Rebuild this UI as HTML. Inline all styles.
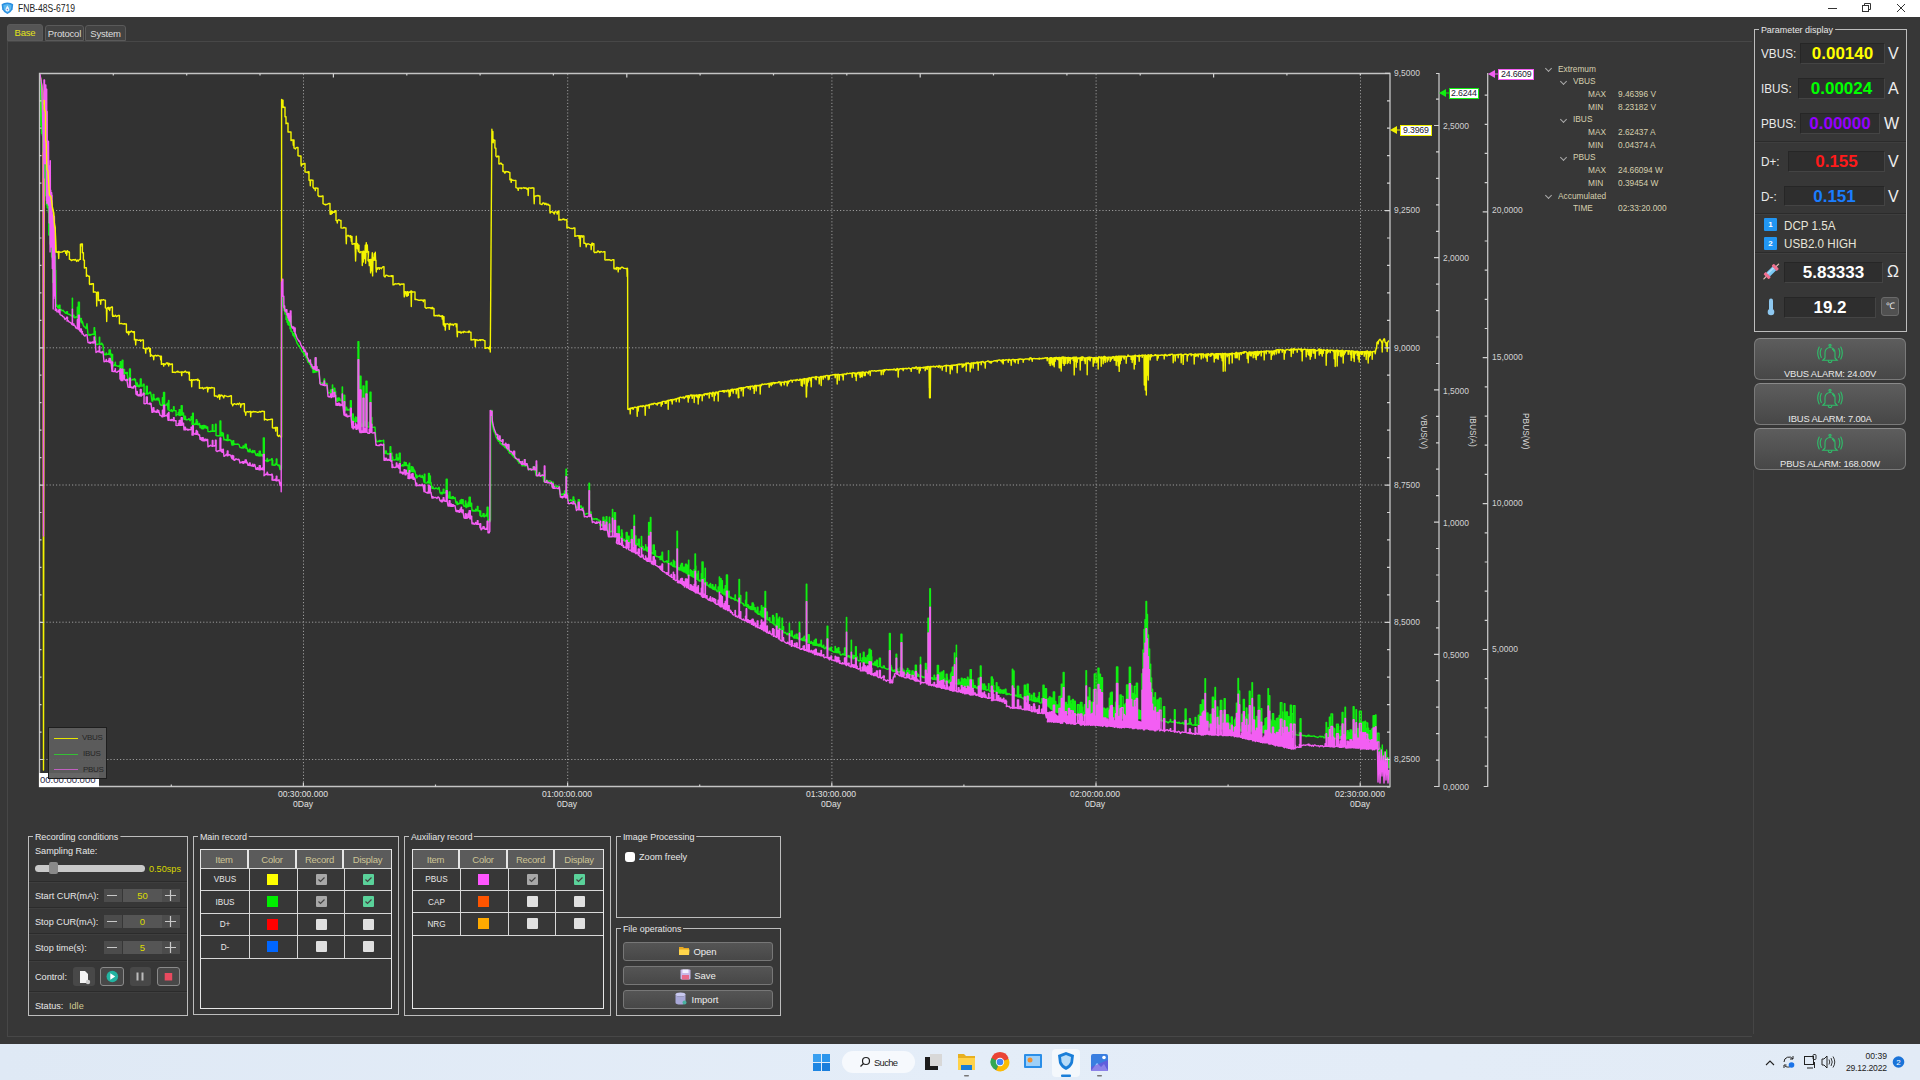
<!DOCTYPE html>
<html><head><meta charset="utf-8">
<style>
*{margin:0;padding:0;box-sizing:border-box}
html,body{width:1920px;height:1080px;overflow:hidden;background:#373737;font-family:"Liberation Sans",sans-serif;color:#e8e8e8}
.a{position:absolute}
#title{left:0;top:0;width:1920px;height:17px;background:#fff}
#title .t{left:17.5px;top:1.6px;font-size:10.2px;color:#222;line-height:13px;transform:scaleX(.84);transform-origin:0 0}
.tab{top:25px;height:16px;border:1px solid #5a5a5a;border-radius:3px 3px 0 0;background:#424242;font-size:9.5px;line-height:16px;text-align:center;color:#ddd;letter-spacing:-0.2px}
.pane{left:7px;top:41px;width:1745px;height:996px;border:1px solid #474747;border-right:none}
.grp{border:1px solid #bdbdbd}
.gt{font-size:9.5px;line-height:11px;background:#373737;padding:0 2px;color:#e8e8e8;transform:scaleX(.94);transform-origin:0 0}
#taskbar{left:0;top:1044px;width:1920px;height:36px;background:linear-gradient(90deg,#dfe9f5,#e4edf8 50%,#e2ebf6)}

.lbl{font-size:9px;line-height:10px;color:#d2d2d2;white-space:nowrap;transform:scaleX(.94);transform-origin:0 0}
.xl{font-size:8.6px;line-height:9.5px;color:#e0e0e0;text-align:center;width:80px;white-space:nowrap}
.vt{font-size:8.4px;line-height:10px;color:#d8d8d8;transform:rotate(90deg);transform-origin:0 0;white-space:nowrap}
.mk{height:11px;background:#fff;border:1px solid;font-size:8.8px;line-height:9px;color:#223;padding:0 1px;white-space:nowrap;letter-spacing:-0.2px}
.tree{font-size:9.8px;line-height:12.7px;color:#d6cfae;white-space:nowrap}
.tree>div:not(.chev){transform:scaleX(.85);transform-origin:0 0}
.chev{width:5px;height:5px;border-right:1px solid #aaa;border-bottom:1px solid #aaa;transform:rotate(45deg)}

.pl{font-size:13.5px;line-height:16px;color:#eaeaea;white-space:nowrap;transform:scaleX(.87);transform-origin:0 0}
.vb{border:1px solid #262626;border-right-color:#444;border-bottom-color:#444;background:#2e2e2e;font-weight:bold;font-size:17px;line-height:19px;text-align:center;white-space:nowrap}
.un{font-size:16px;line-height:18px;color:#eee}
.sep{height:2px;background:#2b2b2b;border-bottom:1px solid #3e3e3e}
.bdg{width:13px;height:13px;background:#2196f3;color:#fff;font-size:8px;line-height:13px;text-align:center;font-weight:bold;border-radius:1px}
.abtn{left:1754px;width:152px;height:42px;border:1px solid #7a7a7a;border-top-color:#8a8a8a;border-radius:6px;background:linear-gradient(#5d5d5d,#474747);font-size:9.4px;color:#e8e8e8;text-align:center;letter-spacing:-0.15px}

.rsep{left:29px;width:158px;height:2px;background:#2b2b2b;border-bottom:1px solid #3e3e3e}
.rl{font-size:9.5px;line-height:11px;color:#e8e8e8;white-space:nowrap;transform:scaleX(.96);transform-origin:0 0}
.sb{width:18px;height:13px;background:#4c4c4c}
.sv{width:39px;height:13px;background:#555;color:#dcdc00;font-size:9.5px;line-height:13px;text-align:center}
.cb{height:19px;border-radius:3px;background:#484848}
.tbl{border:1px solid #e6e6e6}
.th{top:850px;height:18px;background:#5b5b5b;border-right:2px solid #e6e6e6;font-size:9.5px;line-height:19px;text-align:center;color:#cdc596;letter-spacing:-0.25px}
.tr{height:1px;background:#d8d8d8}
.tc{width:1px;background:#d8d8d8}
.td{font-size:9.5px;line-height:12px;color:#e8e8e8;text-align:center;transform:scaleX(.86)}
.sq{width:11px;height:11px}
.ck{width:11px;height:11px;background:#e0e0e0;border-radius:1px}
.fb{left:623px;width:150px;height:19px;border:1px solid #777;border-radius:3px;background:linear-gradient(#555,#474747);font-size:9.5px;line-height:17px;text-align:center;color:#eee}

.tbi{top:1052px;width:20px;height:20px}
</style></head><body>
<div id="title" class="a">
  <svg class="a" style="left:0;top:0" width="16" height="17" viewBox="0 0 16 17"><path d="M1.6 4.2L4.2 3.1L7.4 2.6L10.6 3.1L13.2 4.2L12.6 9.2Q11 12.6 7.4 13.9Q3.8 12.6 2.2 9.2Z" fill="#2b8fe0"/><path d="M3.3 5L7.4 3.9L11.5 5L11 9Q9.8 11.6 7.4 12.6Q5 11.6 3.8 9Z" fill="#5ab8f0"/><path d="M7.4 5.6Q9.3 8.4 9.3 9.6A1.9 1.9 0 0 1 5.5 9.6Q5.5 8.4 7.4 5.6Z" fill="#eef4fb"/><circle cx="7.4" cy="9.6" r=".8" fill="#7a8ad8"/></svg>
  <div class="a t">FNB-48S-6719</div>
</div>
<div class="a tab" style="left:7px;top:24px;width:36px;height:17px;background:#555;border-color:#5a5a5a;color:#e3e31a">Base</div>
<div class="a tab" style="left:45px;width:39px">Protocol</div>
<div class="a tab" style="left:85px;width:41px">System</div>
<div class="a pane"></div>
<svg class="a" style="left:0;top:0" width="1920" height="1080" viewBox="0 0 1920 1080"><rect x="40" y="74" width="1349" height="712" fill="#323232"/><g stroke="#9a9a9a" stroke-width="1" stroke-dasharray="1.2 2" fill="none"><line x1="40" y1="210.5" x2="1389" y2="210.5"/><line x1="40" y1="347.8" x2="1389" y2="347.8"/><line x1="40" y1="485.0" x2="1389" y2="485.0"/><line x1="40" y1="622.2" x2="1389" y2="622.2"/><line x1="40" y1="759.5" x2="1389" y2="759.5"/><line x1="303.5" y1="74" x2="303.5" y2="786"/><line x1="567.7" y1="74" x2="567.7" y2="786"/><line x1="831.9" y1="74" x2="831.9" y2="786"/><line x1="1096.1" y1="74" x2="1096.1" y2="786"/><line x1="1360.5" y1="74" x2="1360.5" y2="786"/></g><g fill="none" stroke-linejoin="round" stroke-width="1.4"><path stroke="#f4f400" d="M40 75L41.5 84L43 93L43.5 770L44 300L44.3 100L44.3 109L45.5 112L45.6 140L46.2 142L46.9 169L48 171L49.4 195L51 197L52.8 210L53.5 212L54.6 226L55.2 228L55.9 252L56.4 252L56.4 252L57.4 251.9L57.7 252.4L58 251.9L58.4 251.5L58.7 258.5L59 251.5L59.4 251.8L60.4 252.2L61.4 252.1L62.4 252L63.4 251.3L64.4 251L65.4 251.1L65.7 253.3L66 251.1L66.4 252.1L66.7 255.2L67 252.1L67.4 250.7L68.4 252L69.4 252L69.4 259.2L69.7 259.3L70 259.2L70.4 259.5L71.4 260.5L72.4 260L73.4 259.7L74.4 260.1L75.4 259.4L76.4 260.7L76.7 261.4L77 260.7L77.4 260.1L78.4 261L79.4 259.4L80.4 259.4L80.4 244.3L80.7 246.5L81 244.3L81.4 244L82.4 244L82.4 252.7L83.4 252.7L83.4 260.1L84.4 260.1L84.4 268.1L85.4 267.7L86.4 267.7L86.4 276.4L87.4 275.3L88.4 276.3L89.4 276.3L89.4 283.8L89.7 284.6L90 283.8L90.4 284.3L91.4 283.8L91.7 284.4L92 283.8L92.4 283.8L93.4 283.8L93.4 292.2L94.4 291.9L95.4 292L96.4 292.6L96.7 306L97 292.6L97.4 292.3L98.4 292.3L98.4 300.5L99.4 300.3L100.4 300.2L100.7 304.2L101 300.2L101.4 299.8L102.4 300.1L103.4 299.6L104.4 300.1L105.4 300.1L105.4 307.9L106.4 308.4L106.7 321.6L107 308.4L107.4 308L108.4 307.5L108.7 309.2L109 307.5L109.4 308.5L109.7 310.5L110 308.5L110.4 307.7L111.4 307L111.7 307.5L112 307L112.4 307L112.4 314.9L112.7 316.3L113 314.9L113.4 316.4L114.4 316.4L115.4 315.2L116.4 316.7L117.4 315.9L118.4 315.5L119.4 315.5L119.4 323.7L120.4 323.6L121.4 323.4L122.4 323.9L123.4 324L124.4 323.8L125.4 324L126.4 324L126.4 331.9L126.7 332.5L127 331.9L127.4 332.8L128.4 331.5L128.7 334.8L129 331.5L129.4 332.7L130.4 331.9L131.4 331.1L132.4 332L133.4 331.6L133.7 332.5L134 331.6L134.4 331.6L134.4 339.9L135.4 339.4L135.7 344.9L136 339.4L136.4 340.1L137.4 339.8L138.4 340.3L138.7 340.4L139 340.3L139.4 340L139.7 340.2L140 340L140.4 340.2L140.7 341.4L141 340.2L141.4 340.5L142.4 339.9L143.4 339.9L143.4 348.4L144.4 348.5L145.4 348.8L145.7 353.1L146 348.8L146.4 348.2L147.4 348.9L148.4 347.4L149.4 348.4L149.7 351.8L150 348.4L150.4 348.4L150.4 356.4L151.4 354.9L152.4 356L153.4 356L153.7 359.8L154 356L154.4 355.9L155.4 355.2L156.4 356L157.4 355.5L158.4 355.5L159.4 356.1L159.7 356.2L160 356.1L160.4 356.2L160.7 359.9L161 356.2L161.4 356.2L161.4 364.4L162.4 364L163.4 363.8L163.7 366.1L164 363.8L164.4 364L165.4 364.6L166.4 362.9L167.4 363L167.7 364.1L168 363L168.4 363.7L168.7 366L169 363.7L169.4 363.4L170.4 364.6L171.4 364L171.7 364.3L172 364L172.4 364L172.4 372.4L173.4 372.1L174.4 372.3L175.4 372.5L176.4 371.9L177.4 371.3L177.7 372.1L178 371.3L178.4 371.8L179.4 372.2L180.4 372.1L181.4 372L181.7 375.6L182 372L182.4 371.9L183.4 372.2L183.7 372.4L184 372.2L184.4 371.7L185.4 371.1L186.4 372.5L187.4 372.3L188.4 372.1L188.7 373.9L189 372.1L189.4 372.1L189.4 380L190.4 380.3L191.4 379.7L191.7 386.8L192 379.7L192.4 380.3L193.4 379.8L194.4 380L195.4 379.8L196.4 379.9L197.4 379.2L197.7 380.5L198 379.2L198.4 380.4L199.4 380.4L199.4 388.3L200.4 387.8L201.4 388.1L202.4 387.5L203.4 389L204.4 387.9L205.4 388.2L206.4 387.4L207.4 387.5L207.7 391.9L208 387.5L208.4 389L209.4 387.7L209.7 387.8L210 387.7L210.4 388L210.7 388.3L211 388L211.4 387.5L212.4 387.7L213.4 387.9L214.4 387.9L214.4 396.1L215.4 396L216.4 396L217.4 396.9L217.7 397.5L218 396.9L218.4 395.2L219.4 395L219.7 399.3L220 395L220.4 396.4L221.4 395.1L222.4 395.7L223.4 397.1L223.7 397.9L224 397.1L224.4 395.4L225.4 395.9L226.4 396.1L227.4 396.6L228.4 396.5L229.4 396.3L230.4 395.8L231.4 395.8L231.4 403.4L232.4 404.4L232.7 405.9L233 404.4L233.4 404.5L234.4 403.6L235.4 404.2L236.4 404.5L237.4 403.4L238.4 404.4L239.4 403.1L240.4 404.3L240.7 407.3L241 404.3L241.4 403.9L241.7 404.9L242 403.9L242.4 403.9L243.4 403.7L244.4 403.7L244.4 411.2L245.4 412.5L245.7 415.3L246 412.5L246.4 412.2L247.4 411.7L248.4 412L249.4 411.6L250.4 411.5L250.7 416.7L251 411.5L251.4 412.4L252.4 412L253.4 411.5L254.4 411.7L255.4 411.6L256.4 411.9L257.4 412.3L258.4 412.3L259.4 411.5L260.4 412L261.4 411.5L262.4 411.1L263.4 411.5L264.4 411.5L264.4 420L265.4 419.2L266.4 419.6L267.4 420.2L268.4 419.6L269.4 419.6L270.4 419.5L271.4 419.1L272.4 419.1L272.4 427.8L273.4 428L274.4 428L275.4 427.5L275.7 431.1L276 427.5L276.4 427.4L277.4 427.4L277.4 435.3L278.4 436.4L279.4 435.3L280.4 436.7L281.5 437L281.6 99.4L282 100.3L282.3 101.8L282.6 100.3L283 100.3L283 107.5L284 107.2L285 107.2L285 116.7L286 116.7L286 123.8L287 123.1L288 123.1L288 132L289 132L290 132L291 132L291 140.6L292 139.9L293 140L293.3 145.3L293.6 140L294 140L294 148L295 148.3L295.3 149.1L295.6 148.3L296 147.9L297 147.5L298 147.5L298 155.7L299 156L300 156L301 156L301 163.7L301.3 166L301.6 163.7L302 164L302.3 164.6L302.6 164L303 163.8L304 163.5L304.3 163.8L304.6 163.5L305 163.5L305 172L306 172.1L307 172.2L308 171.8L308.3 173L308.6 171.8L309 171.8L309 180.2L310 180.1L310.3 185.7L310.6 180.1L311 179.9L312 180.2L313 180.2L313 187.2L314 188.6L315 188.1L315.3 190.6L315.6 188.1L316 187.9L317 188.2L318 188.2L318 195.4L319 196.6L320 196.1L321 196.8L322 195.9L323 195.9L323 203.7L324 204.2L325 204.5L325.3 204.9L325.6 204.5L326 204.4L327 204.5L328 203.8L329 203.5L330 203.5L330 212.3L330.3 214.3L330.6 212.3L331 211.2L331.3 214.1L331.6 211.2L332 211.6L332.3 213.3L332.6 211.6L333 212.4L334 211.7L334.3 212.4L334.6 211.7L335 210.6L336 210.6L336 220.3L337 220.9L337.3 223L337.6 220.9L338 220.2L339 219.7L340 220.5L341 220.5L341 227.9L342 228.1L343 228L344 227.5L345 227.9L346 227.9L346 236.5L346.3 243.7L346.6 236.5L347 236.2L348 235.2L349 236.2L350 235.8L350.3 237.3L350.6 235.8L351 236.5L351.3 241.2L351.6 236.5L352 236.5L352 244.1L353 244.3L354 243.5L355 243.8L355.3 251.6L355.6 261L355.9 251.6L355.6 243.8L355.9 242.9L356.2 243.8L356 244.5L356.3 236.1L356.6 244.5L357 243.8L357.3 248.7L357.6 243.8L358 245.1L358.3 251.2L358.6 245.1L359 245.1L359 252L360 252.8L361 251.5L362 252.2L362.3 265.5L362.6 252.2L363 251.2L363.3 262L363.6 251.2L364 252.3L364.3 256.1L364.6 258.6L364.9 256.1L364.6 252.3L364.9 254.8L365.2 252.3L365 252.1L365.3 245.1L365.6 252.1L365.3 254L365.6 263.2L365.9 254L365.6 252.1L366 252.2L366.3 242.6L366.6 252.2L367 251.8L367.3 245L367.6 251.8L368 251.8L368.3 255.8L368.6 251.8L368 260.6L368.3 260.9L368.6 260.6L369 259.6L369.3 265.6L369.6 259.6L370 259.9L370.3 259.5L370.6 259.9L370.3 261.2L370.6 272.9L370.9 261.2L370.6 259.9L370.9 267.1L371.2 259.9L371 259.5L371.3 270.9L371.6 259.5L371.3 262.7L371.6 264.8L371.9 262.7L371.6 259.5L372 260.5L372.3 252.7L372.6 260.5L372.3 262.1L372.6 275.9L372.9 262.1L372.6 260.5L372.9 257.7L373.2 260.5L373 261L374 259.8L374.3 253.7L374.6 259.8L375 260.2L375.3 252.3L375.6 260.2L376 260.2L376 267.7L376.3 272L376.6 267.7L377 268.3L377.3 269.3L377.6 268.3L378 267.6L379 267.9L379.3 269.4L379.6 267.9L380 267.8L381 268.2L381.3 268.8L381.6 268.2L382 267.7L383 266.8L384 266.8L384 276.1L385 277L386 275.1L387 275.4L388 276L389 276.2L390 276.1L391 275.8L391.3 276.5L391.6 275.8L392 275.7L392.3 276.4L392.6 275.7L393 275.7L393 284.9L394 284.7L395 283.7L396 284L397 283.9L398 283.8L399 283.5L400 285.1L401 283.9L402 284.4L403 283.9L404 283.9L404 292.1L404.3 296.9L404.6 292.1L405 291.7L405.3 293.6L405.6 291.7L406 292.7L406.3 296L406.6 292.7L407 291.7L407.3 296.1L407.6 291.7L408 292.7L408.3 295.3L408.6 292.7L409 291.9L410 292.3L411 291L411.3 306.6L411.6 291L412 291.7L413 292.2L414 291.9L415 291.9L415 299.6L416 299.4L417 299.7L418 300L419 300.3L420 300.2L420.3 300.3L420.6 300.2L421 300L422 300.2L423 300.2L423.3 301.7L423.6 300.2L424 299.9L425 299.9L425 307.3L426 308.1L426.3 308.3L426.6 308.1L427 307.9L428 307.6L429 307.7L430 307.6L431 308.5L432 307.5L432.3 308.8L432.6 307.5L433 308.4L434 308.4L434 315.8L435 315.5L436 315.8L437 315.3L438 316.1L439 315.1L440 316.4L441 316L441.3 316.5L441.6 316L442 315.7L442.3 319.1L442.6 315.7L443 316.7L443.3 324.9L443.6 316.7L444 316.7L444 323.8L444.3 326.2L444.6 323.8L445 323.9L445.3 330.1L445.6 323.9L446 324.2L447 323.8L447.3 323.8L447.6 323.8L448 324L449 324.7L449.3 329.4L449.6 324.7L450 323.4L451 325L452 324.1L453 324.9L453.3 325.4L453.6 324.9L454 324.2L455 323.8L456 323.9L456.3 326.9L456.6 323.9L457 323.9L457 331.4L457.3 336.8L457.6 331.4L458 331.5L459 332.3L459.3 332.4L459.6 332.3L460 331.5L461 333.2L462 331.9L463 332.1L463.3 332.7L463.6 332.1L464 331.3L465 332L466 332.1L467 332.1L468 332L468.3 332.5L468.6 332L469 330.9L470 332.3L471 332.3L471 340L472 339.8L473 339.9L474 339.3L475 339.7L475.3 346.7L475.6 339.7L476 340L477 339.8L478 340.6L479 340.2L480 339.7L480.3 340.6L480.6 339.7L481 339.7L482 340L483 339.7L484 340.6L485 340.6L485 348.4L486 348.3L487 347.6L488 347.8L489 348.9L490 346L490.3 352L491.9 129.3L491.9 131.5L492.9 131.5L492.9 139.5L493.2 142.7L493.5 139.5L493.9 140.3L494.9 140.3L494.9 148.1L495.9 148.1L495.9 156L496.9 156.9L497.9 156.1L498.2 156.4L498.5 156.1L498.9 156.1L498.9 163.9L499.9 164L500.9 163L501.9 164.4L502.9 164.4L502.9 171.6L503.9 171.3L504.9 173.2L505.9 171.4L506.9 171.8L507.9 171.6L508.9 172.4L509.9 172.4L509.9 179.8L510.9 179.2L511.2 182.4L511.5 179.2L511.9 180.4L512.9 180.2L513.9 180.6L514.9 180.4L515.9 180.4L515.9 187.6L516.9 187.9L517.9 188.7L518.2 190.3L518.5 188.7L518.9 187.9L519.9 188.1L520.9 187.9L521.2 188.7L521.5 187.9L521.9 188L522.9 188.1L523.9 187.5L524.9 188.4L525.9 187.7L526.9 189.2L527.9 188.2L528.2 195.5L528.5 188.2L528.9 187.9L529.9 187.9L530.9 188.4L531.9 187.8L532.9 188L533.9 188L533.9 195.9L534.2 203.8L534.5 195.9L534.9 196.3L535.9 196L536.9 195.8L537.9 195.5L538.9 196L539.9 196L539.9 203.8L540.9 204.1L541.9 204.6L542.9 202.9L543.9 203L544.9 204.5L545.9 203.3L546.9 204.9L547.9 204L548.9 205.2L549.9 205.2L549.9 212.1L550.2 213.1L550.5 212.1L550.9 211.7L551.9 212L552.9 212L553.9 213.2L554.2 214.1L554.5 213.2L554.9 211.6L555.9 211.9L556.9 212.5L557.2 214.1L557.5 212.5L557.9 211.2L558.9 211.2L558.9 220.3L559.9 219.5L560.9 220L561.9 219.7L562.9 219.1L563.2 219.4L563.5 219.1L563.9 218.9L564.9 220.1L565.9 219.6L566.9 219.6L566.9 228L567.9 227.1L568.9 227.6L569.9 228.1L570.9 228.4L571.9 228.5L572.9 228.6L573.9 227.9L574.9 227.9L574.9 236.4L575.9 236.1L576.9 235.8L577.9 235.7L578.9 235.6L579.2 238.5L579.5 235.6L579.9 236.5L580.2 246.5L580.5 236.5L580.9 235.6L581.9 235.9L582.2 237.3L582.5 235.9L582.9 235.9L583.9 235.9L583.9 243.3L584.9 243.3L585.2 243.5L585.5 243.3L585.9 244.1L586.2 246.8L586.5 244.1L586.9 244.6L587.9 243.7L588.9 244.1L589.9 244.6L590.9 244.6L591.2 249.6L591.5 244.6L591.9 243.2L592.2 245.4L592.5 243.2L592.9 243.8L593.9 243.8L593.9 251.8L594.9 252.7L595.9 252.1L596.9 252.5L597.9 250.8L598.9 251.8L599.2 252.2L599.5 251.8L599.9 252.6L600.9 251.4L601.9 251.8L602.9 252.1L603.9 251.6L604.9 251.6L604.9 259.8L605.9 260.1L606.9 259.7L607.9 260L608.9 259.6L609.9 260L610.9 260.4L611.2 260.6L611.5 260.4L611.9 260.2L612.9 259.7L613.9 259.7L613.9 268.3L614.2 268.9L614.5 268.3L614.9 268.5L615.9 268.1L616.2 269.5L616.5 268.1L616.9 267.3L617.9 267.6L618.2 271.9L618.5 267.6L618.9 268.9L619.9 267.9L620.2 269.1L620.5 267.9L620.9 268L621.9 267.1L622.9 267.5L623.9 268.4L624.9 268.4L625.9 268.6L626.9 268.3L627.2 276.4L627.5 268.3L627.6 271.5L627.8 409.3L628 409L628.2 409.5L628.5 409L629 409.2L630 408.3L630.2 413.9L630.5 408.3L631 408.6L632 407.7L632.2 408.5L632.5 407.7L633 408.3L633.2 409.3L633.5 408.3L634 407.5L635 407.2L636 407.5L637 407.4L637.2 416.3L637.5 407.4L638 406.6L638.2 411L638.5 406.6L639 406.4L640 406.5L641 406L642 406.4L642.2 406.9L642.5 406.4L643 405.6L644 406.2L644.2 406.3L644.5 406.2L645 406.3L645.2 415.3L645.5 406.3L646 405.1L647 405.4L647.2 405.9L647.5 405.4L648 405.3L649 404.7L649.2 408.3L649.5 404.7L650 404.2L651 404.7L652 403.6L653 404.5L654 403.3L655 403.4L656 404.1L657 403.5L657.2 405.1L657.5 403.5L658 403L658.2 403.6L658.5 403L659 403.3L660 402.4L661 403.1L661.2 406.1L661.5 403.1L662 401.8L662.2 404.3L662.5 401.8L663 401.4L664 401.4L665 401.5L665.2 403.3L665.5 401.5L666 401.3L666.2 403.3L666.5 401.3L667 400.9L668 400.3L668.2 409.3L668.5 400.3L669 400.6L670 400L671 399.7L671.2 401L671.5 399.7L672 400.3L672.2 404L672.5 400.3L673 399.3L674 399.9L675 398.9L676 398.9L676.2 401.6L676.5 398.9L677 398.4L677.2 398.8L677.5 398.4L678 398.2L678.2 398.2L678.5 398.2L679 397.7L679.2 402L679.5 397.7L680 397.3L681 397.2L682 397.9L683 397L683.2 397.5L683.5 397L684 397.4L684.2 398.5L684.5 397.4L685 397.5L686 396L687 396L687.2 397.2L687.5 396L688 395.7L688.2 402.1L688.5 395.7L689 396.3L689.2 398L689.5 396.3L690 395.5L691 395L691.2 395.7L691.5 395L692 395.3L692.2 398.4L692.5 395.3L693 395.2L694 395.3L694.2 402.5L694.5 395.3L695 395.6L696 395L696.2 396.4L696.5 395L697 395.6L697.2 397.3L697.5 395.6L698 395.1L698.2 404.1L698.5 395.1L699 394.8L699.2 397.8L699.5 394.8L700 394.9L700.2 395.8L700.5 394.9L701 394.8L702 395.2L702.2 400.8L702.5 395.2L703 394.8L704 394.2L704.2 395.6L704.5 394.2L705 393.7L705.2 394.1L705.5 393.7L706 394.1L706.2 394.5L706.5 394.1L707 393.6L707.2 394.7L707.5 393.6L708 393.4L709 393.4L709.2 398L709.5 393.4L710 392.8L711 393.6L711.2 393.9L711.5 393.6L712 393L712.2 396.5L712.5 393L713 392.2L714 393.7L714.2 400.8L714.5 393.7L715 392.6L715.2 395.2L715.5 392.6L716 391.9L717 392.7L717.2 393.7L717.5 392.7L718 392L718.2 401L718.5 392L719 391.5L720 391.2L721 391.4L721.2 391.4L721.5 391.4L722 390.9L722.2 391.4L722.5 390.9L723 390.7L723.2 391.7L723.5 390.7L724 391L724.2 392.2L724.5 391L725 390.5L726 391.1L726.2 391.7L726.5 391.1L727 390.5L728 390.1L728.2 391.9L728.5 390.1L729 390.8L729.2 396.7L729.5 390.8L730 390.2L730.2 395.7L730.5 390.2L731 389.6L731.2 391L731.5 389.6L732 389.2L732.2 390.8L732.5 389.2L733 389.6L733.2 393.1L733.5 389.6L734 389.3L735 389.4L736 389.2L736.2 393.8L736.5 389.2L737 388.8L737.2 389.7L737.5 388.8L738 388.6L738.3 397.8L738.6 388.6L738.2 397.4L738.5 397.8L738.9 397.4L738.5 388.6L739 387.9L740 388.3L741 387.7L741.2 390.9L741.5 387.7L742 387.9L742.2 389.1L742.5 387.9L743 387.6L743.2 396L743.5 387.6L744 387.5L745 387.8L746 387L747 386.7L748 386.6L748.2 388.5L748.5 386.6L749 386.8L750 386.3L750.2 389.6L750.5 386.3L751 386.6L751.2 386.6L751.5 386.6L752 386L752.2 386L752.5 386L753 386.4L753.2 388.4L753.5 386.4L754 386.3L754.2 393.4L754.5 386.3L755 385.4L755.2 386.3L755.5 385.4L756 386.4L756.2 390.9L756.5 386.4L757 385.3L758 385.6L758.2 385.9L758.5 385.6L759 385.3L760 385.1L760.2 394.1L760.5 385.1L761 384.9L761.2 385.9L761.5 384.9L762 384L762.2 384.5L762.5 384L763 384.5L764 384.4L765 383.9L766 384.3L767 384L768 383.7L768.2 383.8L768.5 383.7L769 383.4L769.2 387.2L769.5 383.4L770 383.5L770.2 384.6L770.5 383.5L771 382.9L771.2 385.7L771.5 382.9L772 383.3L772.2 384.6L772.5 383.3L773 382.5L774 382.6L774.2 383.9L774.5 382.6L775 382.6L775.2 383.3L775.5 382.6L776 382.8L777 382.9L778 382.3L778.2 382.7L778.5 382.3L779 381.7L780 382.1L780.2 384.1L780.5 382.1L781 382.5L781.2 385.7L781.5 382.5L782 382.1L783 382.3L784 382.3L784.2 384.8L784.5 382.3L785 381.3L786 381.8L786.2 382.1L786.5 381.8L787 381.5L787.2 385.9L787.5 381.5L788 381.2L788.2 383.5L788.5 381.2L789 381.1L789.2 381.7L789.5 381.1L790 380.7L791 380.1L792 380.6L792.2 382.2L792.5 380.6L793 380.3L794 380.1L795 380.1L795.2 380.4L795.5 380.1L796 380.7L797 379.4L798 380.2L799 380.1L799.2 380.4L799.5 380.1L800 379.1L801 379.8L801.2 385.4L801.5 379.8L802 379.3L802.2 386.2L802.5 379.3L803 379.8L804 378.6L804.2 383.9L804.5 378.6L805 378.7L806 379.1L806.3 397L806.6 379.1L806.2 380L806.5 397L806.9 380L806.5 379.1L807 378.5L807.2 385.9L807.5 378.5L808 378.5L808.2 382L808.5 378.5L809 377.8L809.2 378L809.5 377.8L810 378.3L810.2 380.5L810.5 378.3L811 377.7L811.2 386.7L811.5 377.7L812 377.2L813 377.5L814 377.1L815 377.1L815.2 378.9L815.5 377.1L816 376.6L816.2 379.7L816.5 376.6L817 376.8L818 377.1L819 377.6L819.2 383.9L819.5 377.6L820 376.9L821 376.5L821.2 385.5L821.5 376.5L822 376.9L823 376.3L823.2 379.2L823.5 376.3L824 376.3L825 376L825.2 377.7L825.5 376L826 375.7L827 375.4L828 376.1L828.2 379.8L828.5 376.1L829 375.6L829.2 379.1L829.5 375.6L830 375.6L831 375.1L832 375.1L833 374.7L834 374.9L835 374.4L835.2 377.8L835.5 374.4L836 374.5L836.2 374.7L836.5 374.5L837 375.1L837.2 384L837.5 375.1L838 374.2L839 374.6L839.2 380.3L839.5 374.6L840 374.8L841 374.6L842 374.3L842.2 376L842.5 374.3L843 374.5L843.2 380L843.5 374.5L844 374L845 373.9L846 374.5L847 373.3L848 373.5L849 373.6L850 373.1L851 373.6L852 373L852.2 377.2L852.5 373L853 372.8L854 372.9L854.2 373.4L854.5 372.9L855 373.1L855.2 376.3L855.5 373.1L856 373.3L856.2 380.6L856.5 373.3L857 373.2L857.2 373.9L857.5 373.2L858 372.5L859 372.5L859.2 374.7L859.5 372.5L860 372.5L860.2 377.5L860.5 372.5L861 372.4L861.2 376.2L861.5 372.4L862 372.2L862.2 377L862.5 372.2L863 371.9L864 372.5L864.2 375.6L864.5 372.5L865 372.7L865.2 375.6L865.5 372.7L866 371.9L867 372.2L868 372.4L868.2 373.9L868.5 372.4L869 371.2L869.2 371.5L869.5 371.2L870 371.4L870.2 375.5L870.5 371.4L871 370.9L872 370.7L873 371.1L874 370.8L875 370.7L876 371.4L877 370.7L878 370.8L879 370.5L879.2 370.7L879.5 370.5L880 370.5L881 370.5L881.2 374.7L881.5 370.5L882 370.5L883 370.1L883.2 374.5L883.5 370.1L884 369.7L884.2 371.7L884.5 369.7L885 370.4L886 369.4L887 369.6L888 369.7L888.2 370.1L888.5 369.7L889 369.9L890 369.5L891 369.8L892 369.4L893 370L894 368.9L895 369.5L895.2 370.3L895.5 369.5L896 369.6L896.2 370.5L896.5 369.6L897 368.6L897.2 369.2L897.5 368.6L898 370L898.2 377.1L898.5 370L899 369L899.2 369.8L899.5 369L900 368.8L901 368.8L902 369L903 368.5L903.2 370.6L903.5 368.5L904 368.8L905 368.5L906 368.4L906.2 368.8L906.5 368.4L907 368.9L908 368.4L909 367.9L910 368.8L911 368.6L911.2 371.4L911.5 368.6L912 368.1L913 367.5L914 368.4L915 367.4L915.2 368.2L915.5 367.4L916 367L916.2 367.2L916.5 367L917 368.5L917.2 369.2L917.5 368.5L918 367.7L919 367.4L919.2 373.1L919.5 367.4L920 367.4L920.2 370.6L920.5 367.4L921 367.8L922 367.6L923 367.4L923.2 368.2L923.5 367.4L924 367.2L925 367.1L925.2 370.6L925.5 367.1L926 366.9L926.2 368.9L926.5 366.9L927 366.8L927.2 369.3L927.5 366.8L928 366.4L929 367L929.3 388L929.6 367L929.2 367.2L929.5 397.8L929.9 367.2L929.5 367L929.8 397.8L930.1 367L930 366.4L930.3 397.8L930.6 366.4L931 366.4L932 367L933 366.3L933.2 366.9L933.5 366.3L934 366.3L935 366.9L935.2 367.2L935.5 366.9L936 366.3L937 366L938 366.7L938.2 367.4L938.5 366.7L939 365.5L940 366.2L940.2 367.9L940.5 366.2L941 366.2L942 366.7L942.2 370.1L942.5 366.7L943 366.2L944 366L945 365.6L946 365.3L946.2 371.5L946.5 365.3L947 365.6L948 365.5L949 365.7L950 365.7L950.2 373.7L950.5 365.7L951 365.4L951.2 368L951.5 365.4L952 365.2L952.2 369.8L952.5 365.2L953 365.3L954 365L955 365.2L955.2 365.4L955.5 365.2L956 364.8L957 364.8L957.2 372.8L957.5 364.8L958 364.2L959 364.1L959.2 364.8L959.5 364.1L960 364.6L961 364L962 364.1L962.2 367.3L962.5 364.1L963 364.2L963.2 366.7L963.5 364.2L964 364.1L964.2 365.5L964.5 364.1L965 364.1L965.2 364.4L965.5 364.1L966 363.1L966.2 371.1L966.5 363.1L967 363.5L968 362.9L968.2 363.5L968.5 362.9L969 363.6L970 363.8L970.2 371.8L970.5 363.8L971 363L971.2 368L971.5 363L972 362.9L973 363L973.2 368.1L973.5 363L974 362.6L975 363.5L976 362.6L977 362.1L977.2 363.6L977.5 362.1L978 362.3L978.2 370.3L978.5 362.3L979 362.5L980 362.1L981 361.9L981.2 364.7L981.5 361.9L982 361.7L983 361.5L984 362.8L985 362.2L985.2 368.1L985.5 362.2L986 361.6L987 361.4L988 360.8L989 361.5L989.2 362.2L989.5 361.5L990 361.6L990.2 362.9L990.5 361.6L991 361.5L991.2 363.1L991.5 361.5L992 361.9L993 361.4L994 360.9L995 360.6L995.2 361.1L995.5 360.6L996 360.7L997 360.5L997.2 361.8L997.5 360.5L998 360.3L999 360L1000 360L1001 361L1002 360L1002.2 362.6L1002.5 360L1003 359.8L1003.2 363.9L1003.5 359.8L1004 360.1L1005 360.3L1006 359.7L1007 359.9L1008 360L1008.2 362.3L1008.5 360L1009 359.3L1010 360.4L1011 360L1011.2 365.2L1011.5 360L1012 359.7L1013 359.3L1014 359.7L1014.2 361.4L1014.5 359.7L1015 359.8L1015.2 362.7L1015.5 359.8L1016 359.6L1017 359.6L1018 359.3L1018.2 363.5L1018.5 359.3L1019 359.7L1020 358.8L1021 359.2L1022 359.2L1023 359.5L1023.2 362.2L1023.5 359.5L1024 359.7L1025 359L1026 358.9L1027 359L1028 358.9L1028.2 359.1L1028.5 358.9L1029 359.1L1029.2 360.1L1029.5 359.1L1030 357.7L1031 358.2L1031.2 359.1L1031.5 358.2L1032 358.7L1032.2 361.3L1032.5 358.7L1033 358.6L1034 358.4L1035 358.7L1036 358.6L1036.2 358.6L1036.5 358.6L1037 358.8L1038 358.7L1039 358.3L1039.2 359.4L1039.5 358.3L1040 358.4L1041 358.8L1042 358.3L1043 358.5L1044 358.3L1045 357.8L1045.2 358L1045.5 357.8L1046 358.1L1047 357.7L1047.2 360.8L1047.5 357.7L1048 358.5L1049 359.1L1049.2 363.4L1049.5 359.1L1050 357.7L1050.2 365.5L1050.5 357.7L1051 357.8L1051.2 362.7L1051.5 357.8L1052 358.2L1052.2 364.9L1052.5 358.2L1053 358.1L1053.2 364.8L1053.5 358.1L1054 357.7L1054.2 366.8L1054.5 357.7L1055 357.8L1055.2 361.2L1055.5 357.8L1056 357.4L1056.2 358.6L1056.5 357.4L1057 357.8L1057.2 359.3L1057.5 357.8L1058 357.6L1058.2 359.9L1058.5 357.6L1059 357.5L1059.2 367.8L1059.5 357.5L1060 357.9L1060.2 367.7L1060.5 357.9L1061 357.5L1061.2 371.1L1061.5 357.5L1062 357.2L1062.2 358.2L1062.5 357.2L1063 357L1063.2 363.3L1063.5 357L1064 357.3L1064.2 365.4L1064.5 357.3L1065 357.5L1065.2 363.6L1065.5 357.5L1066 357.7L1067 357.6L1067.2 363.6L1067.5 357.6L1068 357.4L1068.2 362.6L1068.5 357.4L1069 357.7L1069.2 360.2L1069.5 357.7L1070 357.8L1070.2 363.5L1070.5 357.8L1071 358.5L1071.2 359L1071.5 358.5L1072 357.7L1072.2 358.4L1072.5 357.7L1073 357.4L1073.2 360.5L1073.5 357.4L1074 357.3L1074.2 374.9L1074.5 357.3L1075 357.6L1075.2 361.2L1075.5 357.6L1076 357.1L1076.2 367.2L1076.5 357.1L1077 358.3L1077.2 362.2L1077.5 358.3L1078 358L1078.2 358.6L1078.5 358L1079 358L1079.2 358.5L1079.5 358L1080 357.7L1080.2 370L1080.5 357.7L1081 357.3L1081.2 360.5L1081.5 357.3L1082 356.9L1082.2 360.3L1082.5 356.9L1083 357L1084 357.9L1084.2 360.8L1084.5 357.9L1085 358.3L1085.2 363.6L1085.5 358.3L1086 357.8L1087 357.9L1087.2 374.7L1087.5 357.9L1088 357.3L1088.2 359.3L1088.5 357.3L1089 357.1L1089.2 359.7L1089.5 357.1L1090 357.6L1090.2 360.9L1090.5 357.6L1091 357.3L1092 357.6L1093 357.9L1093.2 366.3L1093.5 357.9L1094 357.6L1094.2 362.8L1094.5 357.6L1095 358L1095.2 359.7L1095.5 358L1096 357.6L1096.2 362.7L1096.5 357.6L1097 357.9L1097.2 361.7L1097.5 357.9L1098 357.5L1098.2 369L1098.5 357.5L1099 356.7L1100 357.4L1100.2 358L1100.5 357.4L1101 357L1101.2 366.3L1101.5 357L1102 357.4L1102.2 358.5L1102.5 357.4L1103 357.1L1103.2 363.7L1103.5 357.1L1104 356.4L1104.2 360.1L1104.5 356.4L1105 357L1105.2 362.4L1105.5 357L1106 357.7L1107 357.5L1107.2 361.7L1107.5 357.5L1108 357.2L1108.2 360L1108.5 357.2L1109 357.1L1110 357.2L1110.2 361.4L1110.5 357.2L1111 357.6L1111.2 359.9L1111.5 357.6L1112 356.9L1112.2 358.3L1112.5 356.9L1113 356.6L1113.2 357.7L1113.5 356.6L1114 357.1L1114.2 360.1L1114.5 357.1L1115 356.9L1115.2 360.4L1115.5 356.9L1116 356.3L1116.2 365.2L1116.5 356.3L1117 356.6L1117.2 361L1117.5 356.6L1118 356.3L1118.2 365.9L1118.5 356.3L1119 356.2L1119.2 371.4L1119.5 356.2L1120 356.2L1120.2 363.8L1120.5 356.2L1121 356.3L1121.2 360.3L1121.5 356.3L1122 356.2L1123 356.2L1123.2 357.7L1123.5 356.2L1124 356.1L1124.2 359.1L1124.5 356.1L1125 356.3L1125.2 356.6L1125.5 356.3L1126 357L1126.2 363.2L1126.5 357L1127 356.5L1127.2 356.6L1127.5 356.5L1128 355L1129 356.3L1130 356.3L1130.2 356.3L1130.5 356.3L1131 356.2L1131.2 359.4L1131.5 356.2L1132 356.2L1132.2 362.5L1132.5 356.2L1133 355.9L1133.2 359.6L1133.5 355.9L1134 355.9L1134.2 369.1L1134.5 355.9L1135 355.3L1135.2 364.4L1135.5 355.3L1136 355.8L1137 355.9L1137.2 356.2L1137.5 355.9L1138 355.7L1138.2 356.6L1138.5 355.7L1139 355.2L1139.2 361.3L1139.5 355.2L1140 355.7L1140.2 356.2L1140.5 355.7L1141 355.6L1142 355.1L1142.2 357.4L1142.5 355.1L1143 355.1L1144 355.5L1144.3 385L1144.6 355.5L1144.2 360.7L1144.5 385L1144.8 360.7L1144.5 355.5L1145 355L1145.3 390L1145.6 355L1146 355.6L1146.3 395L1146.6 355.6L1147 355.8L1147.3 375L1147.6 355.8L1148 354.8L1148.3 380L1148.6 354.8L1149 355.5L1149.2 356.1L1149.5 355.5L1150 355L1150.2 359.9L1150.5 355L1151 354.8L1151.2 356.9L1151.5 354.8L1152 355.5L1153 355.9L1154 355.6L1155 354.7L1155.2 355.6L1155.5 354.7L1156 355.3L1157 355.2L1157.2 360.3L1157.5 355.2L1158 355.3L1158.2 358L1158.5 355.3L1159 355.4L1160 355.3L1161 355.2L1162 354.8L1163 355.3L1164 355.2L1164.2 359L1164.5 355.2L1165 354.5L1165.2 355.5L1165.5 354.5L1166 354.8L1167 356L1168 355.1L1169 354.6L1169.2 355.3L1169.5 354.6L1170 354.4L1170.2 355.4L1170.5 354.4L1171 354.4L1172 354.3L1172.2 354.3L1172.5 354.3L1173 355.1L1173.2 362.7L1173.5 355.1L1174 354.9L1174.2 355.3L1174.5 354.9L1175 355.1L1175.2 361L1175.5 355.1L1176 354.8L1176.2 355.2L1176.5 354.8L1177 354.9L1178 354.5L1178.2 357.7L1178.5 354.5L1179 354.7L1180 354.3L1181 354.2L1181.2 362.7L1181.5 354.2L1182 355.3L1183 354.8L1183.2 364.4L1183.5 354.8L1184 354.6L1185 354.1L1186 354.2L1187 354.6L1187.2 361.1L1187.5 354.6L1188 355L1188.2 355.5L1188.5 355L1189 354.1L1190 354L1190.2 354.1L1190.5 354L1191 354L1191.2 355.7L1191.5 354L1192 354.3L1193 354.9L1194 354.4L1194.2 364L1194.5 354.4L1195 353.9L1195.2 356.3L1195.5 353.9L1196 354.5L1196.2 356.1L1196.5 354.5L1197 354.4L1197.2 355.3L1197.5 354.4L1198 354.1L1198.2 356.7L1198.5 354.1L1199 354.2L1200 353.9L1200.2 354.7L1200.5 353.9L1201 354L1201.2 359L1201.5 354L1202 353.9L1202.2 354.2L1202.5 353.9L1203 354L1203.2 357.9L1203.5 354L1204 354.7L1205 354.9L1205.2 356.8L1205.5 354.9L1206 354.1L1206.2 357.9L1206.5 354.1L1207 354.1L1207.2 361.3L1207.5 354.1L1208 353.8L1208.2 355.3L1208.5 353.8L1209 354.5L1210 354.5L1210.2 356.4L1210.5 354.5L1211 353.6L1211.2 355.8L1211.5 353.6L1212 353.5L1212.2 354L1212.5 353.5L1213 353.9L1213.2 355.1L1213.5 353.9L1214 354.4L1214.2 362L1214.5 354.4L1215 354L1215.2 358.4L1215.5 354L1216 353.7L1216.2 357.6L1216.5 353.7L1217 353.6L1217.2 358.6L1217.5 353.6L1218 353.6L1218.2 359.2L1218.5 353.6L1219 353.9L1219.2 354.1L1219.5 353.9L1220 353.6L1220.2 354.9L1220.5 353.6L1221 354.8L1221.2 357.8L1221.5 354.8L1222 353.5L1222.2 360.8L1222.5 353.5L1223 353.6L1223.2 371.2L1223.5 353.6L1224 353.7L1224.2 354.1L1224.5 353.7L1225 353.4L1225.2 371L1225.5 353.4L1226 354.2L1226.2 354.8L1226.5 354.2L1227 353.9L1227.2 356.8L1227.5 353.9L1228 354.3L1228.2 355.2L1228.5 354.3L1229 353.6L1229.2 363.8L1229.5 353.6L1230 354L1230.2 354.6L1230.5 354L1231 353.4L1231.2 354.7L1231.5 353.4L1232 353.2L1232.2 362.9L1232.5 353.2L1233 353.4L1234 353.7L1235 353.5L1235.2 357.8L1235.5 353.5L1236 352.4L1236.2 357.5L1236.5 352.4L1237 353.4L1237.2 357.9L1237.5 353.4L1238 353L1238.2 353.5L1238.5 353L1239 353.6L1239.2 359.8L1239.5 353.6L1240 352.7L1240.2 352.8L1240.5 352.7L1241 352.9L1241.2 354.5L1241.5 352.9L1242 352.6L1242.2 352.9L1242.5 352.6L1243 352.2L1243.2 353.2L1243.5 352.2L1244 351.7L1244.2 353L1244.5 351.7L1245 352L1246 351.6L1247 353L1247.2 358.5L1247.5 353L1248 353.5L1248.2 362.7L1248.5 353.5L1249 352L1249.2 353.9L1249.5 352L1250 352.2L1250.2 355.6L1250.5 352.2L1251 352.1L1251.2 356L1251.5 352.1L1252 352.6L1252.2 353.3L1252.5 352.6L1253 352.1L1253.2 357.8L1253.5 352.1L1254 352L1254.2 354.2L1254.5 352L1255 351.7L1255.2 357.6L1255.5 351.7L1256 352.2L1256.2 359.6L1256.5 352.2L1257 351.4L1257.2 355.6L1257.5 351.4L1258 352.5L1258.2 355.3L1258.5 352.5L1259 351.6L1259.2 353.9L1259.5 351.6L1260 352.1L1261 351.3L1261.2 355.9L1261.5 351.3L1262 351.6L1263 351.8L1264 351.2L1264.2 359.9L1264.5 351.2L1265 351.6L1265.2 351.8L1265.5 351.6L1266 350.9L1266.2 353.8L1266.5 350.9L1267 351.1L1268 351L1269 351.1L1269.2 353.1L1269.5 351.1L1270 351.7L1271 351.1L1271.2 359.4L1271.5 351.1L1272 351.1L1272.2 355.1L1272.5 351.1L1273 351.1L1273.2 353.2L1273.5 351.1L1274 350.8L1274.2 354.8L1274.5 350.8L1275 351.2L1276 350L1276.2 354L1276.5 350L1277 349.8L1278 349.8L1278.2 352.7L1278.5 349.8L1279 350.2L1279.2 352.9L1279.5 350.2L1280 349.5L1281 349.9L1282 349.9L1282.2 352.2L1282.5 349.9L1283 349.6L1284 350.7L1284.2 359.2L1284.5 350.7L1285 350.1L1285.2 353L1285.5 350.1L1286 350.2L1287 349.4L1288 349.7L1289 349.9L1289.2 350.3L1289.5 349.9L1290 349.6L1290.2 350.2L1290.5 349.6L1291 349L1291.2 356.5L1291.5 349L1292 349.4L1293 349.2L1293.2 353.2L1293.5 349.2L1294 348.4L1295 350.1L1296 349.2L1297 349.8L1297.2 352.2L1297.5 349.8L1298 349L1298.2 349.1L1298.5 349L1299 349.2L1300 349.1L1300.2 349.8L1300.5 349.1L1301 349L1301.2 351.2L1301.5 349L1302 349.7L1302.2 360.9L1302.5 349.7L1303 349.6L1303.2 349.8L1303.5 349.6L1304 349.2L1304.2 349.5L1304.5 349.2L1305 349.1L1306 350L1306.2 356.8L1306.5 350L1307 349.5L1307.2 351.4L1307.5 349.5L1308 350.2L1308.2 354.5L1308.5 350.2L1309 349.6L1309.2 355.6L1309.5 349.6L1310 349.7L1310.2 359.2L1310.5 349.7L1311 349.6L1311.2 356.5L1311.5 349.6L1312 349.9L1313 349.4L1313.2 353.1L1313.5 349.4L1314 349.6L1314.2 353L1314.5 349.6L1315 349.9L1315.2 358.3L1315.5 349.9L1316 350.5L1317 350.9L1318 350L1319 348.9L1319.2 355.1L1319.5 348.9L1320 350.1L1320.2 353.2L1320.5 350.1L1321 349.5L1321.2 353.8L1321.5 349.5L1322 350.3L1322.2 356.1L1322.5 350.3L1323 350L1323.2 353.4L1323.5 350L1324 349.7L1325 350.4L1326 350.5L1326.2 365.3L1326.5 350.5L1327 349.7L1327.2 353.2L1327.5 349.7L1328 350.5L1328.2 352L1328.5 350.5L1329 350.3L1329.2 350.7L1329.5 350.3L1330 350.1L1330.2 352.6L1330.5 350.1L1331 350.2L1332 350.1L1333 350.7L1333.2 351.6L1333.5 350.7L1334 350.4L1334.2 358.8L1334.5 350.4L1335 350.6L1335.2 366.6L1335.5 350.6L1336 350.5L1336.2 351.6L1336.5 350.5L1337 350.1L1337.2 366.1L1337.5 350.1L1338 350.6L1338.2 355.5L1338.5 350.6L1339 350.8L1339.2 351.4L1339.5 350.8L1340 350.6L1340.2 355.8L1340.5 350.6L1341 350.8L1341.2 356.8L1341.5 350.8L1342 350.3L1342.2 355.5L1342.5 350.3L1343 351L1343.2 363L1343.5 351L1344 351.1L1344.2 354.6L1344.5 351.1L1345 350.7L1345.2 352.9L1345.5 350.7L1346 350.6L1346.2 350.9L1346.5 350.6L1347 350.8L1348 350.9L1348.2 354.4L1348.5 350.9L1349 350.8L1349.2 350.8L1349.5 350.8L1350 351.6L1350.2 354.3L1350.5 351.6L1351 351L1351.2 360.5L1351.5 351L1352 350.8L1353 351.2L1353.2 357.8L1353.5 351.2L1354 351.5L1354.2 361.6L1354.5 351.5L1355 351.5L1355.2 353.8L1355.5 351.5L1356 351.5L1356.2 352.6L1356.5 351.5L1357 351.2L1357.2 355.4L1357.5 351.2L1358 351.8L1358.2 359.1L1358.5 351.8L1359 352L1359.2 362L1359.5 352L1360 351.8L1360.2 353.6L1360.5 351.8L1361 351.6L1361.2 354.5L1361.5 351.6L1362 351.7L1362.2 354.4L1362.5 351.7L1363 351.9L1364 351.7L1364.2 356.2L1364.5 351.7L1365 351.6L1365.2 353.7L1365.5 351.6L1366 351.3L1366.2 359.5L1366.5 351.3L1367 351L1367.2 353L1367.5 351L1368 351.9L1368.2 363.1L1368.5 351.9L1369 352.2L1369.2 356.8L1369.5 352.2L1370 351.4L1370.2 355.4L1370.5 351.4L1371 352.2L1372 351.9L1372.2 359.3L1372.5 351.9L1373 351.6L1374 351.3L1374.2 351.5L1374.5 351.3L1375 351.9L1375.2 353.7L1375.5 351.9L1376 348.6L1376.2 348.8L1376.5 348.6L1377 342.4L1378 341.4L1378.2 343.8L1378.5 341.4L1379 340.2L1380 339.3L1381 340.7L1382 343.1L1382.2 352.1L1382.5 343.1L1383 340.9L1384 338.9L1384.2 339.5L1384.5 338.9L1385 342L1386 343.4L1386.2 346.1L1386.5 343.4L1387 342.7L1387.2 351.6L1387.5 342.7L1388 341.6L1389 340.5"/><path stroke="#11ee11" d="M40 126.3L40.2 86.4L40.4 115.1L40.6 78L40.8 102.5L41 82L41.2 115.8L41.4 81.7L41.6 133.5L41.8 86.8L42 116L42.2 98.9L42.4 135.6L42.6 116.1L42.8 140L43 105.1L43.2 151.7L43.4 113.6L43.6 144.4L43.8 120.5L44 155.9L44.2 115.2L44.4 177.9L44.6 131.9L44.8 167.7L45 140.3L45.2 175.1L45.4 149.1L45.6 195.8L45.8 146.8L46 162.4L46.2 154.6L46.4 204.8L46.6 159L46.8 187.1L47 147.2L47.2 207.8L47.4 167.4L47.6 187.8L47.8 171.4L48 200.9L48.2 163.6L48.4 212.4L48.6 167.7L48.8 235L49 173.9L49.2 216.7L49.4 190.6L49.6 227.1L49.8 188.2L50 244L50.2 189.6L50.4 227.3L50.6 196.4L50.8 234.6L51 200.2L51.2 224.9L51.4 203.2L51.6 257.1L51.8 225.5L52 244L52.2 226.2L52.4 259.3L52.6 216.2L52.8 282.4L53 228.5L53.2 252.8L53.4 223.9L53.6 291.6L53.8 251L54 284.6L54.2 241.3L54.4 289.2L54.6 244.7L54.8 267.8L55 259.9L55.2 285.9L55.4 256.2L55.6 281L55.8 270.3L56 300L56 306.3L56.4 306.3L56.4 304.7L56.8 304.7L56.8 306.3L57 306.2L58 307.8L58.5 307.8L58.5 305.8L59.5 305.8L59.5 307.8L59 308.6L59 308.6L59 305.1L60 305.1L60 308.6L60 310L61 309.4L62 310.7L63 310.3L64 311.6L65 312.6L66 313.4L66.5 313.4L66.5 311.6L67.5 311.6L67.5 313.4L67 313.6L68 314L69 314.2L70 314.8L71 315.6L72 316.1L72.3 316.1L72.3 298.1L72.5 298.1L72.5 316.1L73 316.6L73.4 316.6L73.4 315.1L74 315.1L74 316.6L74 317.3L75 317.8L76 316.8L76.3 316.8L76.3 316.8L77.3 316.8L77.3 316.8L77 317.9L77.3 317.9L77.3 307.3L78.2 307.3L78.2 317.9L78 318.5L78.3 318.5L78.3 302.3L79.4 302.3L79.4 318.5L79 318.7L79.1 318.7L79.1 318.2L79.4 318.2L79.4 318.7L80 320.9L80.4 320.9L80.4 318.4L81.4 318.4L81.4 320.9L81 322.2L81.5 322.2L81.5 321.2L82.4 321.2L82.4 322.2L82 323.1L82.2 323.1L82.2 322.7L82.9 322.7L82.9 323.1L83 324.6L84 326.6L85 327.2L86 328.6L87 323.8L88 334.8L89 335.2L89.4 335.2L89.4 334.4L90.3 334.4L90.3 335.2L90 334.7L90.5 334.7L90.5 334.7L90.9 334.7L90.9 334.7L91 334.9L92 334.3L92.2 334.3L92.2 334.1L93.2 334.1L93.2 334.3L93 334.1L94 334.6L94.1 334.6L94.1 327.6L94.6 327.6L94.6 334.6L95 333.3L95 333.3L95 331.3L95.3 331.3L95.3 333.3L96 344.3L97 344.5L98 344.1L99 344L99.3 344L99.3 337.3L99.7 337.3L99.7 344L100 344.6L101 344L101.4 344L101.4 343.3L101.9 343.3L101.9 344L102 344.5L102.4 344.5L102.4 344.2L102.7 344.2L102.7 344.5L103 345.1L104 354.6L105 354.7L105.1 354.7L105.1 354.1L106.3 354.1L106.3 354.7L106 354.5L106.2 354.5L106.2 353L106.4 353L106.4 354.5L107 354.4L108 354.4L108.5 354.4L108.5 353.1L109.6 353.1L109.6 354.4L109 354.3L109.1 354.3L109.1 350L110.3 350L110.3 354.3L110 354.8L110.1 354.8L110.1 350.3L110.4 350.3L110.4 354.8L111 353.5L112 365.6L112.2 365.6L112.2 354.5L112.6 354.5L112.6 365.6L113 366.1L114 365.4L114.5 365.4L114.5 364.1L115.4 364.1L115.4 365.4L115 365.7L115.2 365.7L115.2 362.2L115.4 362.2L115.4 365.7L116 365.4L117 366L118 366.2L118.1 366.2L118.1 366.1L118.6 366.1L118.6 366.2L119 366.5L119.3 366.5L119.3 365.5L119.8 365.5L119.8 366.5L120 373.7L120.2 373.7L120.2 361.7L120.9 361.7L120.9 373.7L121 373.1L121.2 373.1L121.2 368.4L121.8 368.4L121.8 373.1L122 373.5L122.2 373.5L122.2 360.1L122.9 360.1L122.9 373.5L123 373.7L124 374.1L124.1 374.1L124.1 369.4L124.5 369.4L124.5 374.1L125 372.4L126 373.6L126.3 373.6L126.3 372.5L127.4 372.5L127.4 373.6L127 372.5L128 380L129 379.9L129.5 379.9L129.5 368.9L130.4 368.9L130.4 379.9L130 379.9L131 380.1L132 379.8L132.5 379.8L132.5 379.4L133.7 379.4L133.7 379.8L133 379.3L134 379.8L134.2 379.8L134.2 378.8L134.6 378.8L134.6 379.8L135 380.2L135 380.2L135 379.4L135.5 379.4L135.5 380.2L136 386.3L136.2 386.3L136.2 383L137.3 383L137.3 386.3L137 386.3L137.4 386.3L137.4 386.1L138.5 386.1L138.5 386.3L138 385.7L138.5 385.7L138.5 385.3L139.3 385.3L139.3 385.7L139 386.9L140 386.1L140.3 386.1L140.3 378.9L141.2 378.9L141.2 386.1L141 386L142 386.1L143 385.9L143.1 385.9L143.1 384.3L144.1 384.3L144.1 385.9L144 393.3L145 394L146 393.8L146.3 393.8L146.3 386.2L147.3 386.2L147.3 393.8L147 394.1L148 394.1L149 393L149.4 393L149.4 392.2L150.6 392.2L150.6 393L150 393.6L150.4 393.6L150.4 393L150.7 393L150.7 393.6L151 394.1L152 401L152.2 401L152.2 400.9L152.8 400.9L152.8 401L153 399.2L153.1 399.2L153.1 394.4L153.9 394.4L153.9 399.2L154 399.2L154.3 399.2L154.3 398.5L154.5 398.5L154.5 399.2L155 400.1L156 399.7L156.3 399.7L156.3 398.8L156.9 398.8L156.9 399.7L157 399.4L157.1 399.4L157.1 398.1L157.8 398.1L157.8 399.4L158 400.1L158.3 400.1L158.3 398.1L158.9 398.1L158.9 400.1L159 399.5L160 404.2L161 405.2L162 405.3L162.4 405.3L162.4 397.7L163 397.7L163 405.3L163 405.5L163.5 405.5L163.5 392.4L164.6 392.4L164.6 405.5L164 405.7L164 405.7L164 405L164.8 405L164.8 405.7L165 405.3L166 405.1L166.2 405.1L166.2 404.5L166.7 404.5L166.7 405.1L167 404.9L167.3 404.9L167.3 403.3L167.6 403.3L167.6 404.9L168 409.7L168.5 409.7L168.5 400.5L169 400.5L169 409.7L169 410.3L170 411L171 410.8L171.1 410.8L171.1 409.6L171.6 409.6L171.6 410.8L172 411.5L172.2 411.5L172.2 411.3L172.7 411.3L172.7 411.5L173 410.4L173.5 410.4L173.5 406.8L174.1 406.8L174.1 410.4L174 409.6L175 410.9L175.5 410.9L175.5 410.8L176.1 410.8L176.1 410.9L176 415.7L177 414.6L178 414.4L178.2 414.4L178.2 412.4L179.2 412.4L179.2 414.4L179 415.3L179.2 415.3L179.2 409.6L180.1 409.6L180.1 415.3L180 415.5L180.2 415.5L180.2 411.2L180.6 411.2L180.6 415.5L181 414.6L181.2 414.6L181.2 405.8L182.2 405.8L182.2 414.6L182 415L183 414.8L183.1 414.8L183.1 412.9L183.6 412.9L183.6 414.8L184 419.3L184.4 419.3L184.4 416.2L185.5 416.2L185.5 419.3L185 419.3L185.2 419.3L185.2 418.6L185.7 418.6L185.7 419.3L186 419.9L187 419.7L188 419.6L189 418.6L190 420.7L191 419.4L191.1 419.4L191.1 416.6L192.2 416.6L192.2 419.4L192 424.2L192.5 424.2L192.5 413.3L193.3 413.3L193.3 424.2L193 423.8L194 424.5L194.3 424.5L194.3 424.4L194.9 424.4L194.9 424.5L195 423.6L195.2 423.6L195.2 423.3L196.2 423.3L196.2 423.6L196 424.3L196.2 424.3L196.2 419.8L196.8 419.8L196.8 424.3L197 424.2L197.2 424.2L197.2 421.5L197.6 421.5L197.6 424.2L198 424.7L198.3 424.7L198.3 424.2L198.6 424.2L198.6 424.7L199 423.8L199.2 423.8L199.2 423.5L199.6 423.5L199.6 423.8L200 427.6L200.3 427.6L200.3 425.8L201 425.8L201 427.6L201 427.8L202 428.9L202.2 428.9L202.2 425.8L203.2 425.8L203.2 428.9L203 427.2L203.4 427.2L203.4 425.4L204.4 425.4L204.4 427.2L204 428L205 427.6L205.1 427.6L205.1 425.9L206 425.9L206 427.6L206 428L207 428.2L207.1 428.2L207.1 426.9L207.7 426.9L207.7 428.2L208 431.5L209 431.6L210 431.6L210.5 431.6L210.5 431.3L210.7 431.3L210.7 431.6L211 431.2L212 431.3L212.3 431.3L212.3 424.6L212.9 424.6L212.9 431.3L213 430.7L214 431.3L214.1 431.3L214.1 431L214.5 431L214.5 431.3L215 431.1L215.4 431.1L215.4 424.3L216.1 424.3L216.1 431.1L216 435.4L217 435.9L218 435.7L219 435.7L220 436.1L220 436.1L220 421L220.8 421L220.8 436.1L221 434.4L221.3 434.4L221.3 432.4L222.2 432.4L222.2 434.4L222 435.7L222.1 435.7L222.1 432.8L222.6 432.8L222.6 435.7L223 435.5L223.1 435.5L223.1 433.2L223.4 433.2L223.4 435.5L224 440L225 439.4L226 440.3L226.3 440.3L226.3 439.7L227 439.7L227 440.3L227 440.6L227.3 440.6L227.3 434.9L228 434.9L228 440.6L228 440.5L229 440L229.5 440L229.5 439.7L229.7 439.7L229.7 440L230 440.3L230.1 440.3L230.1 440.3L230.8 440.3L230.8 440.3L231 440.4L232 445.1L232.3 445.1L232.3 441.1L232.8 441.1L232.8 445.1L233 444.8L233.1 444.8L233.1 440.8L233.7 440.8L233.7 444.8L234 444.3L234.5 444.3L234.5 443.9L234.9 443.9L234.9 444.3L235 444.2L236 444.3L237 444.3L237.1 444.3L237.1 444.3L237.4 444.3L237.4 444.3L238 444L239 444.6L240 447.6L241 447.5L242 448.1L242.3 448.1L242.3 447.2L243.5 447.2L243.5 448.1L243 447.6L243 447.6L243 446L243.8 446L243.8 447.6L244 447.8L245 446.9L245.1 446.9L245.1 444.1L246.3 444.1L246.3 446.9L246 448.3L247 447.9L248 451.5L248.4 451.5L248.4 450.5L249.5 450.5L249.5 451.5L249 451.8L249.4 451.8L249.4 449.3L250.2 449.3L250.2 451.8L250 451.7L251 451.3L252 452.5L252.5 452.5L252.5 450.4L253 450.4L253 452.5L253 451.4L253.1 451.4L253.1 451.2L253.6 451.2L253.6 451.4L254 452.1L254.5 452.1L254.5 450.6L254.8 450.6L254.8 452.1L255 452.5L256 455.2L257 455.6L257.2 455.6L257.2 453.6L257.7 453.6L257.7 455.6L258 455.1L259 456L259.2 456L259.2 451.2L260.3 451.2L260.3 456L260 455.3L260.2 455.3L260.2 454.3L261.2 454.3L261.2 455.3L261 455L261.2 455L261.2 454.7L262.3 454.7L262.3 455L262 456.1L262.2 456.1L262.2 455.4L262.5 455.4L262.5 456.1L263 455.9L263.3 455.9L263.3 437.9L264.3 437.9L264.3 455.9L264 459.8L265 460.8L266 460.3L267 461.5L267.1 461.5L267.1 458.5L267.4 458.5L267.4 461.5L268 461.1L268.3 461.1L268.3 460.6L268.5 460.6L268.5 461.1L269 460L270 460.1L271 459.8L271.5 459.8L271.5 458.8L272.2 458.8L272.2 459.8L272 465L272.3 465L272.3 460.3L272.7 460.3L272.7 465L273 465L273 465L273 464.9L273.5 464.9L273.5 465L274 465.3L275 465L275.1 465L275.1 463.9L275.4 463.9L275.4 465L276 464.3L276.3 464.3L276.3 458.9L276.9 458.9L276.9 464.3L277 464.6L278 465.6L278.5 465.6L278.5 464.9L279.2 464.9L279.2 465.6L279 465.5L280 469.6L280.3 469.6L280.3 466L281.3 466L281.3 469.6L281.5 468L281.6 300L282 301.9L282.4 301.9L282.4 297.9L282.9 297.9L282.9 301.9L283 306.2L283.3 306.2L283.3 305.7L283.8 305.7L283.8 306.2L284 310.5L284.1 310.5L284.1 308.5L284.7 308.5L284.7 310.5L285 314L285.1 314L285.1 313.9L286.2 313.9L286.2 314L286 319.4L286.2 319.4L286.2 316.7L286.9 316.7L286.9 319.4L287 322.3L287.5 322.3L287.5 320.8L287.7 320.8L287.7 322.3L288 324.6L288.3 324.6L288.3 319.2L288.8 319.2L288.8 324.6L289 325.4L289.1 325.4L289.1 320.5L290.1 320.5L290.1 325.4L290 328.7L290.3 328.7L290.3 315.9L291 315.9L291 328.7L291 331.2L292 331.4L293 335.2L293 335.2L293 333.6L293.8 333.6L293.8 335.2L294 336.7L294.3 336.7L294.3 332.7L295.2 332.7L295.2 336.7L295 338.1L296 339.7L297 343L298 344.5L299 346.3L299.1 346.3L299.1 345.9L299.5 345.9L299.5 346.3L300 347.7L301 349.1L302 351.6L303 352.5L303.5 352.5L303.5 351L303.7 351L303.7 352.5L304 355.1L304.4 355.1L304.4 353.4L305.1 353.4L305.1 355.1L305 355.6L305.3 355.6L305.3 355.5L305.8 355.5L305.8 355.6L306 357.7L306.4 357.7L306.4 355.9L307.3 355.9L307.3 357.7L307 359.1L308 362.2L309 362.4L310 364.4L310.1 364.4L310.1 362.1L310.5 362.1L310.5 364.4L311 367L311.3 367L311.3 366.6L311.8 366.6L311.8 367L312 368.5L312.3 368.5L312.3 368.1L312.8 368.1L312.8 368.5L313 372.5L314 372.3L314.2 372.3L314.2 369.5L314.9 369.5L314.9 372.3L315 371.7L315.2 371.7L315.2 358.2L316.1 358.2L316.1 371.7L316 371.7L316.2 371.7L316.2 367.4L317 367.4L317 371.7L317 370.5L318 371L318.3 371L318.3 370.5L318.6 370.5L318.6 371L319 371.2L320 383.5L321 382.9L322 383.1L322.2 383.1L322.2 382.9L322.8 382.9L322.8 383.1L323 383.1L324 384.1L324.1 384.1L324.1 378.9L324.6 378.9L324.6 384.1L325 383.7L326 383.4L327 383.4L328 393.1L328.4 393.1L328.4 393.1L328.8 393.1L328.8 393.1L329 392.7L330 392.9L330.5 392.9L330.5 389.9L331.5 389.9L331.5 392.9L331 392.2L331.2 392.2L331.2 389.7L331.5 389.7L331.5 392.2L332 393.3L332.4 393.3L332.4 385L332.7 385L332.7 393.3L333 393.5L334 393.2L334.2 393.2L334.2 388.3L334.9 388.3L334.9 393.2L335 393.2L335.1 393.2L335.1 391.2L335.6 391.2L335.6 393.2L336 400.4L336.3 400.4L336.3 398.4L337.4 398.4L337.4 400.4L337 401.2L337.3 401.2L337.3 400.2L337.7 400.2L337.7 401.2L338 400.4L338.1 400.4L338.1 398L339.3 398L339.3 400.4L339 399.6L339.2 399.6L339.2 398.4L339.8 398.4L339.8 399.6L340 399.8L341 400.6L342 400.8L342.2 400.8L342.2 387L342.5 387L342.5 400.8L343 400.6L344 410.7L344.1 410.7L344.1 395.3L344.8 395.3L344.8 410.7L345 410.4L346 409.6L346.1 409.6L346.1 407.2L346.7 407.2L346.7 409.6L347 410L347.2 410L347.2 409.3L348.1 409.3L348.1 410L348 409.5L349 410.1L350 409.7L350.4 409.7L350.4 400.7L351.3 400.7L351.3 409.7L351 410.4L352 421.2L352.2 421.2L352.2 414L353.3 414L353.3 421.2L353 420.4L353 420.4L353 418.4L353.8 418.4L353.8 420.4L354 421.6L355 421.7L355.4 421.7L355.4 416.9L355.7 416.9L355.7 421.7L356 420.6L356.2 420.6L356.2 418.7L357.1 418.7L357.1 420.6L357 421.4L357 421.4L357 417.5L357.6 417.5L357.6 421.4L358 421.6L358 421.6L358 341.6L358.8 341.6L358.8 421.6L359 421.2L360 426.2L360 426.2L360 376.2L361 376.2L361 426.2L361 425.9L361.2 425.9L361.2 423.9L362 423.9L362 425.9L362 426.3L362 426.3L362 425.5L362.3 425.5L362.3 426.3L363 425.9L363 425.9L363 385.9L364 385.9L364 425.9L364 425.7L364.5 425.7L364.5 421.6L365.5 421.6L365.5 425.7L365 426L365.1 426L365.1 425.4L365.4 425.4L365.4 426L366 426.1L366 426.1L366 381.1L367 381.1L367 426.1L367 425.9L368 427.1L369 426.9L369.2 426.9L369.2 422.1L369.5 422.1L369.5 426.9L370 427.1L370 427.1L370 392.1L371 392.1L371 427.1L370 427.1L370 426.5L370.7 426.5L370.7 427.1L371 427L371.3 427L371.3 417.4L371.9 417.4L371.9 427L372 427.4L373 427.4L374 427.3L375 427.3L376 441L376.1 441L376.1 440L376.4 440L376.4 441L377 441.7L378 441.5L378.4 441.5L378.4 441.4L379.6 441.4L379.6 441.5L379 440.7L379.1 440.7L379.1 440.5L380.1 440.5L380.1 440.7L380 441.2L380.3 441.2L380.3 441.1L381.1 441.1L381.1 441.2L381 440.8L382 440.9L383 440.8L383.3 440.8L383.3 440.1L383.7 440.1L383.7 440.8L384 453.5L384.1 453.5L384.1 450.9L385.3 450.9L385.3 453.5L385 453.1L386 452.6L386.2 452.6L386.2 450.9L386.4 450.9L386.4 452.6L387 453.9L387.3 453.9L387.3 453.7L387.6 453.7L387.6 453.9L388 454.4L389 453.4L390 454L390.1 454L390.1 446.8L390.8 446.8L390.8 454L391 453.6L391 453.6L391 452.9L391.9 452.9L391.9 453.6L392 460.2L392.2 460.2L392.2 456.9L392.7 456.9L392.7 460.2L393 459.7L394 459.9L395 460L396 458.9L396.3 458.9L396.3 454.2L396.9 454.2L396.9 458.9L397 460.1L397.5 460.1L397.5 457.9L398 457.9L398 460.1L398 460L398.2 460L398.2 459.4L398.5 459.4L398.5 460L399 458.8L399.2 458.8L399.2 453.1L400.2 453.1L400.2 458.8L400 466.1L400 466.1L400 465.4L400.3 465.4L400.3 466.1L401 465.8L402 465.9L402.3 465.9L402.3 464.8L402.7 464.8L402.7 465.9L403 466L404 465.6L404.1 465.6L404.1 462.3L404.9 462.3L404.9 465.6L405 465.3L405.2 465.3L405.2 462.7L406.1 462.7L406.1 465.3L406 465.6L406 465.6L406 462.6L406.3 462.6L406.3 465.6L407 465.6L407.3 465.6L407.3 465.2L408.1 465.2L408.1 465.6L408 472.5L409 472.3L409.2 472.3L409.2 463.1L409.7 463.1L409.7 472.3L410 471.2L410 471.2L410 470L411.2 470L411.2 471.2L411 471.2L411.3 471.2L411.3 466.6L412.1 466.6L412.1 471.2L412 471.6L412.1 471.6L412.1 467.1L413.1 467.1L413.1 471.6L413 471.7L413.2 471.7L413.2 469.3L414 469.3L414 471.7L414 471.1L415 471L416 477.9L416.3 477.9L416.3 475L416.8 475L416.8 477.9L417 477.5L418 476.2L419 476.1L419.5 476.1L419.5 475.3L420.1 475.3L420.1 476.1L420 476.6L421 477.1L422 477.2L422 477.2L422 475.5L422.3 475.5L422.3 477.2L423 476.8L424 482L424.3 482L424.3 474.3L424.9 474.3L424.9 482L425 482.9L426 483.1L427 482.8L427.5 482.8L427.5 481.8L428 481.8L428 482.8L428 482.6L428.5 482.6L428.5 473.4L429.4 473.4L429.4 482.6L429 483.1L429.4 483.1L429.4 476L430.4 476L430.4 483.1L430 482.8L431 482.3L432 488.4L432.2 488.4L432.2 486.9L433.1 486.9L433.1 488.4L433 487.7L434 488.8L435 488.6L436 487.9L437 488.5L438 489L439 487.3L440 493L440.2 493L440.2 493L441.2 493L441.2 493L441 493.9L441.3 493.9L441.3 492.4L442.4 492.4L442.4 493.9L442 492.4L443 493L443.2 493L443.2 489.2L443.9 489.2L443.9 493L444 492.4L445 493.1L446 491.9L446.2 491.9L446.2 479.3L447.2 479.3L447.2 491.9L447 492.3L448 497.7L449 498.1L449.1 498.1L449.1 491.9L450 491.9L450 498.1L450 498.2L450.4 498.2L450.4 497.1L451.4 497.1L451.4 498.2L451 498.2L451 498.2L451 498L451.4 498L451.4 498.2L452 498.6L452.4 498.6L452.4 496.6L453.3 496.6L453.3 498.6L453 498.3L454 498.4L455 497.5L456 503L456.3 503L456.3 501.9L457.3 501.9L457.3 503L457 504.6L458 504.1L458.3 504.1L458.3 503.5L458.8 503.5L458.8 504.1L459 503.4L459.1 503.4L459.1 503.3L459.5 503.3L459.5 503.4L460 503.4L460 503.4L460 500.4L460.5 500.4L460.5 503.4L461 503.5L461.2 503.5L461.2 499.5L461.5 499.5L461.5 503.5L462 502.8L462.3 502.8L462.3 499.8L463.2 499.8L463.2 502.8L463 504L464 506.3L465 506.4L465.3 506.4L465.3 500.9L465.8 500.9L465.8 506.4L466 507.5L466.1 507.5L466.1 503.9L466.7 503.9L466.7 507.5L467 505.4L468 506.6L468.2 506.6L468.2 502.3L468.5 502.3L468.5 506.6L469 505.6L469.1 505.6L469.1 497.3L470.3 497.3L470.3 505.6L470 506.1L471 506.4L471.1 506.4L471.1 503.1L471.7 503.1L471.7 506.4L472 510.8L472.5 510.8L472.5 509.9L472.9 509.9L472.9 510.8L473 511.1L473.4 511.1L473.4 511L473.7 511L473.7 511.1L474 510.6L475 511L475.5 511L475.5 509.3L475.9 509.3L475.9 511L476 510.4L477 510.8L477.3 510.8L477.3 506.5L478 506.5L478 510.8L478 510.3L479 511.3L479.1 511.3L479.1 510.8L479.7 510.8L479.7 511.3L480 515.6L480.2 515.6L480.2 510.9L480.7 510.9L480.7 515.6L481 516.5L481 516.5L481 516.5L481.5 516.5L481.5 516.5L482 516L483 516.1L483 516.1L483 513.7L484.1 513.7L484.1 516.1L484 516.8L484.1 516.8L484.1 515.9L484.5 515.9L484.5 516.8L485 516.3L486 515.3L486.3 515.3L486.3 513.9L486.8 513.9L486.8 515.3L487 516.5L487.1 516.5L487.1 507.1L488 507.1L488 516.5L488 520.5L488.3 520.5L488.3 519.6L489.3 519.6L489.3 520.5L489 522L490 521.7L490.5 520L490.7 416L491 415.3L491.5 415.3L491.5 410.5L492.1 410.5L492.1 415.3L492 422L493 427.8L494 431.6L495 433L496 436.7L497 439.1L497.4 439.1L497.4 438.6L497.8 438.6L497.8 439.1L498 440.7L499 441.5L499.1 441.5L499.1 437.7L500.1 437.7L500.1 441.5L500 443.5L501 443.8L502 444.9L502.2 444.9L502.2 443.2L503.1 443.2L503.1 444.9L503 445.6L504 446.1L505 447.5L505.5 447.5L505.5 444.4L505.9 444.4L505.9 447.5L506 448.1L506 448.1L506 446.5L507.1 446.5L507.1 448.1L507 448.8L508 450.4L508.3 450.4L508.3 445.2L508.9 445.2L508.9 450.4L509 452.4L510 453.4L511 453.6L512 454.7L513 456L513.5 456L513.5 451.9L514.6 451.9L514.6 456L514 457.4L515 458L516 458.6L517 459.7L518 461.5L518.4 461.5L518.4 460.7L519.1 460.7L519.1 461.5L519 463.3L520 462.2L520.4 462.2L520.4 462.1L520.9 462.1L520.9 462.2L521 462L522 465.9L522.2 465.9L522.2 462.6L522.6 462.6L522.6 465.9L523 465.5L524 465.6L524.4 465.6L524.4 459.7L525.1 459.7L525.1 465.6L525 466.1L526 465.6L526.2 465.6L526.2 464L527.1 464L527.1 465.6L527 464.9L528 468.9L529 469.8L530 469.3L530.3 469.3L530.3 469.2L531.1 469.2L531.1 469.3L531 470L532 469.2L533 469.7L533.3 469.7L533.3 466.7L534.5 466.7L534.5 469.7L534 469.1L534 469.1L534 467.6L534.7 467.6L534.7 469.1L535 469.7L536 475L536.2 475L536.2 464.7L536.7 464.7L536.7 475L537 475.5L537.1 475.5L537.1 475.5L538 475.5L538 475.5L538 475.9L538.2 475.9L538.2 475.3L538.5 475.3L538.5 475.9L539 475.1L539.2 475.1L539.2 472.5L539.6 472.5L539.6 475.1L540 474.8L541 476.2L542 475.4L543 475.5L544 481.6L544.3 481.6L544.3 470.4L544.9 470.4L544.9 481.6L545 482L546 481.8L546.5 481.8L546.5 480.1L547 480.1L547 481.8L547 481.6L547.4 481.6L547.4 481L547.7 481L547.7 481.6L548 481.7L548.1 481.7L548.1 481.4L548.3 481.4L548.3 481.7L549 480.9L550 481L551 481.3L552 486.6L552.4 486.6L552.4 482.3L553.4 482.3L553.4 486.6L553 486.6L553.3 486.6L553.3 485.2L554.1 485.2L554.1 486.6L554 486.7L555 486.6L556 486.4L557 485.8L558 487L558.3 487L558.3 486.7L559.3 486.7L559.3 487L559 486.9L560 494.1L561 494.8L561.3 494.8L561.3 494.2L562.4 494.2L562.4 494.8L562 494.8L563 494.6L563.4 494.6L563.4 493.8L564.4 493.8L564.4 494.6L564 493.7L564.5 493.7L564.5 490.9L564.9 490.9L564.9 493.7L565 494L565.4 494L565.4 493.5L566.3 493.5L566.3 494L566 494.3L566 494.3L566 469.3L566.5 469.3L566.5 494.3L567 495.4L567.2 495.4L567.2 493.2L567.5 493.2L567.5 495.4L568 500.4L569 500.7L570 500.3L570.5 500.3L570.5 499.8L570.9 499.8L570.9 500.3L571 500.6L572 501L573 499.8L573.1 499.8L573.1 497L573.8 497L573.8 499.8L574 499.4L575 501.2L576 507.6L577 507.3L578 508.1L578.2 508.1L578.2 499.6L579.3 499.6L579.3 508.1L579 508.1L580 506.5L580.3 506.5L580.3 505.9L581.4 505.9L581.4 506.5L581 507.5L582 508.1L582.3 508.1L582.3 507.6L582.6 507.6L582.6 508.1L583 507.2L584 513.8L585 514.5L586 513.9L587 513.4L588 513.6L589 513.3L589 513.3L589 483.3L589.5 483.3L589.5 513.3L589.3 513.3L589.3 512.5L589.9 512.5L589.9 513.3L590 514.3L590.5 514.3L590.5 512L591.1 512L591.1 514.3L591 513.1L592 519.9L593 518.5L594 519.4L595 518.6L596 519.2L596.3 519.2L596.3 518.6L597.1 518.6L597.1 519.2L597 519.9L598 519.9L599 520L600 525.4L600.4 525.4L600.4 523.2L600.6 523.2L600.6 525.4L601 525.5L601.5 525.5L601.5 524.7L601.8 524.7L601.8 525.5L602 525.6L603 525.8L603 525.8L603 517.1L603.9 517.1L603.9 525.8L604 525.3L605 526L605.1 526L605.1 520.2L605.6 520.2L605.6 526L606 525.6L606.2 525.6L606.2 516.6L606.9 516.6L606.9 525.6L607 526L608 532L609 532.1L609.3 532.1L609.3 517.1L609.7 517.1L609.7 532.1L610 531.4L611 531.6L611.3 531.6L611.3 531.1L611.9 531.1L611.9 531.6L612 531.1L612.4 531.1L612.4 509.5L612.7 509.5L612.7 531.1L613 531.6L614 531.7L614.4 531.7L614.4 512.6L615.5 512.6L615.5 531.7L615 532.2L615 532.2L615 523.5L615.5 523.5L615.5 532.2L616 537.1L616.2 537.1L616.2 533.8L617.2 533.8L617.2 537.1L617 539.4L618 537.7L618.1 537.7L618.1 526.1L619.3 526.1L619.3 537.7L619 538.4L619.1 538.4L619.1 538.3L619.6 538.3L619.6 538.4L620 538L620.2 538L620.2 537.1L620.5 537.1L620.5 538L621 537L621.4 537L621.4 530L622 530L622 537L622 538.8L622 538.8L622 532.9L622.5 532.9L622.5 538.8L623 540.3L623.1 540.3L623.1 539.9L623.5 539.9L623.5 540.3L624 539.1L625 541.4L625.1 541.4L625.1 541.3L625.5 541.3L625.5 541.4L626 540.8L626.2 540.8L626.2 532.5L627.2 532.5L627.2 540.8L627 541.3L628 541.9L628.4 541.9L628.4 536.2L629.1 536.2L629.1 541.9L629 541.2L630 542.5L631 542.4L631.3 542.4L631.3 529.7L632.3 529.7L632.3 542.4L632 542.6L632 542.6L632 537.3L632.6 537.3L632.6 542.6L633 543.6L633 543.6L633 543.1L633.5 543.1L633.5 543.6L634 545.3L634 545.3L634 515.3L634.5 515.3L634.5 545.3L634.5 545.3L634.5 545L635.6 545L635.6 545.3L635 544L635.1 544L635.1 536L636 536L636 544L636 544.5L636.2 544.5L636.2 544.5L637.2 544.5L637.2 544.5L637 544.8L637.1 544.8L637.1 543.9L637.4 543.9L637.4 544.8L638 545L638.2 545L638.2 539.1L639.3 539.1L639.3 545L639 546.1L640 547.3L641 547.3L641.3 547.3L641.3 536.4L641.7 536.4L641.7 547.3L642 548.2L642.4 548.2L642.4 546.5L643.1 546.5L643.1 548.2L643 548.2L644 550.2L645 548.7L645.5 548.7L645.5 544.8L645.7 544.8L645.7 548.7L646 550.4L646.4 550.4L646.4 547.3L647.3 547.3L647.3 550.4L647 551L648 551.4L648 551.4L648 550.9L649 550.9L649 551.4L648.6 551.4L648.6 522.4L649.1 522.4L649.1 551.4L649 551.3L649.1 551.3L649.1 551.3L649.9 551.3L649.9 551.3L650 551.9L650.4 551.9L650.4 517.4L650.9 517.4L650.9 551.9L651 552.9L651.4 552.9L651.4 552.6L652.1 552.6L652.1 552.9L652 553.7L653 553.6L653.1 553.6L653.1 545L654.3 545L654.3 553.6L654 554.3L655 555.7L655.1 555.7L655.1 550.8L655.5 550.8L655.5 555.7L656 556.5L657 556.3L658 556.8L659 557.4L659 557.4L659 556.8L660.2 556.8L660.2 557.4L660 559.6L660.5 559.6L660.5 556.1L661.2 556.1L661.2 559.6L661 559.2L662 559.5L662 559.5L662 552.3L662.6 552.3L662.6 559.5L663 560.7L664 561.9L665 562L666 561.3L666.3 561.3L666.3 560.9L667.1 560.9L667.1 561.3L667 562.5L668 563L668.4 563L668.4 550.7L668.7 550.7L668.7 563L669 563.6L670 563.8L671 564.8L671.1 564.8L671.1 562.5L671.5 562.5L671.5 564.8L672 565L673 566.4L673.3 566.4L673.3 560.1L673.6 560.1L673.6 566.4L674 566.8L674 566.8L674 561.4L674.8 561.4L674.8 566.8L675 566.7L676 567.1L676.5 567.1L676.5 566.6L677.4 566.6L677.4 567.1L677 568.3L677 568.3L677 531.3L677.5 531.3L677.5 568.3L677.1 568.3L677.1 562.8L677.6 562.8L677.6 568.3L678 569.4L678.1 569.4L678.1 567.7L679.2 567.7L679.2 569.4L679 569.9L680 570.1L680.5 570.1L680.5 565.1L681.5 565.1L681.5 570.1L681 569L681.4 569L681.4 563.4L682.5 563.4L682.5 569L682 570.9L682.5 570.9L682.5 567.6L683.6 567.6L683.6 570.9L683 571.3L683.5 571.3L683.5 567.2L684.4 567.2L684.4 571.3L684 572.1L685 572.1L685.4 572.1L685.4 564.2L686.5 564.2L686.5 572.1L686 573.1L686.3 573.1L686.3 565.3L687.3 565.3L687.3 573.1L687 573.5L687 573.5L687 570.1L687.3 570.1L687.3 573.5L688 575.7L688.5 575.7L688.5 560.1L688.8 560.1L688.8 575.7L689 575.2L690 575.3L690.4 575.3L690.4 569.8L690.6 569.8L690.6 575.3L691 575.9L691.2 575.9L691.2 570.7L691.8 570.7L691.8 575.9L692 576.4L692.4 576.4L692.4 571.8L693.6 571.8L693.6 576.4L693 577L694 577.3L694.1 577.3L694.1 569.6L694.6 569.6L694.6 577.3L695 578L695 578L695 554L695.5 554L695.5 578L695.3 578L695.3 565.9L695.9 565.9L695.9 578L696 579.1L696.3 579.1L696.3 577.5L696.6 577.5L696.6 579.1L697 579.6L697.2 579.6L697.2 573.9L697.6 573.9L697.6 579.6L698 579.9L698.1 579.9L698.1 571.2L698.4 571.2L698.4 579.9L699 581L699.4 581L699.4 580.1L700.4 580.1L700.4 581L700 581.1L701 581.1L701.3 581.1L701.3 573.6L701.6 573.6L701.6 581.1L702 581.3L702 581.3L702 562L703.1 562L703.1 581.3L703 582.4L703.5 582.4L703.5 578.6L704.1 578.6L704.1 582.4L704 583.3L705 584.2L705.1 584.2L705.1 568.2L705.4 568.2L705.4 584.2L706 585.1L706.1 585.1L706.1 582.5L707.1 582.5L707.1 585.1L707 584.9L708 585.3L709 586.7L709.2 586.7L709.2 584.8L710.1 584.8L710.1 586.7L710 587.5L710.3 587.5L710.3 583.5L710.6 583.5L710.6 587.5L711 587.3L712 588.3L712.2 588.3L712.2 584.7L712.9 584.7L712.9 588.3L713 589.4L713.4 589.4L713.4 587.3L714.5 587.3L714.5 589.4L714 589.4L715 589.8L715.5 589.8L715.5 584.8L715.7 584.8L715.7 589.8L716 589.3L717 591.5L718 591.6L718.1 591.6L718.1 587L718.9 587L718.9 591.6L719 591.9L719.3 591.9L719.3 577L719.6 577L719.6 591.9L720 592.1L720.5 592.1L720.5 578.6L721.2 578.6L721.2 592.1L721 592.2L721.3 592.2L721.3 580.6L722.4 580.6L722.4 592.2L722 593.3L723 593.8L723.1 593.8L723.1 592.9L723.7 592.9L723.7 593.8L724 594.9L724 594.9L724 589.2L724.8 589.2L724.8 594.9L725 594.3L725.2 594.3L725.2 585.6L726.2 585.6L726.2 594.3L726 596.1L726.4 596.1L726.4 575L727.5 575L727.5 596.1L727 595.9L728 597L728.4 597L728.4 591.3L729.2 591.3L729.2 597L729 596.4L730 597.6L730.4 597.6L730.4 597L730.6 597L730.6 597.6L731 598.5L731 598.5L731 597.3L731.3 597.3L731.3 598.5L732 598.5L732 598.5L732 598.3L732.6 598.3L732.6 598.5L733 598.2L734 599.3L735 600.2L735 600.2L735 594.9L735.4 594.9L735.4 600.2L736 599.8L737 600.2L738 601.6L738.4 601.6L738.4 599.9L738.9 599.9L738.9 601.6L739 601.5L739 601.5L739 579.5L739.5 579.5L739.5 601.5L740 602.9L740.1 602.9L740.1 595.4L740.8 595.4L740.8 602.9L741 602.6L742 602.9L743 604L743.1 604L743.1 603.8L743.4 603.8L743.4 604L744 605.8L745 605.2L745.5 605.2L745.5 600.1L746.3 600.1L746.3 605.2L746 606.2L746.2 606.2L746.2 592.3L746.7 592.3L746.7 606.2L747 607L747.1 607L747.1 604.7L748.2 604.7L748.2 607L748 607L748.1 607L748.1 605.1L748.5 605.1L748.5 607L749 608.6L749.2 608.6L749.2 606.5L750.1 606.5L750.1 608.6L750 608.8L751 609.5L751.2 609.5L751.2 606.4L752.2 606.4L752.2 609.5L752 609L752.1 609L752.1 603L753.2 603L753.2 609L753 609.6L753.5 609.6L753.5 604.7L753.8 604.7L753.8 609.6L754 609.7L754.5 609.7L754.5 607.8L755.3 607.8L755.3 609.7L755 611.6L755.3 611.6L755.3 609.6L755.5 609.6L755.5 611.6L756 612.2L756.1 612.2L756.1 611L757.2 611L757.2 612.2L757 613.3L757.2 613.3L757.2 607.3L758 607.3L758 613.3L758 614.3L759 614L760 614.6L760.2 614.6L760.2 611.3L761.2 611.3L761.2 614.6L761 615.6L761.3 615.6L761.3 605.6L761.8 605.6L761.8 615.6L762 616.7L762.4 616.7L762.4 611.8L762.9 611.8L762.9 616.7L763 616.2L763.2 616.2L763.2 607.4L763.9 607.4L763.9 616.2L764 617.5L764.5 617.5L764.5 616.1L765.6 616.1L765.6 617.5L765 617.7L765 617.7L765 591.4L765.6 591.4L765.6 617.7L766 618.3L766.2 618.3L766.2 617L766.4 617L766.4 618.3L767 619.6L767 619.6L767 611.9L767.4 611.9L767.4 619.6L768 619.6L769 620.2L769.2 620.2L769.2 617.7L769.9 617.7L769.9 620.2L770 621.8L771 622.1L772 622.7L772.5 622.7L772.5 615.4L773.4 615.4L773.4 622.7L773 623.5L773.4 623.5L773.4 617.2L774.1 617.2L774.1 623.5L774 624.6L775 624.9L776 626.2L776.3 626.2L776.3 613.7L777 613.7L777 626.2L777 626.7L777.5 626.7L777.5 619.3L778.6 619.3L778.6 626.7L778 628L779 628.6L779.2 628.6L779.2 617.1L779.7 617.1L779.7 628.6L780 629.1L781 629.3L782 630.2L782 630.2L782 618.2L782.5 618.2L782.5 630.2L782.4 630.2L782.4 626.8L783.6 626.8L783.6 630.2L783 630.6L784 633L785 632.2L786 633.3L787 634.5L787.4 634.5L787.4 633.3L787.8 633.3L787.8 634.5L788 633.8L789 634.8L789.3 634.8L789.3 623.3L789.5 623.3L789.5 634.8L790 635.8L791 635.8L791.1 635.8L791.1 631L792.3 631L792.3 635.8L792 636.1L793 636.8L794 638L794.3 638L794.3 635.2L794.6 635.2L794.6 638L795 638.1L795 638.1L795 638.1L795.6 638.1L795.6 638.1L796 638.1L796.1 638.1L796.1 634.1L797.2 634.1L797.2 638.1L797 638.5L798 638L799 639.5L799.3 639.5L799.3 622.2L799.7 622.2L799.7 639.5L800 639.7L801 639.3L801.4 639.3L801.4 638.6L801.8 638.6L801.8 639.3L802 640.3L803 640.5L803.1 640.5L803.1 637.6L804.1 637.6L804.1 640.5L804 640.6L804.1 640.6L804.1 636.3L804.3 636.3L804.3 640.6L805 640.8L805.1 640.8L805.1 639.8L806 639.8L806 640.8L806 641.3L806.3 641.3L806.3 584.3L806.8 584.3L806.8 641.3L806.4 641.3L806.4 639.8L807.2 639.8L807.2 641.3L807 641.5L808 642.5L808.3 642.5L808.3 634.7L809.3 634.7L809.3 642.5L809 642.8L809.1 642.8L809.1 641.7L809.5 641.7L809.5 642.8L810 643.2L810.4 643.2L810.4 642.4L810.9 642.4L810.9 643.2L811 643.3L811 643.3L811 641.4L811.6 641.4L811.6 643.3L812 643.5L812.3 643.5L812.3 642.6L813 642.6L813 643.5L813 645.1L813.3 645.1L813.3 642.6L814.2 642.6L814.2 645.1L814 643.5L814.1 643.5L814.1 640.5L815 640.5L815 643.5L815 645.4L815.4 645.4L815.4 639.1L816.3 639.1L816.3 645.4L816 645.3L816.5 645.3L816.5 643.9L817.1 643.9L817.1 645.3L817 645.5L817.3 645.5L817.3 644.4L818.3 644.4L818.3 645.5L818 645.6L819 646.1L819.2 646.1L819.2 644.2L819.8 644.2L819.8 646.1L820 645.9L821 646.2L821 646.2L821 640.1L821.4 640.1L821.4 646.2L822 647.2L822.4 647.2L822.4 646.5L823.3 646.5L823.3 647.2L823 646.8L823.2 646.8L823.2 645.2L823.8 645.2L823.8 646.8L824 648.4L825 648.8L826 646.9L827 648.2L827.1 648.2L827.1 626.3L827.8 626.3L827.8 648.2L828 649.5L828.3 649.5L828.3 649.2L829.3 649.2L829.3 649.5L829 649.8L829.2 649.8L829.2 648.2L829.7 648.2L829.7 649.8L830 650.1L831 650.6L831 650.6L831 647.3L831.6 647.3L831.6 650.6L832 651.1L833 651.5L834 652.3L835 651.8L835.1 651.8L835.1 646.5L835.4 646.5L835.4 651.8L836 652.6L836.2 652.6L836.2 648.9L837.2 648.9L837.2 652.6L837 651.7L838 652.8L838.2 652.8L838.2 647.8L838.9 647.8L838.9 652.8L839 652.6L839 652.6L839 651.8L839.9 651.8L839.9 652.6L840 654.3L841 655.1L842 654.5L842.3 654.5L842.3 653.9L843.2 653.9L843.2 654.5L843 654L844 654.9L844.5 654.9L844.5 648L845.6 648L845.6 654.9L845 655.3L845.1 655.3L845.1 652.5L845.3 652.5L845.3 655.3L846 655.8L846.4 655.8L846.4 617.4L846.7 617.4L846.7 655.8L847 656.6L848 656.8L848.2 656.8L848.2 655.6L849.2 655.6L849.2 656.8L849 655.4L850 657.8L850.5 657.8L850.5 656.8L851.6 656.8L851.6 657.8L851 657.2L851.2 657.2L851.2 640.1L851.5 640.1L851.5 657.2L852 657.5L852.4 657.5L852.4 655.3L853.2 655.3L853.2 657.5L853 658.8L854 658.3L854.1 658.3L854.1 655.8L854.7 655.8L854.7 658.3L855 658.1L855.5 658.1L855.5 646.8L856.3 646.8L856.3 658.1L856 658.5L856.3 658.5L856.3 657L857.2 657L857.2 658.5L857 659.6L858 660.3L859 661L860 660.5L860.1 660.5L860.1 653.8L860.3 653.8L860.3 660.5L861 660.7L861.3 660.7L861.3 660.7L862.2 660.7L862.2 660.7L862 662.1L862.1 662.1L862.1 657.9L862.6 657.9L862.6 662.1L863 661.4L863.3 661.4L863.3 652.2L864.1 652.2L864.1 661.4L864 662.7L864.2 662.7L864.2 657.4L865.2 657.4L865.2 662.7L865 662.4L865.1 662.4L865.1 660.5L865.5 660.5L865.5 662.4L866 662.7L866.4 662.7L866.4 658L866.8 658L866.8 662.7L867 662.8L867.2 662.8L867.2 655.8L867.7 655.8L867.7 662.8L868 663.3L868.5 663.3L868.5 654.3L869 654.3L869 663.3L869 663.2L869.1 663.2L869.1 649.3L870.1 649.3L870.1 663.2L870 663.4L870.2 663.4L870.2 650.5L871.4 650.5L871.4 663.4L871 664L871.1 664L871.1 656.7L871.8 656.7L871.8 664L872 664L873 664.8L873.1 664.8L873.1 663.8L873.9 663.8L873.9 664.8L874 665L874.4 665L874.4 662L875.5 662L875.5 665L875 665.1L876 665.5L876.4 665.5L876.4 660.3L877.4 660.3L877.4 665.5L877 665.7L878 667L879 666.4L879.3 666.4L879.3 658.1L880.4 658.1L880.4 666.4L880 666.4L881 666.9L882 667.7L883 667.5L883.2 667.5L883.2 665.9L884.3 665.9L884.3 667.5L884 667.9L885 668.1L886 668.6L887 669L888 669.3L889 668.6L889.4 668.6L889.4 633.5L890.3 633.5L890.3 668.6L890 669.2L890.3 669.2L890.3 665.5L891.1 665.5L891.1 669.2L891 668.7L891.3 668.7L891.3 667.5L891.7 667.5L891.7 668.7L892 670.7L892.4 670.7L892.4 670.1L892.8 670.1L892.8 670.7L893 671.2L894 671.6L894.1 671.6L894.1 670L895 670L895 671.6L895 671.3L896 672.1L896.1 672.1L896.1 654.1L896.7 654.1L896.7 672.1L897 671.8L897.5 671.8L897.5 668.9L897.8 668.9L897.8 671.8L898 672L899 671.6L900 672.3L900.3 672.3L900.3 667.4L900.8 667.4L900.8 672.3L901 672.7L901 672.7L901 634.3L901.9 634.3L901.9 672.7L902 673.6L902.4 673.6L902.4 668.5L902.7 668.5L902.7 673.6L903 674.2L903 674.2L903 670.3L904.1 670.3L904.1 674.2L904 673.3L905 673.9L906 674.1L906.3 674.1L906.3 670.6L906.7 670.6L906.7 674.1L907 673.7L907.4 673.7L907.4 668.4L907.9 668.4L907.9 673.7L908 673.5L909 674.1L909.2 674.1L909.2 670.4L909.8 670.4L909.8 674.1L910 674L911 674.7L911.5 674.7L911.5 674.1L912.3 674.1L912.3 674.7L912 675L912 675L912 670.9L913.2 670.9L913.2 675L913 675.2L914 675.4L914.1 675.4L914.1 673L914.6 673L914.6 675.4L915 675.9L915.3 675.9L915.3 665.2L916.4 665.2L916.4 675.9L916 675.4L916.3 675.4L916.3 673.1L917.2 673.1L917.2 675.4L917 676.5L918 675.4L918.3 675.4L918.3 674.4L918.6 674.4L918.6 675.4L919 676.4L920 676.8L920.4 676.8L920.4 657.1L920.7 657.1L920.7 676.8L921 676.4L922 676.2L923 677.5L924 677L925 677.9L925.4 677.9L925.4 663.4L926.2 663.4L926.2 677.9L926 678.1L926.1 678.1L926.1 667.8L926.7 667.8L926.7 678.1L927 677.9L927.2 677.9L927.2 673.1L927.8 673.1L927.8 677.9L928 678.1L928 678.1L928 618.1L928.5 618.1L928.5 678.1L929 678.8L929.1 678.8L929.1 677.5L929.9 677.5L929.9 678.8L929.8 678.8L929.8 588.8L930.4 588.8L930.4 678.8L930 678.7L931 678.2L931.3 678.2L931.3 677.8L932.4 677.8L932.4 678.2L932 678.9L933 679.3L934 679.3L934 679.3L934 675.2L934.6 675.2L934.6 679.3L935 679.5L936 679.5L936.1 679.5L936.1 677.6L937.1 677.6L937.1 679.5L937 679.7L937.3 679.7L937.3 665.4L938.5 665.4L938.5 679.7L938 679.5L939 679.5L939.3 679.5L939.3 672.9L939.6 672.9L939.6 679.5L940 681L940.1 681L940.1 674.8L940.9 674.8L940.9 681L941 680.3L941 680.3L941 672.3L941.4 672.3L941.4 680.3L942 680.9L942.2 680.9L942.2 671.9L943.4 671.9L943.4 680.9L943 680.3L943.5 680.3L943.5 670.8L943.8 670.8L943.8 680.3L944 681.3L944.1 681.3L944.1 678.1L944.5 678.1L944.5 681.3L945 681L945.1 681L945.1 680.3L945.7 680.3L945.7 681L946 683.2L946.2 683.2L946.2 674.1L947.1 674.1L947.1 683.2L947 681.4L947 681.4L947 677.8L947.4 677.8L947.4 681.4L948 681.6L949 682.8L949 682.8L949 680.3L949.5 680.3L949.5 682.8L950 683.1L950.5 683.1L950.5 674L950.8 674L950.8 683.1L951 681.7L951.3 681.7L951.3 672.2L951.9 672.2L951.9 681.7L952 683.1L952.3 683.1L952.3 667.1L953.5 667.1L953.5 683.1L953 683.6L953.3 683.6L953.3 680.2L954.1 680.2L954.1 683.6L954 682.8L954.4 682.8L954.4 652.9L954.6 652.9L954.6 682.8L955 683.9L956 683.5L956.3 683.5L956.3 645.1L956.5 645.1L956.5 683.5L957 683.5L958 684L958.3 684L958.3 679.4L959 679.4L959 684L959 684.2L960 683.9L960.1 683.9L960.1 682.3L961.1 682.3L961.1 683.9L961 685.9L961.3 685.9L961.3 678.2L962.1 678.2L962.1 685.9L962 684.8L962.1 684.8L962.1 679.1L963.2 679.1L963.2 684.8L963 684.9L964 685.9L964.4 685.9L964.4 678.6L965.1 678.6L965.1 685.9L965 685.6L965.4 685.6L965.4 679.7L966.3 679.7L966.3 685.6L966 686.6L966.5 686.6L966.5 684.5L967 684.5L967 686.6L967 686L967.4 686L967.4 677.1L968 677.1L968 686L968 686.5L968.1 686.5L968.1 679.2L969 679.2L969 686.5L969 686.6L969.1 686.6L969.1 683.3L970.2 683.3L970.2 686.6L970 686.8L970.1 686.8L970.1 669.7L971.3 669.7L971.3 686.8L971 686.8L971.3 686.8L971.3 685.8L972.3 685.8L972.3 686.8L972 687.1L972 687.1L972 679.9L973.1 679.9L973.1 687.1L973 688.2L973 688.2L973 683L973.5 683L973.5 688.2L974 687.2L974.3 687.2L974.3 685.8L975.3 685.8L975.3 687.2L975 687.5L975.1 687.5L975.1 687.4L975.6 687.4L975.6 687.5L976 687.8L976.3 687.8L976.3 687.1L977.3 687.1L977.3 687.8L977 688.5L978 688.6L978.3 688.6L978.3 678.2L979.5 678.2L979.5 688.6L979 689L979.2 689L979.2 688.8L980.1 688.8L980.1 689L980 688.1L980.3 688.1L980.3 665.9L981.1 665.9L981.1 688.1L981 689.1L981.4 689.1L981.4 687.5L982.3 687.5L982.3 689.1L982 689.1L982.1 689.1L982.1 683.9L982.8 683.9L982.8 689.1L983 689.2L984 689.6L984.2 689.6L984.2 684L984.6 684L984.6 689.6L985 688.8L985 688.8L985 686.2L985.9 686.2L985.9 688.8L986 690.1L987 690.2L988 689.6L988.5 689.6L988.5 683.7L989 683.7L989 689.6L989 690.5L990 691.5L991 690.7L991.3 690.7L991.3 676.9L992.3 676.9L992.3 690.7L992 691.4L992.3 691.4L992.3 679.3L993.1 679.3L993.1 691.4L993 691.2L993.5 691.2L993.5 685.4L993.8 685.4L993.8 691.2L994 691.1L995 691.2L996 691.7L996.3 691.7L996.3 682.8L997 682.8L997 691.7L997 692.7L998 692.7L998 692.7L998 686.9L998.9 686.9L998.9 692.7L999 692.1L1000 693.1L1000.3 693.1L1000.3 689.4L1000.8 689.4L1000.8 693.1L1001 692.8L1002 692.7L1002.2 692.7L1002.2 690.1L1003 690.1L1003 692.7L1003 693.4L1003.5 693.4L1003.5 690L1003.9 690L1003.9 693.4L1004 693L1005 692.8L1005.2 692.8L1005.2 689.3L1006 689.3L1006 692.8L1006 694.5L1006.1 694.5L1006.1 693.4L1006.6 693.4L1006.6 694.5L1007 693.1L1008 694.5L1009 693.6L1010 694.6L1011 694.7L1012 694.8L1012.3 694.8L1012.3 669.3L1012.8 669.3L1012.8 694.8L1013 694.2L1013.2 694.2L1013.2 670.9L1014.1 670.9L1014.1 694.2L1014 695.5L1015 695.8L1015.2 695.8L1015.2 695.1L1016.1 695.1L1016.1 695.8L1016 695.6L1017 696.3L1017.4 696.3L1017.4 686.3L1018.6 686.3L1018.6 696.3L1018 697.1L1019 696.5L1020 697.3L1020.1 697.3L1020.1 694.6L1020.9 694.6L1020.9 697.3L1021 696.8L1022 697.9L1023 698.2L1024 699.4L1024.3 699.4L1024.3 685.1L1025.4 685.1L1025.4 699.4L1025 698.9L1025.3 698.9L1025.3 690.8L1026.5 690.8L1026.5 698.9L1026 699L1027 699.7L1027.1 699.7L1027.1 684.1L1028.2 684.1L1028.2 699.7L1028 698.8L1028.3 698.8L1028.3 698.5L1029.4 698.5L1029.4 698.8L1029 700.1L1029.5 700.1L1029.5 693.5L1029.7 693.5L1029.7 700.1L1030 699.5L1031 699.8L1031.3 699.8L1031.3 695.1L1031.9 695.1L1031.9 699.8L1032 700.9L1032.1 700.9L1032.1 700.1L1033 700.1L1033 700.9L1033 700.7L1033.5 700.7L1033.5 693.3L1034.5 693.3L1034.5 700.7L1034 701.5L1034.1 701.5L1034.1 697.3L1035 697.3L1035 701.5L1035 700.4L1035.4 700.4L1035.4 697.8L1035.9 697.8L1035.9 700.4L1036 701.6L1037 701.4L1037.3 701.4L1037.3 698.8L1038.5 698.8L1038.5 701.4L1038 701.8L1038.2 701.8L1038.2 696.8L1038.7 696.8L1038.7 701.8L1039 701.3L1039.1 701.3L1039.1 692.5L1039.3 692.5L1039.3 701.3L1040 703L1041 702.9L1041.5 702.9L1041.5 698.6L1042.2 698.6L1042.2 702.9L1042 702.5L1043 702.6L1043 702.6L1043 685.3L1044.1 685.3L1044.1 702.6L1044 703.1L1044.1 703.1L1044.1 695.2L1044.8 695.2L1044.8 703.1L1045 704.5L1045.4 704.5L1045.4 688.7L1046.5 688.7L1046.5 704.5L1046 704.3L1046.4 704.3L1046.4 701.1L1047 701.1L1047 704.3L1047 705L1047.2 705L1047.2 699.2L1047.9 699.2L1047.9 705L1048 706.3L1048.2 706.3L1048.2 698.7L1049.5 698.7L1049.5 706.3L1049 707L1049.2 707L1049.2 697L1050.2 697L1050.2 707L1050 707.9L1051 709.1L1051.3 709.1L1051.3 697.9L1052.1 697.9L1052.1 709.1L1052 709.7L1052.5 709.7L1052.5 706.8L1053.6 706.8L1053.6 709.7L1053 710.9L1053.3 710.9L1053.3 691.9L1054.6 691.9L1054.6 710.9L1054 710.7L1054.2 710.7L1054.2 701.5L1055.8 701.5L1055.8 710.7L1055 712L1055.5 712L1055.5 705L1056.8 705L1056.8 712L1056 712L1056.5 712L1056.5 705L1057.8 705L1057.8 712L1057 712.3L1058 712.4L1058.4 712.4L1058.4 709.6L1059.4 709.6L1059.4 712.4L1059 712.2L1059 712.2L1059 696.5L1060.6 696.5L1060.6 712.2L1060 712.4L1060.1 712.4L1060.1 703.2L1061.8 703.2L1061.8 712.4L1061 713.2L1061.3 713.2L1061.3 684.1L1062.7 684.1L1062.7 713.2L1062 712.6L1062.5 712.6L1062.5 695.7L1064.1 695.7L1064.1 712.6L1063 712.4L1063.2 712.4L1063.2 672.4L1064.1 672.4L1064.1 712.4L1064 713.4L1064.2 713.4L1064.2 703.3L1065.4 703.3L1065.4 713.4L1065 713.7L1065.4 713.7L1065.4 702.5L1066.5 702.5L1066.5 713.7L1066 713.2L1066.3 713.2L1066.3 709.6L1066.9 709.6L1066.9 713.2L1067 713.5L1067.3 713.5L1067.3 704.8L1068.7 704.8L1068.7 713.5L1068 713.2L1068.4 713.2L1068.4 696.1L1069.6 696.1L1069.6 713.2L1069 713.6L1069.1 713.6L1069.1 708.8L1070.1 708.8L1070.1 713.6L1070 714.3L1070.3 714.3L1070.3 701L1071.9 701L1071.9 714.3L1071 714.3L1071.1 714.3L1071.1 703.9L1071.6 703.9L1071.6 714.3L1072 714.1L1072.4 714.1L1072.4 699.4L1073.4 699.4L1073.4 714.1L1073 714L1073.4 714L1073.4 703.5L1074.6 703.5L1074.6 714L1074 713.5L1074.1 713.5L1074.1 701.2L1075.3 701.2L1075.3 713.5L1075 714.6L1076 714.7L1077 715.2L1077.4 715.2L1077.4 704.7L1079 704.7L1079 715.2L1078 715.7L1078.3 715.7L1078.3 712.6L1079 712.6L1079 715.7L1079 715.1L1079.2 715.1L1079.2 705.1L1080.7 705.1L1080.7 715.1L1080 715.5L1080.4 715.5L1080.4 702.5L1082 702.5L1082 715.5L1081 714.5L1081.2 714.5L1081.2 704.9L1081.9 704.9L1081.9 714.5L1082 715.7L1082 715.7L1082 707L1082.6 707L1082.6 715.7L1083 715.6L1083.3 715.6L1083.3 712.5L1084.2 712.5L1084.2 715.6L1084 715.9L1084.4 715.9L1084.4 704.8L1085.9 704.8L1085.9 715.9L1085 715.7L1086 715.6L1086 715.6L1086 670.6L1086.5 670.6L1086.5 715.6L1086.3 715.6L1086.3 700.3L1087 700.3L1087 715.6L1087 716.2L1087.2 716.2L1087.2 697.3L1088.6 697.3L1088.6 716.2L1088 715.2L1088.5 715.2L1088.5 713.8L1089.8 713.8L1089.8 715.2L1089 715.9L1089.2 715.9L1089.2 687.8L1089.9 687.8L1089.9 715.9L1090 716.2L1090.3 716.2L1090.3 707.9L1091.2 707.9L1091.2 716.2L1091 715.3L1091.1 715.3L1091.1 702.2L1092.4 702.2L1092.4 715.3L1092 715.2L1092 715.2L1092 702.3L1092.7 702.3L1092.7 715.2L1093 716L1093.4 716L1093.4 689.6L1094 689.6L1094 716L1094 716L1094.3 716L1094.3 674L1096 674L1096 716L1095 716.3L1095.2 716.3L1095.2 705.7L1096.1 705.7L1096.1 716.3L1096 716.3L1097 715.7L1097.1 715.7L1097.1 692.5L1098.3 692.5L1098.3 715.7L1098 716.3L1098 716.3L1098 668.1L1099 668.1L1099 716.3L1099 716.8L1100 716.1L1100 716.1L1100 674.1L1100.5 674.1L1100.5 716.1L1100.2 716.1L1100.2 708.7L1100.9 708.7L1100.9 716.1L1101 716.2L1101.4 716.2L1101.4 677.8L1102.5 677.8L1102.5 716.2L1102 715.9L1102.5 715.9L1102.5 708.4L1103 708.4L1103 715.9L1103 716.9L1103.4 716.9L1103.4 708.2L1104.5 708.2L1104.5 716.9L1104 717.5L1104.5 717.5L1104.5 709.1L1105.9 709.1L1105.9 717.5L1105 715.9L1106 717L1106.4 717L1106.4 713.7L1107.8 713.7L1107.8 717L1107 717.2L1107 717.2L1107 708.2L1107.8 708.2L1107.8 717.2L1108 716.5L1108 716.5L1108 711.5L1108.8 711.5L1108.8 716.5L1109 716.7L1109.3 716.7L1109.3 698.2L1110.4 698.2L1110.4 716.7L1110 716.4L1110.3 716.4L1110.3 692.9L1111.2 692.9L1111.2 716.4L1111 716.6L1111.4 716.6L1111.4 692.3L1112.3 692.3L1112.3 716.6L1112 717.1L1112.4 717.1L1112.4 707.4L1113.7 707.4L1113.7 717.1L1113 717.4L1113.3 717.4L1113.3 710.9L1114.8 710.9L1114.8 717.4L1114 717.2L1115 717.7L1115.5 717.7L1115.5 702.2L1116.4 702.2L1116.4 717.7L1116 717.4L1116.5 717.4L1116.5 667L1117.8 667L1117.8 717.4L1117 716.8L1117.2 716.8L1117.2 707L1118.1 707L1118.1 716.8L1118 718.2L1118.1 718.2L1118.1 713L1119.6 713L1119.6 718.2L1119 718.1L1119 718.1L1119 705.6L1119.6 705.6L1119.6 718.1L1120 717.2L1120 717.2L1120 695L1121.2 695L1121.2 717.2L1121 718.5L1121.3 718.5L1121.3 696.4L1123.1 696.4L1123.1 718.5L1122 717.9L1122.5 717.9L1122.5 711.1L1123.1 711.1L1123.1 717.9L1123 717.8L1123.3 717.8L1123.3 711.2L1124.8 711.2L1124.8 717.8L1124 718.8L1124 718.8L1124 704.9L1124.4 704.9L1124.4 718.8L1125 716.7L1125.4 716.7L1125.4 703.4L1126.5 703.4L1126.5 716.7L1126 717.2L1126.5 717.2L1126.5 684.9L1127.9 684.9L1127.9 717.2L1127 718.4L1127.5 718.4L1127.5 705.3L1128.3 705.3L1128.3 718.4L1128 718L1128.3 718L1128.3 705.1L1128.9 705.1L1128.9 718L1129 717.7L1129.3 717.7L1129.3 667.3L1130.5 667.3L1130.5 717.7L1130 719L1131 718.5L1131.2 718.5L1131.2 685.5L1131.8 685.5L1131.8 718.5L1132 717.7L1132.3 717.7L1132.3 693.5L1133.1 693.5L1133.1 717.7L1133 718.1L1133.1 718.1L1133.1 709.4L1134.3 709.4L1134.3 718.1L1134 718.9L1134.3 718.9L1134.3 686.4L1136 686.4L1136 718.9L1135 719.4L1135.4 719.4L1135.4 694.7L1136.6 694.7L1136.6 719.4L1136 717.6L1136.3 717.6L1136.3 683.3L1137.5 683.3L1137.5 717.6L1137 718.8L1137.4 718.8L1137.4 712.5L1138.2 712.5L1138.2 718.8L1138 718.6L1138.2 718.6L1138.2 709.9L1139.1 709.9L1139.1 718.6L1139 718L1139.2 718L1139.2 710.8L1140.6 710.8L1140.6 718L1140 718.8L1140.2 718.8L1140.2 713.2L1141 713.2L1141 718.8L1141 718.2L1141.5 718.2L1141.5 713.2L1142 713.2L1142 718.2L1142 718.7L1142 718.7L1142 673.7L1142.8 673.7L1142.8 718.7L1142.1 718.7L1142.1 705.3L1143.3 705.3L1143.3 718.7L1143 719.9L1143 719.9L1143 649.9L1143.6 649.9L1143.6 719.9L1143.1 719.9L1143.1 696L1144.4 696L1144.4 719.9L1144 719.4L1144 719.4L1144 629.4L1144.5 629.4L1144.5 719.4L1144.1 719.4L1144.1 717.4L1144.6 717.4L1144.6 719.4L1145 719.6L1145 719.6L1145 619.6L1145.5 619.6L1145.5 719.6L1145 719.6L1145 712.9L1146.3 712.9L1146.3 719.6L1146 719.5L1146 719.5L1146 601.5L1146.6 601.5L1146.6 719.5L1146.1 719.5L1146.1 698.1L1146.9 698.1L1146.9 719.5L1147 719.5L1147 719.5L1147 614.5L1147.5 614.5L1147.5 719.5L1147 719.5L1147 715.6L1148.6 715.6L1148.6 719.5L1148 719.9L1148 719.9L1148 634.9L1148.5 634.9L1148.5 719.9L1148.3 719.9L1148.3 699.4L1149 699.4L1149 719.9L1149 718.9L1149 718.9L1149 648.9L1149.6 648.9L1149.6 718.9L1149.5 718.9L1149.5 696.5L1150.2 696.5L1150.2 718.9L1150 719.3L1150 719.3L1150 664.3L1150.7 664.3L1150.7 719.3L1150.4 719.3L1150.4 714.3L1152.2 714.3L1152.2 719.3L1151 720L1151 720L1151 678L1151.6 678L1151.6 720L1151.1 720L1151.1 706.1L1151.9 706.1L1151.9 720L1152 719.3L1152 719.3L1152 689.3L1152.6 689.3L1152.6 719.3L1152.1 719.3L1152.1 701.6L1153.5 701.6L1153.5 719.3L1153 719.5L1153 719.5L1153 697.5L1153.6 697.5L1153.6 719.5L1153.1 719.5L1153.1 704.5L1153.7 704.5L1153.7 719.5L1154 720.4L1154.5 720.4L1154.5 717.3L1156 717.3L1156 720.4L1155 720.6L1155 720.6L1155 692.8L1155.5 692.8L1155.5 720.6L1156 719.6L1156.3 719.6L1156.3 709.6L1158 709.6L1158 719.6L1157 719.6L1157 719.6L1157 700L1158.3 700L1158.3 719.6L1158 720.3L1159 720.3L1159.3 720.3L1159.3 698.3L1161 698.3L1161 720.3L1160 720L1161 720.7L1162 720.9L1163 720.8L1163.5 720.8L1163.5 706.8L1164.7 706.8L1164.7 720.8L1164 722.3L1165 721.7L1166 721.5L1167 721.8L1168 722.9L1169 722.1L1170 721.3L1170.3 721.3L1170.3 719.4L1170.7 719.4L1170.7 721.3L1171 722L1172 722L1173 721.8L1174 722.4L1174.4 722.4L1174.4 709.8L1175.2 709.8L1175.2 722.4L1175 722.5L1176 722.5L1177 722.4L1178 723.2L1179 722.1L1180 723.5L1181 723.2L1182 723.5L1183 722.3L1184 724.4L1185 722.9L1185.1 722.9L1185.1 708.9L1186.1 708.9L1186.1 722.9L1186 723.5L1187 724.3L1188 723.9L1188.1 723.9L1188.1 723.5L1189.2 723.5L1189.2 723.9L1189 724.1L1189.4 724.1L1189.4 718.7L1190.4 718.7L1190.4 724.1L1190 723.3L1190.4 723.3L1190.4 722.9L1191.3 722.9L1191.3 723.3L1191 724.4L1192 724.8L1193 725.2L1194 724.8L1195 725.2L1195.1 725.2L1195.1 717.4L1195.8 717.4L1195.8 725.2L1196 725.4L1197 725L1198 725.1L1198.3 725.1L1198.3 715.3L1199.4 715.3L1199.4 725.1L1199 726.6L1199.2 726.6L1199.2 718.4L1200.4 718.4L1200.4 726.6L1200 725.3L1200.2 725.3L1200.2 704.6L1201 704.6L1201 725.3L1201 726.5L1201.2 726.5L1201.2 710L1202.8 710L1202.8 726.5L1202 726L1202.2 726L1202.2 700L1203.8 700L1203.8 726L1203 726.8L1203.3 726.8L1203.3 700L1203.8 700L1203.8 726.8L1204 725.9L1204.5 725.9L1204.5 713L1206.2 713L1206.2 725.9L1205 726.6L1205 726.6L1205 678.6L1205.5 678.6L1205.5 726.6L1205.4 726.6L1205.4 709.7L1205.8 709.7L1205.8 726.6L1206 726.7L1206.5 726.7L1206.5 718.3L1208 718.3L1208 726.7L1207 726.5L1207.2 726.5L1207.2 712.9L1208 712.9L1208 726.5L1208 726.9L1208.3 726.9L1208.3 725.3L1209.2 725.3L1209.2 726.9L1209 726.5L1209.1 726.5L1209.1 722.9L1210.5 722.9L1210.5 726.5L1210 727L1210.1 727L1210.1 714.5L1211.3 714.5L1211.3 727L1211 726.9L1212 727.6L1212.3 727.6L1212.3 697.1L1213.4 697.1L1213.4 727.6L1213 727.3L1213.3 727.3L1213.3 699.2L1215 699.2L1215 727.3L1214 726.8L1214.1 726.8L1214.1 707.8L1215 707.8L1215 726.8L1215 727.4L1215 727.4L1215 687.4L1215.5 687.4L1215.5 727.4L1216 727.7L1217 727.4L1217.2 727.4L1217.2 707L1217.9 707L1217.9 727.4L1218 728.7L1218.4 728.7L1218.4 716.5L1218.8 716.5L1218.8 728.7L1219 728.3L1220 728.7L1220.3 728.7L1220.3 700.5L1221.8 700.5L1221.8 728.7L1221 728L1221.3 728L1221.3 725.2L1221.7 725.2L1221.7 728L1222 728.3L1223 729.1L1223.4 729.1L1223.4 714.4L1224.1 714.4L1224.1 729.1L1224 728.1L1224.2 728.1L1224.2 698.6L1225.2 698.6L1225.2 728.1L1225 729.1L1225.3 729.1L1225.3 719.9L1225.8 719.9L1225.8 729.1L1226 729.1L1226.5 729.1L1226.5 714.7L1228.2 714.7L1228.2 729.1L1227 728.9L1227.2 728.9L1227.2 716L1228.6 716L1228.6 728.9L1228 729.3L1228.2 729.3L1228.2 723.1L1229.9 723.1L1229.9 729.3L1229 728.9L1229.4 728.9L1229.4 725.3L1230.3 725.3L1230.3 728.9L1230 729.6L1230.3 729.6L1230.3 727.9L1231.9 727.9L1231.9 729.6L1231 729.1L1231.3 729.1L1231.3 716.9L1232.3 716.9L1232.3 729.1L1232 729.1L1233 730.5L1233.1 730.5L1233.1 726.6L1234 726.6L1234 730.5L1234 729.6L1234.4 729.6L1234.4 719.9L1235 719.9L1235 729.6L1235 729L1235.5 729L1235.5 718L1236.1 718L1236.1 729L1236 730.6L1236.4 730.6L1236.4 703.1L1237.6 703.1L1237.6 730.6L1237 729.8L1237.4 729.8L1237.4 710.2L1238.5 710.2L1238.5 729.8L1238 728.5L1238 728.5L1238 678.5L1238.5 678.5L1238.5 728.5L1238.3 728.5L1238.3 691L1239.7 691L1239.7 728.5L1239 730.3L1239.1 730.3L1239.1 729.5L1240.6 729.5L1240.6 730.3L1240 730.9L1241 730.7L1241.5 730.7L1241.5 726.2L1241.9 726.2L1241.9 730.7L1242 731.4L1242 731.4L1242 714.2L1243.4 714.2L1243.4 731.4L1243 730.6L1243.3 730.6L1243.3 699.4L1244.4 699.4L1244.4 730.6L1244 731L1244.4 731L1244.4 717.1L1245.4 717.1L1245.4 731L1245 730.3L1245.2 730.3L1245.2 723.2L1246.2 723.2L1246.2 730.3L1246 731L1246.3 731L1246.3 707.9L1246.9 707.9L1246.9 731L1247 731.7L1247.1 731.7L1247.1 724.1L1248.4 724.1L1248.4 731.7L1248 731.3L1248.5 731.3L1248.5 714.4L1249.6 714.4L1249.6 731.3L1249 731.2L1249.3 731.2L1249.3 691.2L1250.2 691.2L1250.2 731.2L1250 730.2L1251 731.1L1251.5 731.1L1251.5 725.6L1252.6 725.6L1252.6 731.1L1252 730.7L1252 730.7L1252 682.7L1252.5 682.7L1252.5 730.7L1252.3 730.7L1252.3 714.8L1253.5 714.8L1253.5 730.7L1253 731.8L1253.1 731.8L1253.1 707.3L1254.3 707.3L1254.3 731.8L1254 731.2L1255 731.8L1255 731.8L1255 720.3L1256.4 720.3L1256.4 731.8L1256 731.2L1256.4 731.2L1256.4 716.5L1256.9 716.5L1256.9 731.2L1257 732.7L1258 731.3L1258.2 731.3L1258.2 695.1L1259.8 695.1L1259.8 731.3L1259 732L1259.3 732L1259.3 707.2L1259.8 707.2L1259.8 732L1260 733.3L1260.3 733.3L1260.3 719.5L1261.6 719.5L1261.6 733.3L1261 732.2L1261.3 732.2L1261.3 708.6L1261.8 708.6L1261.8 732.2L1262 731.7L1262 731.7L1262 726.6L1263.7 726.6L1263.7 731.7L1263 732.6L1263 732.6L1263 727.5L1264.6 727.5L1264.6 732.6L1264 732.8L1264 732.8L1264 725.6L1265.6 725.6L1265.6 732.8L1265 732.8L1265 732.8L1265 718.6L1266 718.6L1266 732.8L1266 731.5L1266.3 731.5L1266.3 717.8L1266.9 717.8L1266.9 731.5L1267 732.7L1267.5 732.7L1267.5 717.6L1269 717.6L1269 732.7L1268 731.6L1268 731.6L1268 688.6L1268.5 688.6L1268.5 731.6L1268.4 731.6L1268.4 713.6L1268.9 713.6L1268.9 731.6L1269 733.7L1269.4 733.7L1269.4 695.6L1269.8 695.6L1269.8 733.7L1270 732.9L1270.2 732.9L1270.2 719.8L1270.6 719.8L1270.6 732.9L1271 732.7L1271.4 732.7L1271.4 721.5L1272.7 721.5L1272.7 732.7L1272 733.3L1272.4 733.3L1272.4 713.7L1273.6 713.7L1273.6 733.3L1273 733.3L1273.2 733.3L1273.2 720.6L1274.7 720.6L1274.7 733.3L1274 732.6L1274 732.6L1274 721.2L1275.5 721.2L1275.5 732.6L1275 734L1275 734L1275 725.5L1276 725.5L1276 734L1276 733.2L1276.4 733.2L1276.4 718.6L1277.5 718.6L1277.5 733.2L1277 732.5L1277.1 732.5L1277.1 718.3L1278.8 718.3L1278.8 732.5L1278 734.2L1278.5 734.2L1278.5 729.4L1279.6 729.4L1279.6 734.2L1279 734.3L1279.2 734.3L1279.2 715.5L1279.7 715.5L1279.7 734.3L1280 734.2L1280.3 734.2L1280.3 702.7L1281.9 702.7L1281.9 734.2L1281 734L1281.5 734L1281.5 722.4L1282 722.4L1282 734L1282 733.3L1282.1 733.3L1282.1 712L1282.7 712L1282.7 733.3L1283 734.3L1283.4 734.3L1283.4 719.9L1284.4 719.9L1284.4 734.3L1284 734.9L1284.3 734.9L1284.3 703.8L1284.9 703.8L1284.9 734.9L1285 734.4L1286 734.9L1286.2 734.9L1286.2 711.9L1287.5 711.9L1287.5 734.9L1287 733.8L1288 734.8L1288.2 734.8L1288.2 716.7L1289.2 716.7L1289.2 734.8L1289 734.8L1289.4 734.8L1289.4 724.2L1290.2 724.2L1290.2 734.8L1290 733.7L1290.3 733.7L1290.3 705.2L1291.4 705.2L1291.4 733.7L1291 733.7L1291.3 733.7L1291.3 713.7L1293 713.7L1293 733.7L1292 734.2L1292.4 734.2L1292.4 722.9L1293.3 722.9L1293.3 734.2L1293 734.7L1293.4 734.7L1293.4 705.7L1295 705.7L1295 734.7L1294 735L1295 734.7L1295.2 734.7L1295.2 731.7L1295.5 731.7L1295.5 734.7L1296 734.9L1297 734.9L1298 735.1L1299 735.4L1299.4 735.4L1299.4 732.2L1299.7 732.2L1299.7 735.4L1300 735.5L1300.1 735.5L1300.1 718.7L1301 718.7L1301 735.5L1301 735.3L1302 735.5L1303 735.3L1304 736L1305 735.4L1306 736.6L1307 735.8L1308 736.1L1308 736.1L1308 735.3L1309.1 735.3L1309.1 736.1L1309 735.7L1310 736L1311 736.3L1312 736.3L1313 736.1L1314 735.9L1315 736.6L1316 736.8L1317 737.1L1318 737.5L1319 736.8L1320 736.1L1321 737.1L1322 736.3L1323 736.7L1324 737.9L1325 737.8L1325.1 737.8L1325.1 734.5L1326.5 734.5L1326.5 737.8L1326 737.3L1326.1 737.3L1326.1 722.4L1326.6 722.4L1326.6 737.3L1327 737.3L1328 737.7L1328.2 737.7L1328.2 727.6L1329.5 727.6L1329.5 737.7L1329 736.9L1329.4 736.9L1329.4 717.1L1330.1 717.1L1330.1 736.9L1330 738.1L1330.2 738.1L1330.2 730L1331.1 730L1331.1 738.1L1331 737.8L1331 737.8L1331 713.9L1332.6 713.9L1332.6 737.8L1332 738.9L1332.5 738.9L1332.5 728L1333.8 728L1333.8 738.9L1333 737.5L1333.1 737.5L1333.1 736.9L1334.1 736.9L1334.1 737.5L1334 738.6L1334.1 738.6L1334.1 728.7L1334.6 728.7L1334.6 738.6L1335 737.9L1336 738.8L1336.5 738.8L1336.5 724.2L1338.3 724.2L1338.3 738.8L1337 737.8L1337.3 737.8L1337.3 726.1L1338.6 726.1L1338.6 737.8L1338 738.8L1339 738.3L1339.5 738.3L1339.5 734.6L1340.6 734.6L1340.6 738.3L1340 738.1L1340.3 738.1L1340.3 730.4L1341.7 730.4L1341.7 738.1L1341 738.5L1341.2 738.5L1341.2 726.1L1342.3 726.1L1342.3 738.5L1342 738.9L1342.1 738.9L1342.1 712.4L1343 712.4L1343 738.9L1343 738.9L1343.1 738.9L1343.1 724.3L1343.8 724.3L1343.8 738.9L1344 739.6L1344.2 739.6L1344.2 732.4L1345.7 732.4L1345.7 739.6L1345 739.3L1345 739.3L1345 707.3L1345.5 707.3L1345.5 739.3L1345.5 739.3L1345.5 736.6L1346.1 736.6L1346.1 739.3L1346 737.6L1347 738.8L1347.3 738.8L1347.3 730.7L1348.2 730.7L1348.2 738.8L1348 738.1L1348.2 738.1L1348.2 732.8L1349.6 732.8L1349.6 738.1L1349 739L1349.2 739L1349.2 737.9L1350.6 737.9L1350.6 739L1350 739.5L1350 739.5L1350 730L1351.4 730L1351.4 739.5L1351 738.6L1351.3 738.6L1351.3 731.5L1352.5 731.5L1352.5 738.6L1352 738.8L1352.2 738.8L1352.2 738.6L1353.6 738.6L1353.6 738.8L1353 739.5L1353.2 739.5L1353.2 706.8L1354.1 706.8L1354.1 739.5L1354 739.3L1354.2 739.3L1354.2 723.7L1355.2 723.7L1355.2 739.3L1355 740.3L1355 740.3L1355 725.9L1356.7 725.9L1356.7 740.3L1356 739.8L1356 739.8L1356 709.8L1356.5 709.8L1356.5 739.8L1356.3 739.8L1356.3 733.7L1357.7 733.7L1357.7 739.8L1357 739.9L1357.3 739.9L1357.3 728.6L1358.2 728.6L1358.2 739.9L1358 740.6L1358.2 740.6L1358.2 732.1L1359.9 732.1L1359.9 740.6L1359 739.6L1359.4 739.6L1359.4 711.3L1361.2 711.3L1361.2 739.6L1360 739.9L1360.4 739.9L1360.4 721.9L1361.8 721.9L1361.8 739.9L1361 739.5L1361.3 739.5L1361.3 735.2L1362.2 735.2L1362.2 739.5L1362 740.1L1363 740.6L1363.1 740.6L1363.1 722L1364 722L1364 740.6L1364 740.8L1364.2 740.8L1364.2 737.7L1365.5 737.7L1365.5 740.8L1365 740.2L1365.1 740.2L1365.1 721.2L1365.6 721.2L1365.6 740.2L1366 739.9L1366 739.9L1366 722.9L1367.7 722.9L1367.7 739.9L1367 740L1367.1 740L1367.1 728.1L1368.6 728.1L1368.6 740L1368 739.7L1369 740.6L1369 740.6L1369 730.7L1370.6 730.7L1370.6 740.6L1370 741.2L1370 741.2L1370 734L1371.1 734L1371.1 741.2L1371 739.4L1371.5 739.4L1371.5 729L1372.7 729L1372.7 739.4L1372 739.6L1372.3 739.6L1372.3 734.1L1373.7 734.1L1373.7 739.6L1373 741.5L1373.1 741.5L1373.1 715.8L1374.7 715.8L1374.7 741.5L1374 740L1374.3 740L1374.3 716.3L1375.8 716.3L1375.8 740L1375 741.1L1375.5 741.1L1375.5 714.9L1376 714.9L1376 741.1L1376 740.3L1377 741.4L1377.3 741.4L1377.3 733.2L1379 733.2L1379 741.4L1378 742L1378.5 770L1380 748L1380.7 774L1382.3 745L1383 768L1384.5 752L1385.2 772L1386.6 750L1387.3 770L1388.5 758L1389 768"/><path stroke="#f35ef3" d="M40 74L41.7 85L43.3 143L43.5 536L43.7 150L43.8 156.3L44 80L44.2 117.4L44.5 80L44.7 123.3L44.9 84.6L45.1 163.7L45.4 97.4L45.6 154.1L45.8 85L46 144.4L46.3 117.6L46.5 200.4L46.7 89.1L46.9 203.2L47.2 111.5L47.4 188.1L47.6 142.4L47.8 179.9L48.1 149.8L48.3 205L48.5 141.3L48.8 191.1L49 165.8L49.2 222.9L49.4 171.3L49.6 196.8L49.9 174.8L50.1 251.9L50.3 160.8L50.5 242.4L50.8 190.1L51 247.1L51.2 208.5L51.4 246.2L51.7 192.7L51.9 239.8L52.1 195.3L52.3 268.5L52.6 229.2L52.8 258.4L53 215.2L53.2 309L53.5 244.4L53.7 298.6L53.9 240.7L54.1 295.9L54.4 216.4L55.5 310L55 310L56 310.6L56.4 310.6L56.4 309.3L56.8 309.3L56.8 310.6L57 311.9L58 311.9L58.5 311.9L58.5 310.1L59.5 310.1L59.5 311.9L59 312.7L59 312.7L59 309.7L60 309.7L60 312.7L60 314.5L61 315.2L62 315.5L63 316.7L64 317.2L65 319.6L66 318.6L66.5 318.6L66.5 317.1L67.5 317.1L67.5 318.6L67 321L68 320.5L69 321.9L70 322.3L71 323L72 324.5L72.3 324.5L72.3 309.2L72.5 309.2L72.5 324.5L73 325.2L73.4 325.2L73.4 323.9L74 323.9L74 325.2L74 325.4L75 325.9L76 328.1L76.3 328.1L76.3 328.1L77.3 328.1L77.3 328.1L77 328.6L77.3 328.6L77.3 319.6L78.2 319.6L78.2 328.6L78 329L78.3 329L78.3 315.2L79.4 315.2L79.4 329L79 329.8L79.1 329.8L79.1 329.4L79.4 329.4L79.4 329.8L80 331.2L80.4 331.2L80.4 329L81.4 329L81.4 331.2L81 332.2L81.5 332.2L81.5 331.4L82.4 331.4L82.4 332.2L82 333.8L82.2 333.8L82.2 333.4L82.9 333.4L82.9 333.8L83 333.8L84 335.4L85 336.1L86 334.7L87 335L88 342.6L89 342.9L89.4 342.9L89.4 342.3L90.3 342.3L90.3 342.9L90 343.4L90.5 343.4L90.5 343.3L90.9 343.3L90.9 343.4L91 342.5L92 342.2L92.2 342.2L92.2 342L93.2 342L93.2 342.2L93 343.2L94 342.9L94.1 342.9L94.1 337L94.6 337L94.6 342.9L95 342.6L95 342.6L95 340.9L95.3 340.9L95.3 342.6L96 352.5L97 351.9L98 350.9L99 352L99.3 352L99.3 346.3L99.7 346.3L99.7 352L100 351.7L101 352.7L101.4 352.7L101.4 352.1L101.9 352.1L101.9 352.7L102 351.8L102.4 351.8L102.4 351.5L102.7 351.5L102.7 351.8L103 351.7L104 361.7L105 361.6L105.1 361.6L105.1 361.1L106.3 361.1L106.3 361.6L106 360.8L106.2 360.8L106.2 359.5L106.4 359.5L106.4 360.8L107 361.5L108 361.3L108.5 361.3L108.5 360.2L109.6 360.2L109.6 361.3L109 362.2L109.1 362.2L109.1 358.5L110.3 358.5L110.3 362.2L110 362.7L110.1 362.7L110.1 358.8L110.4 358.8L110.4 362.7L111 360.9L112 371.4L112.2 371.4L112.2 361.9L112.6 361.9L112.6 371.4L113 371.5L114 371.6L114.5 371.6L114.5 370.5L115.4 370.5L115.4 371.6L115 371.5L115.2 371.5L115.2 368.6L115.4 368.6L115.4 371.5L116 371.9L117 372.4L118 371.2L118.1 371.2L118.1 371.2L118.6 371.2L118.6 371.2L119 371.1L119.3 371.1L119.3 370.3L119.8 370.3L119.8 371.1L120 379L120.2 379L120.2 368.9L120.9 368.9L120.9 379L121 380.5L121.2 380.5L121.2 376.5L121.8 376.5L121.8 380.5L122 380.6L122.2 380.6L122.2 369.2L122.9 369.2L122.9 380.6L123 379.1L124 379.1L124.1 379.1L124.1 375.1L124.5 375.1L124.5 379.1L125 380L126 380.5L126.3 380.5L126.3 379.5L127.4 379.5L127.4 380.5L127 380.4L128 387.1L129 387.4L129.5 387.4L129.5 378.1L130.4 378.1L130.4 387.4L130 387.2L131 386.8L132 388L132.5 388L132.5 387.6L133.7 387.6L133.7 388L133 387L134 386.5L134.2 386.5L134.2 385.7L134.6 385.7L134.6 386.5L135 386.8L135 386.8L135 386.2L135.5 386.2L135.5 386.8L136 394.3L136.2 394.3L136.2 391.5L137.3 391.5L137.3 394.3L137 395.1L137.4 395.1L137.4 394.9L138.5 394.9L138.5 395.1L138 395.7L138.5 395.7L138.5 395.3L139.3 395.3L139.3 395.7L139 394.5L140 395.7L140.3 395.7L140.3 389.5L141.2 389.5L141.2 395.7L141 396.2L142 395.3L143 394.5L143.1 394.5L143.1 393.2L144.1 393.2L144.1 394.5L144 403.6L145 403.8L146 403.3L146.3 403.3L146.3 396.9L147.3 396.9L147.3 403.3L147 403.4L148 403.9L149 403.9L149.4 403.9L149.4 403.2L150.6 403.2L150.6 403.9L150 404.3L150.4 404.3L150.4 403.8L150.7 403.8L150.7 404.3L151 403.4L152 412.3L152.2 412.3L152.2 412.1L152.8 412.1L152.8 412.3L153 411.8L153.1 411.8L153.1 407.8L153.9 407.8L153.9 411.8L154 411.8L154.3 411.8L154.3 411.2L154.5 411.2L154.5 411.8L155 411L156 412.2L156.3 412.2L156.3 411.4L156.9 411.4L156.9 412.2L157 411.1L157.1 411.1L157.1 410L157.8 410L157.8 411.1L158 412.2L158.3 412.2L158.3 410.6L158.9 410.6L158.9 412.2L159 411.9L160 415.3L161 415.6L162 416.7L162.4 416.7L162.4 410.3L163 410.3L163 416.7L163 416.3L163.5 416.3L163.5 405.2L164.6 405.2L164.6 416.3L164 415.7L164 415.7L164 415.1L164.8 415.1L164.8 415.7L165 415.9L166 415.9L166.2 415.9L166.2 415.4L166.7 415.4L166.7 415.9L167 415.4L167.3 415.4L167.3 414L167.6 414L167.6 415.4L168 420.2L168.5 420.2L168.5 412.4L169 412.4L169 420.2L169 420L170 420.1L171 420.5L171.1 420.5L171.1 419.5L171.6 419.5L171.6 420.5L172 419.8L172.2 419.8L172.2 419.7L172.7 419.7L172.7 419.8L173 420.7L173.5 420.7L173.5 417.6L174.1 417.6L174.1 420.7L174 420.4L175 420.7L175.5 420.7L175.5 420.6L176.1 420.6L176.1 420.7L176 425.4L177 425.6L178 425.3L178.2 425.3L178.2 423.5L179.2 423.5L179.2 425.3L179 425.3L179.2 425.3L179.2 420.4L180.1 420.4L180.1 425.3L180 424.8L180.2 424.8L180.2 421.2L180.6 421.2L180.6 424.8L181 425.2L181.2 425.2L181.2 417.7L182.2 417.7L182.2 425.2L182 424.5L183 424.8L183.1 424.8L183.1 423.2L183.6 423.2L183.6 424.8L184 429.9L184.4 429.9L184.4 427.3L185.5 427.3L185.5 429.9L185 429.5L185.2 429.5L185.2 429L185.7 429L185.7 429.5L186 429.8L187 429L188 430.3L189 429.3L190 429.8L191 429.6L191.1 429.6L191.1 427.1L192.2 427.1L192.2 429.6L192 435L192.5 435L192.5 425.7L193.3 425.7L193.3 435L193 434.3L194 434L194.3 434L194.3 433.9L194.9 433.9L194.9 434L195 433.5L195.2 433.5L195.2 433.3L196.2 433.3L196.2 433.5L196 434.3L196.2 434.3L196.2 430.5L196.8 430.5L196.8 434.3L197 433.9L197.2 433.9L197.2 431.6L197.6 431.6L197.6 433.9L198 434.8L198.3 434.8L198.3 434.3L198.6 434.3L198.6 434.8L199 435.2L199.2 435.2L199.2 435L199.6 435L199.6 435.2L200 439.2L200.3 439.2L200.3 437.7L201 437.7L201 439.2L201 439.7L202 440.5L202.2 440.5L202.2 437.8L203.2 437.8L203.2 440.5L203 440.9L203.4 440.9L203.4 439.4L204.4 439.4L204.4 440.9L204 440.5L205 440.5L205.1 440.5L205.1 439.1L206 439.1L206 440.5L206 440.6L207 440.6L207.1 440.6L207.1 439.5L207.7 439.5L207.7 440.6L208 446.9L209 446.4L210 445.5L210.5 445.5L210.5 445.2L210.7 445.2L210.7 445.5L211 445.9L212 446.2L212.3 446.2L212.3 440.5L212.9 440.5L212.9 446.2L213 445.7L214 446L214.1 446L214.1 445.8L214.5 445.8L214.5 446L215 445.8L215.4 445.8L215.4 440.1L216.1 440.1L216.1 445.8L216 450.8L217 451.5L218 451L219 450.6L220 450.8L220 450.8L220 438L220.8 438L220.8 450.8L221 451.2L221.3 451.2L221.3 449.5L222.2 449.5L222.2 451.2L222 452.2L222.1 452.2L222.1 449.7L222.6 449.7L222.6 452.2L223 451.3L223.1 451.3L223.1 449.3L223.4 449.3L223.4 451.3L224 456.4L225 455.9L226 454.6L226.3 454.6L226.3 454.1L227 454.1L227 454.6L227 455.8L227.3 455.8L227.3 451L228 451L228 455.8L228 455.2L229 455L229.5 455L229.5 454.8L229.7 454.8L229.7 455L230 455.1L230.1 455.1L230.1 455.1L230.8 455.1L230.8 455.1L231 456.5L232 458.8L232.3 458.8L232.3 455.4L232.8 455.4L232.8 458.8L233 459.3L233.1 459.3L233.1 455.9L233.7 455.9L233.7 459.3L234 460.2L234.5 460.2L234.5 459.9L234.9 459.9L234.9 460.2L235 459.9L236 458.7L237 459.5L237.1 459.5L237.1 459.5L237.4 459.5L237.4 459.5L238 459.3L239 459.5L240 463L241 462.3L242 462.5L242.3 462.5L242.3 461.7L243.5 461.7L243.5 462.5L243 463.4L243 463.4L243 461.9L243.8 461.9L243.8 463.4L244 461.7L245 462.4L245.1 462.4L245.1 460L246.3 460L246.3 462.4L246 462.9L247 462L248 465.3L248.4 465.3L248.4 464.5L249.5 464.5L249.5 465.3L249 465L249.4 465L249.4 462.9L250.2 462.9L250.2 465L250 465.7L251 465.3L252 466.1L252.5 466.1L252.5 464.2L253 464.2L253 466.1L253 466.2L253.1 466.2L253.1 466L253.6 466L253.6 466.2L254 465.7L254.5 465.7L254.5 464.5L254.8 464.5L254.8 465.7L255 465.5L256 469.3L257 469.2L257.2 469.2L257.2 467.6L257.7 467.6L257.7 469.2L258 468.6L259 469.8L259.2 469.8L259.2 465.7L260.3 465.7L260.3 469.8L260 469.3L260.2 469.3L260.2 468.4L261.2 468.4L261.2 469.3L261 469.6L261.2 469.6L261.2 469.3L262.3 469.3L262.3 469.6L262 468.5L262.2 468.5L262.2 467.9L262.5 467.9L262.5 468.5L263 469.7L263.3 469.7L263.3 454.4L264.3 454.4L264.3 469.7L264 475.8L265 475L266 474L267 474.7L267.1 474.7L267.1 472.1L267.4 472.1L267.4 474.7L268 474.7L268.3 474.7L268.3 474.3L268.5 474.3L268.5 474.7L269 474.8L270 474.6L271 475L271.5 475L271.5 474.1L272.2 474.1L272.2 475L272 480L272.3 480L272.3 476L272.7 476L272.7 480L273 480.3L273 480.3L273 480.3L273.5 480.3L273.5 480.3L274 479.9L275 480.3L275.1 480.3L275.1 479.3L275.4 479.3L275.4 480.3L276 480.7L276.3 480.7L276.3 476.1L276.9 476.1L276.9 480.7L277 480L278 480.5L278.5 480.5L278.5 479.9L279.2 479.9L279.2 480.5L279 479.8L280 485.5L280.3 485.5L280.3 482.4L281.3 482.4L281.3 485.5L281.2 491.7L281.6 282L282 282.7L282.4 282.7L282.4 279.3L282.9 279.3L282.9 282.7L283 296.6L283.3 296.6L283.3 296.2L283.8 296.2L283.8 296.6L284 307.7L284.1 307.7L284.1 306L284.7 306L284.7 307.7L285 311.1L285.1 311.1L285.1 311L286.2 311L286.2 311.1L286 312.1L286.2 312.1L286.2 309.8L286.9 309.8L286.9 312.1L287 315.1L287.5 315.1L287.5 313.8L287.7 313.8L287.7 315.1L288 318L288.3 318L288.3 313.4L288.8 313.4L288.8 318L289 320.3L289.1 320.3L289.1 316.2L290.1 316.2L290.1 320.3L290 321.8L290.3 321.8L290.3 310.9L291 310.9L291 321.8L291 324.1L292 327.5L293 328.4L293 328.4L293 327L293.8 327L293.8 328.4L294 331.3L294.3 331.3L294.3 327.9L295.2 327.9L295.2 331.3L295 332.7L296 334.9L297 338.1L298 339.7L299 341.3L299.1 341.3L299.1 340.9L299.5 340.9L299.5 341.3L300 342.2L301 345L302 346.8L303 348.7L303.5 348.7L303.5 347.5L303.7 347.5L303.7 348.7L304 351.4L304.4 351.4L304.4 350L305.1 350L305.1 351.4L305 351.9L305.3 351.9L305.3 351.8L305.8 351.8L305.8 351.9L306 354.9L306.4 354.9L306.4 353.3L307.3 353.3L307.3 354.9L307 356.8L308 358.3L309 361.5L310 362.1L310.1 362.1L310.1 360L310.5 360L310.5 362.1L311 364.8L311.3 364.8L311.3 364.4L311.8 364.4L311.8 364.8L312 366.8L312.3 366.8L312.3 366.4L312.8 366.4L312.8 366.8L313 368.7L314 369.1L314.2 369.1L314.2 366.7L314.9 366.7L314.9 369.1L315 369.3L315.2 369.3L315.2 357.8L316.1 357.8L316.1 369.3L316 370.2L316.2 370.2L316.2 366.5L317 366.5L317 370.2L317 370.3L318 370.1L318.3 370.1L318.3 369.7L318.6 369.7L318.6 370.1L319 369.9L320 383.6L321 384.8L322 384.4L322.2 384.4L322.2 384.3L322.8 384.3L322.8 384.4L323 385.3L324 385.4L324.1 385.4L324.1 380.9L324.6 380.9L324.6 385.4L325 385.8L326 385L327 385.1L328 396.5L328.4 396.5L328.4 396.5L328.8 396.5L328.8 396.5L329 397.1L330 396.4L330.5 396.4L330.5 393.9L331.5 393.9L331.5 396.4L331 397.5L331.2 397.5L331.2 395.4L331.5 395.4L331.5 397.5L332 396.4L332.4 396.4L332.4 389.4L332.7 389.4L332.7 396.4L333 396.9L334 396.6L334.2 396.6L334.2 392.5L334.9 392.5L334.9 396.6L335 396.8L335.1 396.8L335.1 395.1L335.6 395.1L335.6 396.8L336 405.3L336.3 405.3L336.3 403.6L337.4 403.6L337.4 405.3L337 404.8L337.3 404.8L337.3 403.9L337.7 403.9L337.7 404.8L338 405.2L338.1 405.2L338.1 403.1L339.3 403.1L339.3 405.2L339 404.5L339.2 404.5L339.2 403.5L339.8 403.5L339.8 404.5L340 405.7L341 404.7L342 405.6L342.2 405.6L342.2 393.9L342.5 393.9L342.5 405.6L343 406.1L344 415L344.1 415L344.1 401.8L344.8 401.8L344.8 415L345 415.7L346 416.1L346.1 416.1L346.1 414.1L346.7 414.1L346.7 416.1L347 416.8L347.2 416.8L347.2 416.2L348.1 416.2L348.1 416.8L348 416L349 416.4L350 415.9L350.4 415.9L350.4 408.2L351.3 408.2L351.3 415.9L351 416.5L352 427.6L352.2 427.6L352.2 421.5L353.3 421.5L353.3 427.6L353 428.7L353 428.7L353 427L353.8 427L353.8 428.7L354 426.7L355 427.3L355.4 427.3L355.4 423.3L355.7 423.3L355.7 427.3L356 429.2L356.2 429.2L356.2 427.5L357.1 427.5L357.1 429.2L357 428.3L357 428.3L357 425L357.6 425L357.6 428.3L358 427.8L358 427.8L358 359.8L358.8 359.8L358.8 427.8L359 429.3L360 432.5L360 432.5L360 390L361 390L361 432.5L361 432.6L361.2 432.6L361.2 430.9L362 430.9L362 432.6L362 431.8L362 431.8L362 431.1L362.3 431.1L362.3 431.8L363 432.3L363 432.3L363 398.3L364 398.3L364 432.3L364 432.3L364.5 432.3L364.5 428.8L365.5 428.8L365.5 432.3L365 431.2L365.1 431.2L365.1 430.6L365.4 430.6L365.4 431.2L366 432.3L366 432.3L366 394L367 394L367 432.3L367 431.9L368 433.4L369 433.4L369.2 433.4L369.2 429.3L369.5 429.3L369.5 433.4L370 432.4L370 432.4L370 402.6L371 402.6L371 432.4L370 432.4L370 431.8L370.7 431.8L370.7 432.4L371 432.4L371.3 432.4L371.3 424.2L371.9 424.2L371.9 432.4L372 432.8L373 433.1L374 432.5L375 432.7L376 445.3L376.1 445.3L376.1 444.5L376.4 444.5L376.4 445.3L377 445.3L378 445.6L378.4 445.6L378.4 445.5L379.6 445.5L379.6 445.6L379 445.2L379.1 445.2L379.1 445L380.1 445L380.1 445.2L380 444.6L380.3 444.6L380.3 444.5L381.1 444.5L381.1 444.6L381 444.1L382 445.4L383 444.9L383.3 444.9L383.3 444.3L383.7 444.3L383.7 444.9L384 460.3L384.1 460.3L384.1 458.1L385.3 458.1L385.3 460.3L385 460.3L386 459.7L386.2 459.7L386.2 458.2L386.4 458.2L386.4 459.7L387 460.3L387.3 460.3L387.3 460.1L387.6 460.1L387.6 460.3L388 459.1L389 460.3L390 460L390.1 460L390.1 453.8L390.8 453.8L390.8 460L391 461.4L391 461.4L391 460.8L391.9 460.8L391.9 461.4L392 467.5L392.2 467.5L392.2 464.7L392.7 464.7L392.7 467.5L393 467.1L394 467.3L395 467.6L396 466.9L396.3 466.9L396.3 462.9L396.9 462.9L396.9 466.9L397 467.1L397.5 467.1L397.5 465.2L398 465.2L398 467.1L398 467.1L398.2 467.1L398.2 466.6L398.5 466.6L398.5 467.1L399 468.5L399.2 468.5L399.2 463.7L400.2 463.7L400.2 468.5L400 472.9L400 472.9L400 472.3L400.3 472.3L400.3 472.9L401 471.9L402 473.3L402.3 473.3L402.3 472.3L402.7 472.3L402.7 473.3L403 474.2L404 472.4L404.1 472.4L404.1 469.6L404.9 469.6L404.9 472.4L405 474.7L405.2 474.7L405.2 472.5L406.1 472.5L406.1 474.7L406 472.9L406 472.9L406 470.3L406.3 470.3L406.3 472.9L407 473.4L407.3 473.4L407.3 473.1L408.1 473.1L408.1 473.4L408 478.4L409 478.5L409.2 478.5L409.2 470.7L409.7 470.7L409.7 478.5L410 478L410 478L410 477.1L411.2 477.1L411.2 478L411 478.1L411.3 478.1L411.3 474.2L412.1 474.2L412.1 478.1L412 477.6L412.1 477.6L412.1 473.7L413.1 473.7L413.1 477.6L413 479.3L413.2 479.3L413.2 477.2L414 477.2L414 479.3L414 478.1L415 478.9L416 485.7L416.3 485.7L416.3 483.2L416.8 483.2L416.8 485.7L417 485.2L418 485.5L419 485.5L419.5 485.5L419.5 484.8L420.1 484.8L420.1 485.5L420 485.3L421 485.5L422 485.5L422 485.5L422 484.1L422.3 484.1L422.3 485.5L423 485L424 491.6L424.3 491.6L424.3 485L424.9 485L424.9 491.6L425 491.8L426 492.3L427 493L427.5 493L427.5 492.1L428 492.1L428 493L428 493L428.5 493L428.5 485.2L429.4 485.2L429.4 493L429 492.4L429.4 492.4L429.4 486.4L430.4 486.4L430.4 492.4L430 492.8L431 492.3L432 498.1L432.2 498.1L432.2 496.8L433.1 496.8L433.1 498.1L433 497.6L434 497.7L435 497.4L436 497.5L437 498.5L438 496.9L439 497.5L440 500.7L440.2 500.7L440.2 500.7L441.2 500.7L441.2 500.7L441 501.5L441.3 501.5L441.3 500.2L442.4 500.2L442.4 501.5L442 501.9L443 500.8L443.2 500.8L443.2 497.6L443.9 497.6L443.9 500.8L444 499.6L445 501.3L446 501.3L446.2 501.3L446.2 490.6L447.2 490.6L447.2 501.3L447 500.1L448 506L449 506L449.1 506L449.1 500.8L450 500.8L450 506L450 504.9L450.4 504.9L450.4 503.9L451.4 503.9L451.4 504.9L451 506.4L451 506.4L451 506.3L451.4 506.3L451.4 506.4L452 506.3L452.4 506.3L452.4 504.6L453.3 504.6L453.3 506.3L453 506.2L454 505.5L455 505.7L456 511.3L456.3 511.3L456.3 510.4L457.3 510.4L457.3 511.3L457 511.9L458 511.1L458.3 511.1L458.3 510.6L458.8 510.6L458.8 511.1L459 512.4L459.1 512.4L459.1 512.3L459.5 512.3L459.5 512.4L460 511.8L460 511.8L460 509.3L460.5 509.3L460.5 511.8L461 510.5L461.2 510.5L461.2 507.1L461.5 507.1L461.5 510.5L462 512.5L462.3 512.5L462.3 510L463.2 510L463.2 512.5L463 511.7L464 517.9L465 518.3L465.3 518.3L465.3 513.6L465.8 513.6L465.8 518.3L466 517.3L466.1 517.3L466.1 514.2L466.7 514.2L466.7 517.3L467 518.3L468 516.9L468.2 516.9L468.2 513.2L468.5 513.2L468.5 516.9L469 517.7L469.1 517.7L469.1 510.7L470.3 510.7L470.3 517.7L470 518.9L471 518.9L471.1 518.9L471.1 516.1L471.7 516.1L471.7 518.9L472 523.8L472.5 523.8L472.5 523L472.9 523L472.9 523.8L473 523.5L473.4 523.5L473.4 523.3L473.7 523.3L473.7 523.5L474 524.4L475 523.9L475.5 523.9L475.5 522.5L475.9 522.5L475.9 523.9L476 524.1L477 524.3L477.3 524.3L477.3 520.6L478 520.6L478 524.3L478 523.4L479 524.4L479.1 524.4L479.1 523.9L479.7 523.9L479.7 524.4L480 527.8L480.2 527.8L480.2 523.8L480.7 523.8L480.7 527.8L481 529.7L481 529.7L481 529.6L481.5 529.6L481.5 529.7L482 528.1L483 528.6L483 528.6L483 526.6L484.1 526.6L484.1 528.6L484 528.6L484.1 528.6L484.1 527.8L484.5 527.8L484.5 528.6L485 529.3L486 529.3L486.3 529.3L486.3 528.2L486.8 528.2L486.8 529.3L487 529.1L487.1 529.1L487.1 521.1L488 521.1L488 529.1L488 532.8L488.3 532.8L488.3 532L489.3 532L489.3 532.8L489 532.7L489.8 531.4L490.2 410.4L490.4 410.4L491.4 415.4L491.5 415.4L491.5 411.3L492.1 411.3L492.1 415.4L492.4 421.2L493.4 425.9L494.4 429.6L495.4 432.1L496.4 434.8L497.4 434.8L497.4 434.4L497.8 434.4L497.8 434.8L497.4 437.6L498.4 439.3L499.1 439.3L499.1 436L500.1 436L500.1 439.3L499.4 439.8L500.4 440.5L501.4 441.3L502.2 441.3L502.2 439.8L503.1 439.8L503.1 441.3L502.4 443.8L503.4 444.6L504.4 444.4L505.4 445.9L505.5 445.9L505.5 443.3L505.9 443.3L505.9 445.9L506 445.9L506 444.5L507.1 444.5L507.1 445.9L506.4 447.2L507.4 448.8L508.3 448.8L508.3 444.4L508.9 444.4L508.9 448.8L508.4 448.6L509.4 450.1L510.4 451.8L511.4 451.4L512.4 453.1L513.4 454.6L513.5 454.6L513.5 451.1L514.6 451.1L514.6 454.6L514.4 455.4L515.4 458L516.4 458.5L517.4 459.3L518.4 459.8L518.4 459.8L518.4 459.2L519.1 459.2L519.1 459.8L519.4 461.7L520.4 461.7L520.4 461.6L520.9 461.6L520.9 461.7L520.4 462.2L521.4 464.3L522.2 464.3L522.2 461.5L522.6 461.5L522.6 464.3L522.4 464.4L523.4 463.8L524.4 464.6L524.4 464.6L524.4 459.6L525.1 459.6L525.1 464.6L525.4 465.1L526.2 465.1L526.2 463.7L527.1 463.7L527.1 465.1L526.4 465.1L527.4 464.9L528.4 469.8L529.4 469L530.3 469L530.3 469L531.1 469L531.1 469L530.4 469.1L531.4 470L532.4 469.6L533.3 469.6L533.3 467L534.5 467L534.5 469.6L533.4 468.9L534 468.9L534 467.6L534.7 467.6L534.7 468.9L534.4 469.6L535.4 469.8L536.2 469.8L536.2 461L536.7 461L536.7 469.8L536.4 475.7L537.1 475.7L537.1 475.7L538 475.7L538 475.7L537.4 475.4L538.2 475.4L538.2 475L538.5 475L538.5 475.4L538.4 475.1L539.2 475.1L539.2 472.9L539.6 472.9L539.6 475.1L539.4 475.6L540.4 476.2L541.4 475.4L542.4 475L543.4 475.5L544.3 475.5L544.3 466L544.9 466L544.9 475.5L544.4 481.6L545.4 482.4L546.4 482.1L546.5 482.1L546.5 480.7L547 480.7L547 482.1L547.4 482.8L547.4 482.8L547.4 482.2L547.7 482.2L547.7 482.8L548.1 482.8L548.1 482.5L548.3 482.5L548.3 482.8L548.4 482.3L549.4 482.8L550.4 483.5L551.4 482.2L552.4 487.7L552.4 487.7L552.4 484L553.4 484L553.4 487.7L553.3 487.7L553.3 486.5L554.1 486.5L554.1 487.7L553.4 488.4L554.4 488.1L555.4 488.2L556.4 487.9L557.4 488.5L558.3 488.5L558.3 488.2L559.3 488.2L559.3 488.5L558.4 488.2L559.4 487L560.4 497.1L561.3 497.1L561.3 496.6L562.4 496.6L562.4 497.1L561.4 497.4L562.4 497.9L563.4 496.9L563.4 496.9L563.4 496.3L564.4 496.3L564.4 496.9L564.4 496.8L564.5 496.8L564.5 494.4L564.9 494.4L564.9 496.8L565.4 497.8L565.4 497.8L565.4 497.4L566.3 497.4L566.3 497.8L566 497.8L566 476.6L566.5 476.6L566.5 497.8L566.4 496.9L567.2 496.9L567.2 495.1L567.5 495.1L567.5 496.9L567.4 497.3L568.4 503.6L569.4 503.7L570.4 503.3L570.5 503.3L570.5 502.9L570.9 502.9L570.9 503.3L571.4 502.8L572.4 503.9L573.1 503.9L573.1 501.5L573.8 501.5L573.8 503.9L573.4 503.1L574.4 503.1L575.4 504.4L576.4 510.5L577.4 509.5L578.2 509.5L578.2 502.3L579.3 502.3L579.3 509.5L578.4 509.8L579.4 509.9L580.3 509.9L580.3 509.4L581.4 509.4L581.4 509.9L580.4 509.7L581.4 509.1L582.3 509.1L582.3 508.6L582.6 508.6L582.6 509.1L582.4 510.5L583.4 510.5L584.4 516.8L585.4 516.4L586.4 516.8L587.4 517L588.4 516.1L589 516.1L589 490.6L589.5 490.6L589.5 516.1L589.3 516.1L589.3 515.4L589.9 515.4L589.9 516.1L589.4 516.5L590.4 516.4L590.5 516.4L590.5 514.4L591.1 514.4L591.1 516.4L591.4 517L592.4 522.6L593.4 521.8L594.4 522.1L595.4 523.4L596.3 523.4L596.3 522.8L597.1 522.8L597.1 523.4L596.4 522L597.4 522.5L598.4 522.1L599.4 523.1L600.4 523.1L600.4 521.2L600.6 521.2L600.6 523.1L600.4 529.6L601.4 529.4L601.5 529.4L601.5 528.7L601.8 528.7L601.8 529.4L602.4 529L603 529L603 521.6L603.9 521.6L603.9 529L603.4 529.5L604.4 530L605.1 530L605.1 525.1L605.6 525.1L605.6 530L605.4 530L606.2 530L606.2 522.3L606.9 522.3L606.9 530L606.4 528.9L607.4 530.4L608.4 536.7L609.3 536.7L609.3 524L609.7 524L609.7 536.7L609.4 536.3L610.4 536.9L611.3 536.9L611.3 536.5L611.9 536.5L611.9 536.9L611.4 536.5L612.4 536.5L612.4 536.5L612.4 518.1L612.7 518.1L612.7 536.5L613.4 536.5L614.4 536.8L614.4 536.8L614.4 520.5L615.5 520.5L615.5 536.8L615 536.8L615 529.4L615.5 529.4L615.5 536.8L615.4 536.5L616.2 536.5L616.2 533.7L617.2 533.7L617.2 536.5L616.4 542.7L617.4 543.9L618.1 543.9L618.1 534L619.3 534L619.3 543.9L618.4 543.3L619.1 543.3L619.1 543.2L619.6 543.2L619.6 543.3L619.4 544.2L620.2 544.2L620.2 543.4L620.5 543.4L620.5 544.2L620.4 544.4L621.4 544.4L621.4 538.4L622 538.4L622 544.4L621.4 545.2L622 545.2L622 540.3L622.5 540.3L622.5 545.2L622.4 545.8L623.1 545.8L623.1 545.5L623.5 545.5L623.5 545.8L623.4 547.2L624.4 547.2L625.1 547.2L625.1 547.1L625.5 547.1L625.5 547.2L625.4 547.5L626.2 547.5L626.2 540.5L627.2 540.5L627.2 547.5L626.4 548.7L627.4 547.6L628.4 547.6L628.4 542.7L629.1 542.7L629.1 547.6L628.4 549.3L629.4 550.1L630.4 550.2L631.3 550.2L631.3 539.5L632.3 539.5L632.3 550.2L631.4 551.6L632 551.6L632 547.1L632.6 547.1L632.6 551.6L632.4 551.8L633 551.8L633 551.4L633.5 551.4L633.5 551.8L633.4 552L634 552L634 526.5L634.5 526.5L634.5 552L634.4 552.2L634.5 552.2L634.5 551.9L635.6 551.9L635.6 552.2L635.1 552.2L635.1 545.4L636 545.4L636 552.2L635.4 553.5L636.2 553.5L636.2 553.4L637.2 553.4L637.2 553.5L636.4 553.2L637.1 553.2L637.1 552.4L637.4 552.4L637.4 553.2L637.4 553.9L638.2 553.9L638.2 548.9L639.3 548.9L639.3 553.9L638.4 555.2L639.4 555.7L640.4 557.1L641.3 557.1L641.3 547.9L641.7 547.9L641.7 557.1L641.4 556.6L642.4 556.4L642.4 556.4L642.4 554.9L643.1 554.9L643.1 556.4L643.4 558.3L644.4 559.3L645.4 559.2L645.5 559.2L645.5 555.9L645.7 555.9L645.7 559.2L646.4 560.7L646.4 560.7L646.4 558.1L647.3 558.1L647.3 560.7L647.4 561.4L648 561.4L648 561L649 561L649 561.4L648.4 560.8L648.6 560.8L648.6 536.2L649.1 536.2L649.1 560.8L649.1 560.8L649.1 560.8L649.9 560.8L649.9 560.8L649.4 561.5L650.4 561.8L650.4 561.8L650.4 532.5L650.9 532.5L650.9 561.8L651.4 561.8L651.4 561.5L652.1 561.5L652.1 561.8L651.4 563.4L652.4 564.1L653.1 564.1L653.1 556.7L654.3 556.7L654.3 564.1L653.4 564.7L654.4 564.3L655.1 564.3L655.1 560.2L655.5 560.2L655.5 564.3L655.4 565.2L656.4 565.6L657.4 566.2L658.4 567.1L659 567.1L659 566.5L660.2 566.5L660.2 567.1L659.4 567.7L660.4 569.2L660.5 569.2L660.5 566.2L661.2 566.2L661.2 569.2L661.4 570.2L662 570.2L662 564L662.6 564L662.6 570.2L662.4 571L663.4 571.5L664.4 571.9L665.4 572.9L666.3 572.9L666.3 572.7L667.1 572.7L667.1 572.9L666.4 574L667.4 574.3L668.4 574.3L668.4 563.8L668.7 563.8L668.7 574.3L668.4 575.2L669.4 575.7L670.4 576.4L671.1 576.4L671.1 574.4L671.5 574.4L671.5 576.4L671.4 577.4L672.4 577.5L673.3 577.5L673.3 572.2L673.6 572.2L673.6 577.5L673.4 579.4L674 579.4L674 574.8L674.8 574.8L674.8 579.4L674.4 578.8L675.4 580.6L676.4 580.4L676.5 580.4L676.5 579.9L677.4 579.9L677.4 580.4L677 580.4L677 548.9L677.5 548.9L677.5 580.4L677.1 580.4L677.1 575.7L677.6 575.7L677.6 580.4L677.4 582.5L678.1 582.5L678.1 581L679.2 581L679.2 582.5L678.4 582.8L679.4 582.5L680.4 583.3L680.5 583.3L680.5 579L681.5 579L681.5 583.3L681.4 583.3L681.4 578.5L682.5 578.5L682.5 583.3L681.4 583.5L682.4 584.6L682.5 584.6L682.5 581.8L683.6 581.8L683.6 584.6L683.4 585.4L683.5 585.4L683.5 581.9L684.4 581.9L684.4 585.4L684.4 587.1L685.4 585.7L685.4 585.7L685.4 579L686.5 579L686.5 585.7L686.3 585.7L686.3 579.1L687.3 579.1L687.3 585.7L686.4 587.6L687 587.6L687 584.7L687.3 584.7L687.3 587.6L687.4 587.3L688.4 588.3L688.5 588.3L688.5 575.1L688.8 575.1L688.8 588.3L689.4 589.2L690.4 589.2L690.4 584.6L690.6 584.6L690.6 589.2L690.4 589.6L691.2 589.6L691.2 585.2L691.8 585.2L691.8 589.6L691.4 590.1L692.4 590.4L692.4 590.4L692.4 586.6L693.6 586.6L693.6 590.4L693.4 591.1L694.1 591.1L694.1 584.5L694.6 584.5L694.6 591.1L694.4 591.7L695 591.7L695 571.3L695.5 571.3L695.5 591.7L695.3 591.7L695.3 581.4L695.9 581.4L695.9 591.7L695.4 592.8L696.3 592.8L696.3 591.5L696.6 591.5L696.6 592.8L696.4 592L697.2 592L697.2 587.2L697.6 587.2L697.6 592L697.4 593.1L698.1 593.1L698.1 585.6L698.4 585.6L698.4 593.1L698.4 593.2L699.4 593.9L699.4 593.9L699.4 593.1L700.4 593.1L700.4 593.9L700.4 594.6L701.3 594.6L701.3 588.2L701.6 588.2L701.6 594.6L701.4 596.1L702 596.1L702 579.7L703.1 579.7L703.1 596.1L702.4 597.2L703.4 597.3L703.5 597.3L703.5 594.1L704.1 594.1L704.1 597.3L704.4 596.6L705.1 596.6L705.1 583L705.4 583L705.4 596.6L705.4 597.8L706.1 597.8L706.1 595.6L707.1 595.6L707.1 597.8L706.4 597.7L707.4 599.1L708.4 600L709.2 600L709.2 598.4L710.1 598.4L710.1 600L709.4 600.2L710.3 600.2L710.3 596.8L710.6 596.8L710.6 600.2L710.4 600.9L711.4 601L712.2 601L712.2 597.9L712.9 597.9L712.9 601L712.4 600.6L713.4 600.6L713.4 598.7L714.5 598.7L714.5 600.6L713.4 601.1L714.4 602.6L715.4 603.5L715.5 603.5L715.5 599.4L715.7 599.4L715.7 603.5L716.4 604.4L717.4 604.2L718.1 604.2L718.1 600.2L718.9 600.2L718.9 604.2L718.4 604.9L719.3 604.9L719.3 592.2L719.6 592.2L719.6 604.9L719.4 605.6L720.4 606.7L720.5 606.7L720.5 595.2L721.2 595.2L721.2 606.7L721.3 606.7L721.3 596.8L722.4 596.8L722.4 606.7L721.4 606.7L722.4 606.8L723.1 606.8L723.1 606L723.7 606L723.7 606.8L723.4 608.6L724 608.6L724 603.7L724.8 603.7L724.8 608.6L724.4 608.9L725.2 608.9L725.2 601.5L726.2 601.5L726.2 608.9L725.4 609.5L726.4 609.2L726.4 609.2L726.4 591.3L727.5 591.3L727.5 609.2L727.4 610.5L728.4 610.5L728.4 605.6L729.2 605.6L729.2 610.5L728.4 610.3L729.4 610.7L730.4 610.7L730.4 610.2L730.6 610.2L730.6 610.7L730.4 612.3L731 612.3L731 611.3L731.3 611.3L731.3 612.3L731.4 612.8L732 612.8L732 612.6L732.6 612.6L732.6 612.8L732.4 614L733.4 615L734.4 614.9L735 614.9L735 610.4L735.4 610.4L735.4 614.9L735.4 616.5L736.4 615.9L737.4 617.2L738.4 616.8L738.4 616.8L738.4 615.3L738.9 615.3L738.9 616.8L739 616.8L739 598.1L739.5 598.1L739.5 616.8L739.4 618.1L740.1 618.1L740.1 611.6L740.8 611.6L740.8 618.1L740.4 618.3L741.4 618.9L742.4 619.8L743.1 619.8L743.1 619.6L743.4 619.6L743.4 619.8L743.4 619L744.4 620.6L745.4 620.6L745.5 620.6L745.5 616.3L746.3 616.3L746.3 620.6L746.2 620.6L746.2 608.8L746.7 608.8L746.7 620.6L746.4 621.6L747.1 621.6L747.1 619.6L748.2 619.6L748.2 621.6L747.4 622.2L748.1 622.2L748.1 620.6L748.5 620.6L748.5 622.2L748.4 622.3L749.2 622.3L749.2 620.6L750.1 620.6L750.1 622.3L749.4 622.8L750.4 622.9L751.2 622.9L751.2 620.3L752.2 620.3L752.2 622.9L751.4 624.3L752.1 624.3L752.1 619.2L753.2 619.2L753.2 624.3L752.4 624.2L753.4 625.2L753.5 625.2L753.5 621.1L753.8 621.1L753.8 625.2L754.4 624.8L754.5 624.8L754.5 623.1L755.3 623.1L755.3 624.8L755.3 624.8L755.3 623L755.5 623L755.5 624.8L755.4 626.7L756.1 626.7L756.1 625.7L757.2 625.7L757.2 626.7L756.4 626L757.2 626L757.2 620.9L758 620.9L758 626L757.4 627.6L758.4 627.3L759.4 628.3L760.2 628.3L760.2 625.5L761.2 625.5L761.2 628.3L760.4 628.4L761.3 628.4L761.3 620L761.8 620L761.8 628.4L761.4 629.3L762.4 629.5L762.4 629.5L762.4 625.3L762.9 625.3L762.9 629.5L763.2 629.5L763.2 622.1L763.9 622.1L763.9 629.5L763.4 630.7L764.4 630.8L764.5 630.8L764.5 629.7L765.6 629.7L765.6 630.8L765 630.8L765 608.5L765.6 608.5L765.6 630.8L765.4 631.4L766.2 631.4L766.2 630.3L766.4 630.3L766.4 631.4L766.4 632.5L767 632.5L767 625.9L767.4 625.9L767.4 632.5L767.4 631.8L768.4 633.4L769.2 633.4L769.2 631.3L769.9 631.3L769.9 633.4L769.4 633.3L770.4 633.1L771.4 634.7L772.4 634.9L772.5 634.9L772.5 628.7L773.4 628.7L773.4 634.9L773.4 634.9L773.4 629.5L774.1 629.5L774.1 634.9L773.4 636.4L774.4 635.9L775.4 636.7L776.3 636.7L776.3 626.1L777 626.1L777 636.7L776.4 637.4L777.4 636.9L777.5 636.9L777.5 630.5L778.6 630.5L778.6 636.9L778.4 638.7L779.2 638.7L779.2 628.9L779.7 628.9L779.7 638.7L779.4 638.5L780.4 640.3L781.4 641L782 641L782 630.8L782.5 630.8L782.5 641L782.4 640.7L782.4 640.7L782.4 637.8L783.6 637.8L783.6 640.7L783.4 640.4L784.4 641.9L785.4 642.5L786.4 643.3L787.4 643.4L787.4 643.4L787.4 642.3L787.8 642.3L787.8 643.4L788.4 643.5L789.3 643.5L789.3 633.7L789.5 633.7L789.5 643.5L789.4 644.6L790.4 644.7L791.1 644.7L791.1 640.6L792.3 640.6L792.3 644.7L791.4 646.4L792.4 645.5L793.4 645.9L794.3 645.9L794.3 643.4L794.6 643.4L794.6 645.9L794.4 646.5L795 646.5L795 646.5L795.6 646.5L795.6 646.5L795.4 646.3L796.1 646.3L796.1 642.9L797.2 642.9L797.2 646.3L796.4 647L797.4 647.5L798.4 647.7L799.3 647.7L799.3 633L799.7 633L799.7 647.7L799.4 648.2L800.4 649.3L801.4 649.3L801.4 648.7L801.8 648.7L801.8 649.3L801.4 649.2L802.4 648.7L803.1 648.7L803.1 646.3L804.1 646.3L804.1 648.7L803.4 649.5L804.1 649.5L804.1 645.8L804.3 645.8L804.3 649.5L804.4 650.4L805.1 650.4L805.1 649.6L806 649.6L806 650.4L805.4 650.1L806.3 650.1L806.3 601.6L806.8 601.6L806.8 650.1L806.4 650.8L806.4 650.8L806.4 649.5L807.2 649.5L807.2 650.8L807.4 651.1L808.3 651.1L808.3 644.4L809.3 644.4L809.3 651.1L808.4 651.7L809.1 651.7L809.1 650.8L809.5 650.8L809.5 651.7L809.4 651.7L810.4 651.7L810.4 651.1L810.9 651.1L810.9 651.7L810.4 652.1L811 652.1L811 650.5L811.6 650.5L811.6 652.1L811.4 652.1L812.3 652.1L812.3 651.3L813 651.3L813 652.1L812.4 653.1L813.3 653.1L813.3 650.9L814.2 650.9L814.2 653.1L813.4 652.7L814.1 652.7L814.1 650.2L815 650.2L815 652.7L814.4 654.5L815.4 654.5L815.4 649.1L816.3 649.1L816.3 654.5L815.4 653.9L816.4 654.2L816.5 654.2L816.5 653L817.1 653L817.1 654.2L817.3 654.2L817.3 653.2L818.3 653.2L818.3 654.2L817.4 655L818.4 654.9L819.2 654.9L819.2 653.4L819.8 653.4L819.8 654.9L819.4 655.4L820.4 655.7L821 655.7L821 650.5L821.4 650.5L821.4 655.7L821.4 655.7L822.4 655.7L822.4 655.1L823.3 655.1L823.3 655.7L822.4 655.9L823.2 655.9L823.2 654.6L823.8 654.6L823.8 655.9L823.4 656.4L824.4 657.7L825.4 657.1L826.4 657.6L827.1 657.6L827.1 639L827.8 639L827.8 657.6L827.4 657.9L828.3 657.9L828.3 657.6L829.3 657.6L829.3 657.9L828.4 658.8L829.2 658.8L829.2 657.5L829.7 657.5L829.7 658.8L829.4 659.9L830.4 658.7L831 658.7L831 655.9L831.6 655.9L831.6 658.7L831.4 659.8L832.4 660L833.4 660.1L834.4 660.9L835.1 660.9L835.1 656.3L835.4 656.3L835.4 660.9L835.4 660.3L836.2 660.3L836.2 657.2L837.2 657.2L837.2 660.3L836.4 661.7L837.4 661.8L838.2 661.8L838.2 657.5L838.9 657.5L838.9 661.8L838.4 661.5L839 661.5L839 660.8L839.9 660.8L839.9 661.5L839.4 663.2L840.4 663.1L841.4 663.7L842.3 663.7L842.3 663.1L843.2 663.1L843.2 663.7L842.4 662.7L843.4 663.6L844.4 663.8L844.5 663.8L844.5 658L845.6 658L845.6 663.8L845.1 663.8L845.1 661.4L845.3 661.4L845.3 663.8L845.4 664.8L846.4 664.8L846.4 632.1L846.7 632.1L846.7 664.8L846.4 665.5L847.4 664.2L848.2 664.2L848.2 663.2L849.2 663.2L849.2 664.2L848.4 665.5L849.4 665.8L850.4 666.7L850.5 666.7L850.5 665.9L851.6 665.9L851.6 666.7L851.2 666.7L851.2 652.3L851.5 652.3L851.5 666.7L851.4 666.6L852.4 666.6L852.4 664.7L853.2 664.7L853.2 666.6L852.4 666.3L853.4 667.2L854.1 667.2L854.1 665L854.7 665L854.7 667.2L854.4 667.1L855.4 667.6L855.5 667.6L855.5 657.9L856.3 657.9L856.3 667.6L856.3 667.6L856.3 666.3L857.2 666.3L857.2 667.6L856.4 668.4L857.4 668.4L858.4 669.2L859.4 668.6L860.1 668.6L860.1 662.9L860.3 662.9L860.3 668.6L860.4 670.9L861.3 670.9L861.3 670.9L862.2 670.9L862.2 670.9L861.4 670.7L862.1 670.7L862.1 667.2L862.6 667.2L862.6 670.7L862.4 670.8L863.3 670.8L863.3 663L864.1 663L864.1 670.8L863.4 670.1L864.2 670.1L864.2 665.6L865.2 665.6L865.2 670.1L864.4 670.1L865.1 670.1L865.1 668.5L865.5 668.5L865.5 670.1L865.4 671.1L866.4 671.1L866.4 667.1L866.8 667.1L866.8 671.1L866.4 671.9L867.2 671.9L867.2 666L867.7 666L867.7 671.9L867.4 673.6L868.4 673.5L868.5 673.5L868.5 665.9L869 665.9L869 673.5L869.1 673.5L869.1 661.7L870.1 661.7L870.1 673.5L869.4 673L870.2 673L870.2 662L871.4 662L871.4 673L870.4 674.3L871.1 674.3L871.1 668.1L871.8 668.1L871.8 674.3L871.4 674.7L872.4 674.5L873.1 674.5L873.1 673.6L873.9 673.6L873.9 674.5L873.4 675.5L874.4 675.5L874.4 673L875.5 673L875.5 675.5L874.4 675.5L875.4 675.4L876.4 675.4L876.4 671L877.4 671L877.4 675.4L876.4 675.6L877.4 676.5L878.4 677.5L879.3 677.5L879.3 670.4L880.4 670.4L880.4 677.5L879.4 676.7L880.4 677L881.4 678.5L882.4 677.3L883.2 677.3L883.2 675.9L884.3 675.9L884.3 677.3L883.4 680L884.4 679.3L885.4 680.3L886.4 681.3L887.4 680L888.4 680.6L889.4 680.6L889.4 650.8L890.3 650.8L890.3 680.6L889.4 682.7L890.3 682.7L890.3 679.6L891.1 679.6L891.1 682.7L890.4 681.9L891.3 681.9L891.3 680.9L891.7 680.9L891.7 681.9L891.4 682.4L892.4 682.4L892.4 681.8L892.8 681.8L892.8 682.4L892.4 682.9L893.4 676.9L894.1 676.9L894.1 675.6L895 675.6L895 676.9L894.4 673.9L895.4 673.6L896.1 673.6L896.1 658.3L896.7 658.3L896.7 673.6L896.4 673.8L897.4 674.3L897.5 674.3L897.5 671.8L897.8 671.8L897.8 674.3L898.4 674.8L899.4 675.7L900.3 675.7L900.3 671.5L900.8 671.5L900.8 675.7L900.4 675.4L901 675.4L901 642.8L901.9 642.8L901.9 675.4L901.4 676.6L902.4 676.6L902.4 672.3L902.7 672.3L902.7 676.6L902.4 675.6L903 675.6L903 672.2L904.1 672.2L904.1 675.6L903.4 676.6L904.4 677.6L905.4 677.7L906.3 677.7L906.3 674.8L906.7 674.8L906.7 677.7L906.4 677.6L907.4 677.6L907.4 673L907.9 673L907.9 677.6L907.4 677.3L908.4 677.7L909.2 677.7L909.2 674.6L909.8 674.6L909.8 677.7L909.4 678.4L910.4 679L911.4 679L911.5 679L911.5 678.5L912.3 678.5L912.3 679L912 679L912 675.5L913.2 675.5L913.2 679L912.4 678.8L913.4 679.5L914.1 679.5L914.1 677.5L914.6 677.5L914.6 679.5L914.4 680.5L915.3 680.5L915.3 671.4L916.4 671.4L916.4 680.5L915.4 681L916.3 681L916.3 679L917.2 679L917.2 681L916.4 680.2L917.4 681L918.3 681L918.3 680.2L918.6 680.2L918.6 681L918.4 680.7L919.4 681.6L920.4 681.6L920.4 664.9L920.7 664.9L920.7 681.6L920.4 684L921.4 682.5L922.4 682.5L923.4 682.7L924.4 682.6L925.4 682.6L925.4 670.3L926.2 670.3L926.2 682.6L925.4 682.5L926.1 682.5L926.1 673.8L926.7 673.8L926.7 682.5L926.4 683.7L927.2 683.7L927.2 679.6L927.8 679.6L927.8 683.7L927.4 683.9L928 683.9L928 632.9L928.5 632.9L928.5 683.9L928.4 685L929.1 685L929.1 683.9L929.9 683.9L929.9 685L929.4 683.7L929.8 683.7L929.8 607.2L930.4 607.2L930.4 683.7L930.4 685L931.3 685L931.3 684.6L932.4 684.6L932.4 685L931.4 685.7L932.4 684.3L933.4 685.9L934 685.9L934 682.4L934.6 682.4L934.6 685.9L934.4 685L935.4 686.3L936.1 686.3L936.1 684.7L937.1 684.7L937.1 686.3L936.4 687.1L937.3 687.1L937.3 674.9L938.5 674.9L938.5 687.1L937.4 686.6L938.4 687L939.3 687L939.3 681.4L939.6 681.4L939.6 687L939.4 686.7L940.1 686.7L940.1 681.5L940.9 681.5L940.9 686.7L940.4 687.5L941 687.5L941 680.7L941.4 680.7L941.4 687.5L941.4 688.2L942.2 688.2L942.2 680.5L943.4 680.5L943.4 688.2L942.4 687.7L943.4 688L943.5 688L943.5 679.9L943.8 679.9L943.8 688L944.1 688L944.1 685.3L944.5 685.3L944.5 688L944.4 688.5L945.1 688.5L945.1 687.9L945.7 687.9L945.7 688.5L945.4 689L946.2 689L946.2 681.3L947.1 681.3L947.1 689L946.4 688L947 688L947 685L947.4 685L947.4 688L947.4 689.1L948.4 689L949 689L949 686.9L949.5 686.9L949.5 689L949.4 689.9L950.4 690.4L950.5 690.4L950.5 682.7L950.8 682.7L950.8 690.4L951.3 690.4L951.3 682.3L951.9 682.3L951.9 690.4L951.4 690.3L952.3 690.3L952.3 676.8L953.5 676.8L953.5 690.3L952.4 691.1L953.3 691.1L953.3 688.2L954.1 688.2L954.1 691.1L953.4 690.1L954.4 690.1L954.4 664.8L954.6 664.8L954.6 690.1L954.4 690.7L955.4 690.7L956.3 690.7L956.3 658L956.5 658L956.5 690.7L956.4 691.5L957.4 691.7L958.3 691.7L958.3 687.8L959 687.8L959 691.7L958.4 691.7L959.4 691.4L960.1 691.4L960.1 690.1L961.1 690.1L961.1 691.4L960.4 692.2L961.3 692.2L961.3 685.6L962.1 685.6L962.1 692.2L961.4 692.2L962.1 692.2L962.1 687.4L963.2 687.4L963.2 692.2L962.4 693L963.4 692.7L964.4 692.7L964.4 686.5L965.1 686.5L965.1 692.7L964.4 693.7L965.4 693.7L965.4 688.6L966.3 688.6L966.3 693.7L965.4 693.4L966.4 692.5L966.5 692.5L966.5 690.7L967 690.7L967 692.5L967.4 693.6L967.4 693.6L967.4 686.1L968 686.1L968 693.6L968.1 693.6L968.1 687.3L969 687.3L969 693.6L968.4 693.1L969.1 693.1L969.1 690.4L970.2 690.4L970.2 693.1L969.4 694.6L970.1 694.6L970.1 680L971.3 680L971.3 694.6L970.4 695L971.3 695L971.3 694.1L972.3 694.1L972.3 695L971.4 694.5L972 694.5L972 688.4L973.1 688.4L973.1 694.5L972.4 694.9L973 694.9L973 690.5L973.5 690.5L973.5 694.9L973.4 694.1L974.3 694.1L974.3 692.9L975.3 692.9L975.3 694.1L974.4 693.9L975.1 693.9L975.1 693.8L975.6 693.8L975.6 693.9L975.4 695L976.3 695L976.3 694.4L977.3 694.4L977.3 695L976.4 695.4L977.4 694.9L978.3 694.9L978.3 686.1L979.5 686.1L979.5 694.9L978.4 695.9L979.2 695.9L979.2 695.8L980.1 695.8L980.1 695.9L979.4 696.3L980.3 696.3L980.3 677.4L981.1 677.4L981.1 696.3L980.4 696.6L981.4 696.6L981.4 695.3L982.3 695.3L982.3 696.6L981.4 697.3L982.1 697.3L982.1 692.9L982.8 692.9L982.8 697.3L982.4 697.1L983.4 696.7L984.2 696.7L984.2 692L984.6 692L984.6 696.7L984.4 697.2L985 697.2L985 695L985.9 695L985.9 697.2L985.4 697.6L986.4 697L987.4 698.4L988.4 698.4L988.5 698.4L988.5 693.4L989 693.4L989 698.4L989.4 698L990.4 698L991.3 698L991.3 686.2L992.3 686.2L992.3 698L991.4 700.5L992.3 700.5L992.3 690.2L993.1 690.2L993.1 700.5L992.4 699.2L993.4 699.4L993.5 699.4L993.5 694.5L993.8 694.5L993.8 699.4L994.4 700.1L995.4 700L996.3 700L996.3 692.5L997 692.5L997 700L996.4 699.9L997.4 700.5L998 700.5L998 695.6L998.9 695.6L998.9 700.5L998.4 699.9L999.4 701.1L1000.3 701.1L1000.3 697.9L1000.8 697.9L1000.8 701.1L1000.4 700.2L1001.4 701.5L1002.2 701.5L1002.2 699.4L1003 699.4L1003 701.5L1002.4 701.9L1003.4 701.1L1003.5 701.1L1003.5 698.2L1003.9 698.2L1003.9 701.1L1004.4 703.2L1005.2 703.2L1005.2 700.2L1006 700.2L1006 703.2L1005.4 701.9L1006.1 701.9L1006.1 701.1L1006.6 701.1L1006.6 701.9L1006.4 706.6L1007.4 706L1008.4 706.6L1009.4 706.3L1010.4 708.1L1011.4 707.6L1012.3 707.6L1012.3 686L1012.8 686L1012.8 707.6L1012.4 708.2L1013.2 708.2L1013.2 688.4L1014.1 688.4L1014.1 708.2L1013.4 707.8L1014.4 708L1015.2 708L1015.2 707.4L1016.1 707.4L1016.1 708L1015.4 707.9L1016.4 707.9L1017.4 708.5L1017.4 708.5L1017.4 700L1018.6 700L1018.6 708.5L1018.4 708.5L1019.4 708.5L1020.1 708.5L1020.1 706.3L1020.9 706.3L1020.9 708.5L1020.4 708.1L1021.4 708.8L1022.4 709.5L1023.4 709.2L1024.3 709.2L1024.3 697L1025.4 697L1025.4 709.2L1024.4 709.8L1025.3 709.8L1025.3 702.9L1026.5 702.9L1026.5 709.8L1025.4 709.7L1026.4 709.4L1027.1 709.4L1027.1 696.2L1028.2 696.2L1028.2 709.4L1027.4 709.7L1028.3 709.7L1028.3 709.5L1029.4 709.5L1029.4 709.7L1028.4 710L1029.4 710.4L1029.5 710.4L1029.5 704.8L1029.7 704.8L1029.7 710.4L1030.4 710.6L1031.3 710.6L1031.3 706.6L1031.9 706.6L1031.9 710.6L1031.4 711.5L1032.1 711.5L1032.1 710.8L1033 710.8L1033 711.5L1032.4 710.6L1033.4 710.3L1033.5 710.3L1033.5 703.9L1034.5 703.9L1034.5 710.3L1034.1 710.3L1034.1 706.7L1035 706.7L1035 710.3L1034.4 711.9L1035.4 711.9L1035.4 709.6L1035.9 709.6L1035.9 711.9L1035.4 711.5L1036.4 711.9L1037.3 711.9L1037.3 709.6L1038.5 709.6L1038.5 711.9L1037.4 713.4L1038.2 713.4L1038.2 709.2L1038.7 709.2L1038.7 713.4L1038.4 713.1L1039.1 713.1L1039.1 705.6L1039.3 705.6L1039.3 713.1L1039.4 712.8L1040.4 713.2L1041.4 713L1041.5 713L1041.5 709.3L1042.2 709.3L1042.2 713L1042.4 713.6L1043 713.6L1043 698.8L1044.1 698.8L1044.1 713.6L1043.4 713L1044.1 713L1044.1 706.2L1044.8 706.2L1044.8 713L1044.4 713.1L1045.4 713.1L1045.4 699.7L1046.5 699.7L1046.5 713.1L1045.4 713.4L1046.4 717.8L1046.4 717.8L1046.4 715L1047 715L1047 717.8L1047.2 717.8L1047.2 712.8L1047.9 712.8L1047.9 717.8L1047.4 721.8L1048.2 721.8L1048.2 715.4L1049.5 715.4L1049.5 721.8L1048.4 720.8L1049.2 720.8L1049.2 712.3L1050.2 712.3L1050.2 720.8L1049.4 721.8L1050.4 721.3L1051.3 721.3L1051.3 711.8L1052.1 711.8L1052.1 721.3L1051.4 722L1052.4 721.4L1052.5 721.4L1052.5 718.9L1053.6 718.9L1053.6 721.4L1053.3 721.4L1053.3 705.3L1054.6 705.3L1054.6 721.4L1053.4 722.2L1054.2 722.2L1054.2 714.3L1055.8 714.3L1055.8 722.2L1054.4 721.7L1055.4 721.7L1055.5 721.7L1055.5 715.7L1056.8 715.7L1056.8 721.7L1056.4 722L1056.5 722L1056.5 716.1L1057.8 716.1L1057.8 722L1057.4 722.2L1058.4 722.2L1058.4 719.9L1059.4 719.9L1059.4 722.2L1058.4 721.9L1059 721.9L1059 708.5L1060.6 708.5L1060.6 721.9L1059.4 721.5L1060.1 721.5L1060.1 713.7L1061.8 713.7L1061.8 721.5L1060.4 723.2L1061.3 723.2L1061.3 698.5L1062.7 698.5L1062.7 723.2L1061.4 722.2L1062.4 721.6L1062.5 721.6L1062.5 707.2L1064.1 707.2L1064.1 721.6L1063.2 721.6L1063.2 687.6L1064.1 687.6L1064.1 721.6L1063.4 721.4L1064.2 721.4L1064.2 712.9L1065.4 712.9L1065.4 721.4L1064.4 721.2L1065.4 721.2L1065.4 711.7L1066.5 711.7L1066.5 721.2L1065.4 722.4L1066.3 722.4L1066.3 719.4L1066.9 719.4L1066.9 722.4L1066.4 723.5L1067.3 723.5L1067.3 716.1L1068.7 716.1L1068.7 723.5L1067.4 722.1L1068.4 722.9L1068.4 722.9L1068.4 708.4L1069.6 708.4L1069.6 722.9L1069.1 722.9L1069.1 718.8L1070.1 718.8L1070.1 722.9L1069.4 722.2L1070.3 722.2L1070.3 710.8L1071.9 710.8L1071.9 722.2L1070.4 723.8L1071.1 723.8L1071.1 714.9L1071.6 714.9L1071.6 723.8L1071.4 723.5L1072.4 723.5L1072.4 710.9L1073.4 710.9L1073.4 723.5L1072.4 723.5L1073.4 723.5L1073.4 714.5L1074.6 714.5L1074.6 723.5L1073.4 724.1L1074.1 724.1L1074.1 713.7L1075.3 713.7L1075.3 724.1L1074.4 724.4L1075.4 724.2L1076.4 723.4L1077.4 723.1L1077.4 723.1L1077.4 714.2L1079 714.2L1079 723.1L1078.3 723.1L1078.3 720.5L1079 720.5L1079 723.1L1078.4 723.3L1079.2 723.3L1079.2 714.9L1080.7 714.9L1080.7 723.3L1079.4 723.1L1080.4 725L1080.4 725L1080.4 713.9L1082 713.9L1082 725L1081.2 725L1081.2 716.8L1081.9 716.8L1081.9 725L1081.4 724L1082 724L1082 716.6L1082.6 716.6L1082.6 724L1082.4 724.3L1083.3 724.3L1083.3 721.6L1084.2 721.6L1084.2 724.3L1083.4 724.4L1084.4 724.4L1084.4 714.9L1085.9 714.9L1085.9 724.4L1084.4 725.4L1085.4 724.1L1086 724.1L1086 685.9L1086.5 685.9L1086.5 724.1L1086.3 724.1L1086.3 711.1L1087 711.1L1087 724.1L1086.4 725.1L1087.2 725.1L1087.2 709L1088.6 709L1088.6 725.1L1087.4 724.7L1088.4 724.6L1088.5 724.6L1088.5 723.4L1089.8 723.4L1089.8 724.6L1089.2 724.6L1089.2 700.7L1089.9 700.7L1089.9 724.6L1089.4 723.7L1090.3 723.7L1090.3 716.7L1091.2 716.7L1091.2 723.7L1090.4 725.3L1091.1 725.3L1091.1 714.1L1092.4 714.1L1092.4 725.3L1091.4 724.5L1092 724.5L1092 713.5L1092.7 713.5L1092.7 724.5L1092.4 724.7L1093.4 725.1L1093.4 725.1L1093.4 702.7L1094 702.7L1094 725.1L1094.3 725.1L1094.3 689.4L1096 689.4L1096 725.1L1094.4 725.1L1095.2 725.1L1095.2 716.2L1096.1 716.2L1096.1 725.1L1095.4 725.7L1096.4 724.9L1097.1 724.9L1097.1 705.1L1098.3 705.1L1098.3 724.9L1097.4 725.4L1098 725.4L1098 684.4L1099 684.4L1099 725.4L1098.4 725.5L1099.4 725.5L1100 725.5L1100 689.8L1100.5 689.8L1100.5 725.5L1100.2 725.5L1100.2 719.1L1100.9 719.1L1100.9 725.5L1100.4 725.9L1101.4 725.5L1101.4 725.5L1101.4 692.8L1102.5 692.8L1102.5 725.5L1102.4 726.3L1102.5 726.3L1102.5 719.9L1103 719.9L1103 726.3L1103.4 725.4L1103.4 725.4L1103.4 717.9L1104.5 717.9L1104.5 725.4L1104.4 725.1L1104.5 725.1L1104.5 717.9L1105.9 717.9L1105.9 725.1L1105.4 725.9L1106.4 726.6L1106.4 726.6L1106.4 723.7L1107.8 723.7L1107.8 726.6L1107 726.6L1107 718.9L1107.8 718.9L1107.8 726.6L1107.4 725.8L1108 725.8L1108 721.5L1108.8 721.5L1108.8 725.8L1108.4 725.8L1109.3 725.8L1109.3 710.1L1110.4 710.1L1110.4 725.8L1109.4 726L1110.3 726L1110.3 706L1111.2 706L1111.2 726L1110.4 726.3L1111.4 726.2L1111.4 726.2L1111.4 705.5L1112.3 705.5L1112.3 726.2L1112.4 726.2L1112.4 718L1113.7 718L1113.7 726.2L1112.4 726.6L1113.3 726.6L1113.3 721L1114.8 721L1114.8 726.6L1113.4 725.6L1114.4 727.3L1115.4 726.9L1115.5 726.9L1115.5 713.8L1116.4 713.8L1116.4 726.9L1116.4 726.2L1116.5 726.2L1116.5 683.4L1117.8 683.4L1117.8 726.2L1117.2 726.2L1117.2 717.9L1118.1 717.9L1118.1 726.2L1117.4 727.5L1118.1 727.5L1118.1 723.1L1119.6 723.1L1119.6 727.5L1118.4 727.1L1119 727.1L1119 716.5L1119.6 716.5L1119.6 727.1L1119.4 727.7L1120 727.7L1120 708.7L1121.2 708.7L1121.2 727.7L1120.4 726.4L1121.3 726.4L1121.3 707.6L1123.1 707.6L1123.1 726.4L1121.4 727.9L1122.4 727.2L1122.5 727.2L1122.5 721.3L1123.1 721.3L1123.1 727.2L1123.3 727.2L1123.3 721.5L1124.8 721.5L1124.8 727.2L1123.4 726.1L1124 726.1L1124 714.4L1124.4 714.4L1124.4 726.1L1124.4 727.7L1125.4 727.2L1125.4 727.2L1125.4 715.9L1126.5 715.9L1126.5 727.2L1126.4 726.9L1126.5 726.9L1126.5 699.5L1127.9 699.5L1127.9 726.9L1127.4 727.4L1127.5 727.4L1127.5 716.2L1128.3 716.2L1128.3 727.4L1128.3 727.4L1128.3 716.5L1128.9 716.5L1128.9 727.4L1128.4 726.6L1129.3 726.6L1129.3 683.7L1130.5 683.7L1130.5 726.6L1129.4 727.9L1130.4 727.6L1131.2 727.6L1131.2 699.5L1131.8 699.5L1131.8 727.6L1131.4 727.6L1132.3 727.6L1132.3 707.1L1133.1 707.1L1133.1 727.6L1132.4 728.6L1133.1 728.6L1133.1 721.2L1134.3 721.2L1134.3 728.6L1133.4 728L1134.3 728L1134.3 700.4L1136 700.4L1136 728L1134.4 727.7L1135.4 727.7L1135.4 706.7L1136.6 706.7L1136.6 727.7L1135.4 727.6L1136.3 727.6L1136.3 698.4L1137.5 698.4L1137.5 727.6L1136.4 728.1L1137.4 728.1L1137.4 722.7L1138.2 722.7L1138.2 728.1L1137.4 728.8L1138.2 728.8L1138.2 721.4L1139.1 721.4L1139.1 728.8L1138.4 728L1139.2 728L1139.2 722L1140.6 722L1140.6 728L1139.4 727.8L1140.2 727.8L1140.2 723.1L1141 723.1L1141 727.8L1140.4 728.9L1141.4 728.6L1141.5 728.6L1141.5 724.3L1142 724.3L1142 728.6L1142 728.6L1142 690.3L1142.8 690.3L1142.8 728.6L1142.1 728.6L1142.1 717.2L1143.3 717.2L1143.3 728.6L1142.4 728.6L1143 728.6L1143 669.1L1143.6 669.1L1143.6 728.6L1143.1 728.6L1143.1 708.3L1144.4 708.3L1144.4 728.6L1143.4 729.7L1144 729.7L1144 653.2L1144.5 653.2L1144.5 729.7L1144.1 729.7L1144.1 728.1L1144.6 728.1L1144.6 729.7L1144.4 728.1L1145 728.1L1145 643.1L1145.5 643.1L1145.5 728.1L1145 728.1L1145 722.5L1146.3 722.5L1146.3 728.1L1145.4 728.9L1146 728.9L1146 628.6L1146.6 628.6L1146.6 728.9L1146.1 728.9L1146.1 710.7L1146.9 710.7L1146.9 728.9L1146.4 728L1147 728L1147 638.7L1147.5 638.7L1147.5 728L1147 728L1147 724.7L1148.6 724.7L1148.6 728L1147.4 728.8L1148 728.8L1148 656.6L1148.5 656.6L1148.5 728.8L1148.3 728.8L1148.3 711.4L1149 711.4L1149 728.8L1148.4 729.3L1149 729.3L1149 669.8L1149.6 669.8L1149.6 729.3L1149.4 729.7L1149.5 729.7L1149.5 710.7L1150.2 710.7L1150.2 729.7L1150 729.7L1150 682.9L1150.7 682.9L1150.7 729.7L1150.4 728.5L1150.4 728.5L1150.4 724.2L1152.2 724.2L1152.2 728.5L1151 728.5L1151 692.8L1151.6 692.8L1151.6 728.5L1151.1 728.5L1151.1 716.7L1151.9 716.7L1151.9 728.5L1151.4 729.7L1152 729.7L1152 704.2L1152.6 704.2L1152.6 729.7L1152.1 729.7L1152.1 714.7L1153.5 714.7L1153.5 729.7L1152.4 729.7L1153 729.7L1153 711L1153.6 711L1153.6 729.7L1153.1 729.7L1153.1 717L1153.7 717L1153.7 729.7L1153.4 729.3L1154.4 730.7L1154.5 730.7L1154.5 728.1L1156 728.1L1156 730.7L1155 730.7L1155 707.2L1155.5 707.2L1155.5 730.7L1155.4 729.5L1156.3 729.5L1156.3 721L1158 721L1158 729.5L1156.4 729.2L1157 729.2L1157 712.5L1158.3 712.5L1158.3 729.2L1157.4 729.9L1158.4 728.8L1159.3 728.8L1159.3 710.1L1161 710.1L1161 728.8L1159.4 730.7L1160.4 730.5L1161.4 729.9L1162.4 730.5L1163.4 730.6L1163.5 730.6L1163.5 718.7L1164.7 718.7L1164.7 730.6L1164.4 731.5L1165.4 730.3L1166.4 730L1167.4 729.7L1168.4 730.8L1169.4 730.2L1170.3 730.2L1170.3 728.6L1170.7 728.6L1170.7 730.2L1170.4 731L1171.4 731.4L1172.4 731.1L1173.4 731L1174.4 731L1174.4 720.3L1175.2 720.3L1175.2 731L1174.4 732.2L1175.4 731.6L1176.4 731.9L1177.4 732.4L1178.4 731.3L1179.4 731.7L1180.4 733.5L1181.4 732.3L1182.4 731.9L1183.4 732.4L1184.4 732.4L1185.1 732.4L1185.1 720.5L1186.1 720.5L1186.1 732.4L1185.4 732.2L1186.4 732.7L1187.4 733L1188.1 733L1188.1 732.7L1189.2 732.7L1189.2 733L1188.4 733.1L1189.4 733.5L1189.4 733.5L1189.4 728.9L1190.4 728.9L1190.4 733.5L1190.4 733.5L1190.4 733.2L1191.3 733.2L1191.3 733.5L1190.4 732.5L1191.4 732.7L1192.4 734L1193.4 733.4L1194.4 734.3L1195.1 734.3L1195.1 727.7L1195.8 727.7L1195.8 734.3L1195.4 733.9L1196.4 733.1L1197.4 734.1L1198.3 734.1L1198.3 725.8L1199.4 725.8L1199.4 734.1L1198.4 733.4L1199.2 733.4L1199.2 726.5L1200.4 726.5L1200.4 733.4L1199.4 734.1L1200.2 734.1L1200.2 716.5L1201 716.5L1201 734.1L1200.4 734.6L1201.2 734.6L1201.2 720.6L1202.8 720.6L1202.8 734.6L1201.4 735.1L1202.2 735.1L1202.2 713L1203.8 713L1203.8 735.1L1202.4 734.1L1203.3 734.1L1203.3 711.2L1203.8 711.2L1203.8 734.1L1203.4 734.5L1204.4 734.3L1204.5 734.3L1204.5 723.3L1206.2 723.3L1206.2 734.3L1205 734.3L1205 693.5L1205.5 693.5L1205.5 734.3L1205.4 734.6L1205.4 734.6L1205.4 720.3L1205.8 720.3L1205.8 734.6L1206.4 733L1206.5 733L1206.5 725.9L1208 725.9L1208 733L1207.2 733L1207.2 721.4L1208 721.4L1208 733L1207.4 734.1L1208.3 734.1L1208.3 732.8L1209.2 732.8L1209.2 734.1L1208.4 734.5L1209.1 734.5L1209.1 731.5L1210.5 731.5L1210.5 734.5L1209.4 734.7L1210.1 734.7L1210.1 724.1L1211.3 724.1L1211.3 734.7L1210.4 734.1L1211.4 735L1212.3 735L1212.3 709L1213.4 709L1213.4 735L1212.4 735.1L1213.3 735.1L1213.3 711.2L1215 711.2L1215 735.1L1213.4 734.7L1214.1 734.7L1214.1 718.5L1215 718.5L1215 734.7L1214.4 734.6L1215 734.6L1215 700.6L1215.5 700.6L1215.5 734.6L1215.4 734.5L1216.4 734.8L1217.2 734.8L1217.2 717.5L1217.9 717.5L1217.9 734.8L1217.4 735.4L1218.4 735.4L1218.4 725.1L1218.8 725.1L1218.8 735.4L1218.4 735.6L1219.4 734.7L1220.3 734.7L1220.3 710.8L1221.8 710.8L1221.8 734.7L1220.4 734.5L1221.3 734.5L1221.3 732.1L1221.7 732.1L1221.7 734.5L1221.4 734.6L1222.4 735.6L1223.4 735.6L1223.4 723.1L1224.1 723.1L1224.1 735.6L1223.4 735.2L1224.2 735.2L1224.2 710.2L1225.2 710.2L1225.2 735.2L1224.4 735.3L1225.3 735.3L1225.3 727.5L1225.8 727.5L1225.8 735.3L1225.4 735.5L1226.4 735.5L1226.5 735.5L1226.5 723.3L1228.2 723.3L1228.2 735.5L1227.2 735.5L1227.2 724.5L1228.6 724.5L1228.6 735.5L1227.4 735.3L1228.2 735.3L1228.2 730L1229.9 730L1229.9 735.3L1228.4 734.8L1229.4 734.8L1229.4 731.8L1230.3 731.8L1230.3 734.8L1229.4 735.1L1230.3 735.1L1230.3 733.6L1231.9 733.6L1231.9 735.1L1230.4 735.5L1231.3 735.5L1231.3 725.2L1232.3 725.2L1232.3 735.5L1231.4 735.7L1232.4 735.5L1233.1 735.5L1233.1 732.2L1234 732.2L1234 735.5L1233.4 735.7L1234.4 735.7L1234.4 727.5L1235 727.5L1235 735.7L1234.4 736.8L1235.4 736.1L1235.5 736.1L1235.5 726.8L1236.1 726.8L1236.1 736.1L1236.4 736.7L1236.4 736.7L1236.4 713.4L1237.6 713.4L1237.6 736.7L1237.4 736.7L1237.4 720L1238.5 720L1238.5 736.7L1237.4 736.6L1238 736.6L1238 694.1L1238.5 694.1L1238.5 736.6L1238.3 736.6L1238.3 704.8L1239.7 704.8L1239.7 736.6L1238.4 736.6L1239.1 736.6L1239.1 735.9L1240.6 735.9L1240.6 736.6L1239.4 736.4L1240.4 737.2L1241.4 737.2L1241.5 737.2L1241.5 733.5L1241.9 733.5L1241.9 737.2L1242 737.2L1242 722.6L1243.4 722.6L1243.4 737.2L1242.4 738.3L1243.3 738.3L1243.3 711.8L1244.4 711.8L1244.4 738.3L1243.4 737.5L1244.4 737.5L1244.4 725.7L1245.4 725.7L1245.4 737.5L1244.4 738.1L1245.2 738.1L1245.2 732L1246.2 732L1246.2 738.1L1245.4 738.9L1246.3 738.9L1246.3 719.3L1246.9 719.3L1246.9 738.9L1246.4 738.7L1247.1 738.7L1247.1 732.2L1248.4 732.2L1248.4 738.7L1247.4 739.2L1248.4 739.6L1248.5 739.6L1248.5 725.2L1249.6 725.2L1249.6 739.6L1249.3 739.6L1249.3 705.6L1250.2 705.6L1250.2 739.6L1249.4 738.5L1250.4 739.4L1251.4 739.3L1251.5 739.3L1251.5 734.6L1252.6 734.6L1252.6 739.3L1252 739.3L1252 698.5L1252.5 698.5L1252.5 739.3L1252.3 739.3L1252.3 725.7L1253.5 725.7L1253.5 739.3L1252.4 740.7L1253.1 740.7L1253.1 719.9L1254.3 719.9L1254.3 740.7L1253.4 740.2L1254.4 740.7L1255 740.7L1255 731L1256.4 731L1256.4 740.7L1255.4 741.6L1256.4 740.7L1256.4 740.7L1256.4 728.3L1256.9 728.3L1256.9 740.7L1257.4 741.2L1258.2 741.2L1258.2 710.4L1259.8 710.4L1259.8 741.2L1258.4 741.5L1259.3 741.5L1259.3 720.5L1259.8 720.5L1259.8 741.5L1259.4 741.4L1260.3 741.4L1260.3 729.7L1261.6 729.7L1261.6 741.4L1260.4 742.4L1261.3 742.4L1261.3 722.3L1261.8 722.3L1261.8 742.4L1261.4 742.4L1262 742.4L1262 738L1263.7 738L1263.7 742.4L1262.4 742.7L1263 742.7L1263 738.4L1264.6 738.4L1264.6 742.7L1263.4 742.4L1264 742.4L1264 736.3L1265.6 736.3L1265.6 742.4L1264.4 742.5L1265 742.5L1265 730.4L1266 730.4L1266 742.5L1265.4 742.7L1266.3 742.7L1266.3 731L1266.9 731L1266.9 742.7L1266.4 742.9L1267.4 742.5L1267.5 742.5L1267.5 729.7L1269 729.7L1269 742.5L1268 742.5L1268 705.9L1268.5 705.9L1268.5 742.5L1268.4 743.7L1268.4 743.7L1268.4 728.4L1268.9 728.4L1268.9 743.7L1269.4 743.7L1269.4 711.3L1269.8 711.3L1269.8 743.7L1269.4 744.1L1270.2 744.1L1270.2 733.1L1270.6 733.1L1270.6 744.1L1270.4 743.9L1271.4 743.9L1271.4 734.4L1272.7 734.4L1272.7 743.9L1271.4 743.9L1272.4 743.9L1272.4 727.2L1273.6 727.2L1273.6 743.9L1272.4 744.4L1273.2 744.4L1273.2 733.6L1274.7 733.6L1274.7 744.4L1273.4 744.7L1274 744.7L1274 735L1275.5 735L1275.5 744.7L1274.4 745L1275 745L1275 737.7L1276 737.7L1276 745L1275.4 745.9L1276.4 744.8L1276.4 744.8L1276.4 732.4L1277.5 732.4L1277.5 744.8L1277.1 744.8L1277.1 732.7L1278.8 732.7L1278.8 744.8L1277.4 745.6L1278.4 746L1278.5 746L1278.5 742L1279.6 742L1279.6 746L1279.2 746L1279.2 730L1279.7 730L1279.7 746L1279.4 745.9L1280.3 745.9L1280.3 719.1L1281.9 719.1L1281.9 745.9L1280.4 746L1281.4 745.8L1281.5 745.8L1281.5 735.9L1282 735.9L1282 745.8L1282.1 745.8L1282.1 727.7L1282.7 727.7L1282.7 745.8L1282.4 746.2L1283.4 746.2L1283.4 734L1284.4 734L1284.4 746.2L1283.4 747.1L1284.3 747.1L1284.3 720.7L1284.9 720.7L1284.9 747.1L1284.4 747.7L1285.4 746.9L1286.2 746.9L1286.2 727.3L1287.5 727.3L1287.5 746.9L1286.4 747.7L1287.4 747.9L1288.2 747.9L1288.2 732.5L1289.2 732.5L1289.2 747.9L1288.4 748.4L1289.4 748.2L1289.4 748.2L1289.4 739.2L1290.2 739.2L1290.2 748.2L1290.3 748.2L1290.3 724L1291.4 724L1291.4 748.2L1290.4 748.5L1291.3 748.5L1291.3 731.5L1293 731.5L1293 748.5L1291.4 749L1292.4 748.1L1292.4 748.1L1292.4 738.5L1293.3 738.5L1293.3 748.1L1293.4 749L1293.4 749L1293.4 724.3L1295 724.3L1295 749L1294.4 747.9L1295.2 747.9L1295.2 745.3L1295.5 745.3L1295.5 747.9L1295.4 747.4L1296.4 747.5L1297.4 746.8L1298.4 747.4L1299.4 747.2L1299.4 747.2L1299.4 744.5L1299.7 744.5L1299.7 747.2L1300.1 747.2L1300.1 733L1301 733L1301 747.2L1300.4 746.2L1301.4 745.8L1302.4 745.4L1303.4 745L1304.4 745.1L1305.4 745.3L1306.4 744.9L1307.4 744.8L1308 744.8L1308 744.1L1309.1 744.1L1309.1 744.8L1308.4 745L1309.4 745.7L1310.4 745.1L1311.4 746.1L1312.4 745.3L1313.4 746.2L1314.4 744.9L1315.4 745.2L1316.4 745.9L1317.4 745.9L1318.4 745.6L1319.4 746.8L1320.4 745.8L1321.4 746L1322.4 745.6L1323.4 746.8L1324.4 746.4L1325.1 746.4L1325.1 743.6L1326.5 743.6L1326.5 746.4L1325.4 746.3L1326.1 746.3L1326.1 733.6L1326.6 733.6L1326.6 746.3L1326.4 745.3L1327.4 746.4L1328.2 746.4L1328.2 737.8L1329.5 737.8L1329.5 746.4L1328.4 746L1329.4 746.5L1329.4 746.5L1329.4 729.7L1330.1 729.7L1330.1 746.5L1330.2 746.5L1330.2 739.6L1331.1 739.6L1331.1 746.5L1330.4 746.8L1331 746.8L1331 726.5L1332.6 726.5L1332.6 746.8L1331.4 746.1L1332.4 746.6L1332.5 746.6L1332.5 737.3L1333.8 737.3L1333.8 746.6L1333.1 746.6L1333.1 746.1L1334.1 746.1L1334.1 746.6L1333.4 747L1334.1 747L1334.1 738.6L1334.6 738.6L1334.6 747L1334.4 746.7L1335.4 746.5L1336.4 746.2L1336.5 746.2L1336.5 733.8L1338.3 733.8L1338.3 746.2L1337.3 746.2L1337.3 736.3L1338.6 736.3L1338.6 746.2L1337.4 746.5L1338.4 746.2L1339.4 747.4L1339.5 747.4L1339.5 744.4L1340.6 744.4L1340.6 747.4L1340.3 747.4L1340.3 740.9L1341.7 740.9L1341.7 747.4L1340.4 747.1L1341.2 747.1L1341.2 736.5L1342.3 736.5L1342.3 747.1L1341.4 746.5L1342.1 746.5L1342.1 723.9L1343 723.9L1343 746.5L1342.4 747.1L1343.1 747.1L1343.1 734.7L1343.8 734.7L1343.8 747.1L1343.4 746.6L1344.2 746.6L1344.2 740.4L1345.7 740.4L1345.7 746.6L1344.4 745.6L1345 745.6L1345 718.4L1345.5 718.4L1345.5 745.6L1345.4 747.9L1345.5 747.9L1345.5 745.6L1346.1 745.6L1346.1 747.9L1346.4 748L1347.3 748L1347.3 741.1L1348.2 741.1L1348.2 748L1347.4 746.7L1348.2 746.7L1348.2 742.2L1349.6 742.2L1349.6 746.7L1348.4 747.2L1349.2 747.2L1349.2 746.3L1350.6 746.3L1350.6 747.2L1349.4 747.7L1350 747.7L1350 739.6L1351.4 739.6L1351.4 747.7L1350.4 747.5L1351.3 747.5L1351.3 741.4L1352.5 741.4L1352.5 747.5L1351.4 747.3L1352.2 747.3L1352.2 747.1L1353.6 747.1L1353.6 747.3L1352.4 747.5L1353.2 747.5L1353.2 719.7L1354.1 719.7L1354.1 747.5L1353.4 747.7L1354.2 747.7L1354.2 734.5L1355.2 734.5L1355.2 747.7L1354.4 747.6L1355 747.6L1355 735.4L1356.7 735.4L1356.7 747.6L1355.4 748.1L1356 748.1L1356 722.6L1356.5 722.6L1356.5 748.1L1356.3 748.1L1356.3 742.9L1357.7 742.9L1357.7 748.1L1356.4 747.9L1357.3 747.9L1357.3 738.3L1358.2 738.3L1358.2 747.9L1357.4 747.7L1358.2 747.7L1358.2 740.5L1359.9 740.5L1359.9 747.7L1358.4 748.2L1359.4 747.4L1359.4 747.4L1359.4 723.4L1361.2 723.4L1361.2 747.4L1360.4 747.4L1360.4 732.1L1361.8 732.1L1361.8 747.4L1360.4 749L1361.3 749L1361.3 745.4L1362.2 745.4L1362.2 749L1361.4 747.5L1362.4 748.4L1363.1 748.4L1363.1 732.6L1364 732.6L1364 748.4L1363.4 748.7L1364.2 748.7L1364.2 746L1365.5 746L1365.5 748.7L1364.4 748.8L1365.1 748.8L1365.1 732.6L1365.6 732.6L1365.6 748.8L1365.4 748.7L1366 748.7L1366 734.3L1367.7 734.3L1367.7 748.7L1366.4 749.3L1367.1 749.3L1367.1 739.2L1368.6 739.2L1368.6 749.3L1367.4 748.2L1368.4 748.8L1369 748.8L1369 740.4L1370.6 740.4L1370.6 748.8L1369.4 748.9L1370 748.9L1370 742.8L1371.1 742.8L1371.1 748.9L1370.4 748.7L1371.4 748.7L1371.5 748.7L1371.5 739.8L1372.7 739.8L1372.7 748.7L1372.3 748.7L1372.3 744L1373.7 744L1373.7 748.7L1372.4 749.7L1373.1 749.7L1373.1 727.9L1374.7 727.9L1374.7 749.7L1373.4 748.7L1374.3 748.7L1374.3 728.5L1375.8 728.5L1375.8 748.7L1374.4 748.8L1375.4 748.9L1375.5 748.9L1375.5 726.6L1376 726.6L1376 748.9L1376.4 748.9L1377.3 748.9L1377.3 741.9L1379 741.9L1379 748.9L1377.5 750L1378 782L1379.2 752L1380 783L1381.3 750L1382 776L1383.3 756L1384 783L1385.3 752L1386 780L1387.3 758L1388 783L1389 770"/><path stroke="#f4f400" d="M44.3 100L44.3 109L45.5 112L45.6 140L46.2 142L46.9 169L48 171L49.4 195L51 197L52.8 210L53.5 212L54.6 226L55.2 228L55.9 252L56.4 252"/></g><g stroke="#c4c4c4" stroke-width="1.3" fill="none"><path d="M39.5 73.5H1390V786.5H39.5Z"/><path d="M1439 73V787M1487.7 73V787"/></g><path stroke="#d2d2d2" stroke-width="1.2" fill="none" d="M113.3 73.5v2M186.7 73.5v2M260.0 73.5v2M333.4 73.5v4M406.8 73.5v2M480.1 73.5v2M553.4 73.5v2M626.8 73.5v4M700.1 73.5v2M773.5 73.5v2M846.8 73.5v2M920.2 73.5v4M993.5 73.5v2M1066.9 73.5v2M1140.2 73.5v2M1213.6 73.5v4M1286.9 73.5v2M1360.3 73.5v2M171.3 786.5v-2M303.4 786.5v-4M435.5 786.5v-2M567.6 786.5v-4M699.7 786.5v-2M831.8 786.5v-4M963.9 786.5v-2M1096.0 786.5v-4M1228.1 786.5v-2M1360.2 786.5v-4M39.5 100.8h2M39.5 128.2h2M39.5 155.6h2M39.5 183.1h2M39.5 210.6h4M39.5 238.0h2M39.5 265.4h2M39.5 292.9h2M39.5 320.3h2M39.5 347.8h4M39.5 375.2h2M39.5 402.7h2M39.5 430.1h2M39.5 457.6h2M39.5 485.1h4M39.5 512.5h2M39.5 539.9h2M39.5 567.4h2M39.5 594.8h2M39.5 622.3h4M39.5 649.7h2M39.5 677.2h2M39.5 704.6h2M39.5 732.1h2M39.5 759.5h4M1390 73.3h-5M1390 100.8h-3M1390 128.2h-3M1390 155.6h-3M1390 183.1h-3M1390 210.6h-5M1390 238.0h-3M1390 265.4h-3M1390 292.9h-3M1390 320.3h-3M1390 347.8h-5M1390 375.2h-3M1390 402.7h-3M1390 430.1h-3M1390 457.6h-3M1390 485.1h-5M1390 512.5h-3M1390 539.9h-3M1390 567.4h-3M1390 594.8h-3M1390 622.3h-5M1390 649.7h-3M1390 677.2h-3M1390 704.6h-3M1390 732.1h-3M1390 759.5h-5M1390 787.0h-3M1439 786.5h-5M1439 760.1h-3M1439 733.6h-3M1439 707.2h-3M1439 680.7h-3M1439 654.3h-5M1439 627.9h-3M1439 601.4h-3M1439 575.0h-3M1439 548.5h-3M1439 522.1h-5M1439 495.7h-3M1439 469.2h-3M1439 442.8h-3M1439 416.3h-3M1439 389.9h-5M1439 363.5h-3M1439 337.0h-3M1439 310.6h-3M1439 284.1h-3M1439 257.7h-5M1439 231.3h-3M1439 204.8h-3M1439 178.4h-3M1439 151.9h-3M1439 125.5h-5M1439 99.1h-3M1439 73.5h-3M1487.7 766.2h-3M1487.7 737.0h-3M1487.7 707.9h-3M1487.7 678.7h-3M1487.7 649.5h-5M1487.7 620.3h-3M1487.7 591.1h-3M1487.7 562.0h-3M1487.7 532.8h-3M1487.7 503.6h-5M1487.7 474.4h-3M1487.7 445.2h-3M1487.7 416.1h-3M1487.7 386.9h-3M1487.7 357.7h-5M1487.7 328.5h-3M1487.7 299.3h-3M1487.7 270.2h-3M1487.7 241.0h-3M1487.7 211.8h-5M1487.7 182.6h-3M1487.7 153.4h-3M1487.7 124.3h-3M1487.7 95.1h-3M1487.7 786.5h-4M1439 786.5h-4"/></svg>
<!--AXES-->
<div class="a lbl" style="left:1394px;top:68px">9,5000</div>
<div class="a lbl" style="left:1394px;top:205px">9,2500</div>
<div class="a lbl" style="left:1394px;top:343px">9,0000</div>
<div class="a lbl" style="left:1394px;top:480px">8,7500</div>
<div class="a lbl" style="left:1394px;top:617px">8,5000</div>
<div class="a lbl" style="left:1394px;top:754px">8,2500</div>
<div class="a lbl" style="left:1443px;top:121px">2,5000</div>
<div class="a lbl" style="left:1443px;top:253px">2,0000</div>
<div class="a lbl" style="left:1443px;top:386px">1,5000</div>
<div class="a lbl" style="left:1443px;top:518px">1,0000</div>
<div class="a lbl" style="left:1443px;top:650px">0,5000</div>
<div class="a lbl" style="left:1443px;top:782px">0,0000</div>
<div class="a lbl" style="left:1492px;top:205px">20,0000</div>
<div class="a lbl" style="left:1492px;top:352px">15,0000</div>
<div class="a lbl" style="left:1492px;top:498px">10,0000</div>
<div class="a lbl" style="left:1492px;top:644px">5,0000</div>
<div class="a vt" style="left:1429px;top:415px">VBUS(V)</div>
<div class="a vt" style="left:1478px;top:416px">IBUS(A)</div>
<div class="a vt" style="left:1531px;top:413px">PBUS(W)</div>
<div class="a xl" style="left:263px;top:790px">00:30:00.000<br>0Day</div>
<div class="a xl" style="left:527px;top:790px">01:00:00.000<br>0Day</div>
<div class="a xl" style="left:791px;top:790px">01:30:00.000<br>0Day</div>
<div class="a xl" style="left:1055px;top:790px">02:00:00.000<br>0Day</div>
<div class="a xl" style="left:1320px;top:790px">02:30:00.000<br>0Day</div>
<svg class="a" style="left:1385px;top:60px" width="160" height="80" viewBox="1385 60 160 80">
<path d="M1390 130 L1397 126 V134Z M1396 129.5h4v1h-4z" fill="#f0f000"/><path d="M1439 93 L1446 89 V97Z M1445 92.5h5v1h-5z" fill="#11ee11"/><path d="M1488 74 L1495 70 V78Z M1494 73.5h5v1h-5z" fill="#f35ef3"/>
</svg>
<div class="a mk" style="left:1400px;top:125px;border-color:#f0f000;padding:0 2px">9.3969</div>
<div class="a mk" style="left:1449px;top:88px;border-color:#11ee11">2.6244</div>
<div class="a mk" style="left:1498px;top:69px;border-color:#f35ef3;padding:0 2px">24.6609</div>
<div class="a" style="left:39px;top:773px;width:60px;height:14px;background:#fff;font-size:9.5px;line-height:14px;color:#2a2a4a;padding-left:1px">00:00:00.000</div>
<div class="a" style="left:48px;top:727px;width:59px;height:52px;background:rgba(94,94,94,.95);border:1px solid #1e1e1e;font-size:8px;color:#262626;letter-spacing:-0.3px">
 <div class="a" style="left:5px;top:10px;width:24px;height:1px;background:#e6e600"></div><div class="a" style="left:33px;top:5px">VBUS</div>
 <div class="a" style="left:5px;top:26px;width:24px;height:1px;background:#35c035"></div><div class="a" style="left:34px;top:21px">IBUS</div>
 <div class="a" style="left:5px;top:41px;width:24px;height:1px;background:#c060c0"></div><div class="a" style="left:34px;top:37px">PBUS</div>
</div>
<!--/AXES-->
<!--TREE-->
<div class="a tree" style="left:1545px;top:62.5px;width:200px;height:160px">
 <div class="a chev" style="left:1px;top:3px"></div><div class="a" style="left:13px;top:0">Extremum</div>
 <div class="a chev" style="left:16px;top:16px"></div><div class="a" style="left:28px;top:12.7px">VBUS</div>
 <div class="a" style="left:43px;top:25.4px">MAX</div><div class="a" style="left:73px;top:25.4px">9.46396 V</div>
 <div class="a" style="left:43px;top:38.1px">MIN</div><div class="a" style="left:73px;top:38.1px">8.23182 V</div>
 <div class="a chev" style="left:16px;top:54px"></div><div class="a" style="left:28px;top:50.8px">IBUS</div>
 <div class="a" style="left:43px;top:63.5px">MAX</div><div class="a" style="left:73px;top:63.5px">2.62437 A</div>
 <div class="a" style="left:43px;top:76.2px">MIN</div><div class="a" style="left:73px;top:76.2px">0.04374 A</div>
 <div class="a chev" style="left:16px;top:92px"></div><div class="a" style="left:28px;top:88.9px">PBUS</div>
 <div class="a" style="left:43px;top:101.6px">MAX</div><div class="a" style="left:73px;top:101.6px">24.66094 W</div>
 <div class="a" style="left:43px;top:114.3px">MIN</div><div class="a" style="left:73px;top:114.3px">0.39454 W</div>
 <div class="a chev" style="left:1px;top:130px"></div><div class="a" style="left:13px;top:127px">Accumulated</div>
 <div class="a" style="left:28px;top:139.7px">TIME</div><div class="a" style="left:73px;top:139.7px">02:33:20.000</div>
</div>
<!--/TREE-->
<!--PARAM-->
<div class="a grp" style="left:1754px;top:29px;width:153px;height:303px"></div>
<div class="a gt" style="left:1759px;top:24px">Parameter display</div>
<div class="a pl" style="left:1761px;top:46px">VBUS:</div>
<div class="a vb" style="left:1800px;top:43px;width:85px;height:21px;color:#ffff00">0.00140</div>
<div class="a un" style="left:1888px;top:45px">V</div>
<div class="a pl" style="left:1761px;top:81px">IBUS:</div>
<div class="a vb" style="left:1798px;top:78px;width:87px;height:21px;color:#00ff00">0.00024</div>
<div class="a un" style="left:1888px;top:80px">A</div>
<div class="a pl" style="left:1761px;top:116px">PBUS:</div>
<div class="a vb" style="left:1800px;top:113px;width:80px;height:21px;color:#9400ff">0.00000</div>
<div class="a un" style="left:1884px;top:115px">W</div>
<div class="a sep" style="left:1755px;top:141px;width:151px"></div>
<div class="a pl" style="left:1761px;top:154px">D+:</div>
<div class="a vb" style="left:1788px;top:151px;width:97px;height:21px;color:#ff1a1a">0.155</div>
<div class="a un" style="left:1888px;top:153px">V</div>
<div class="a pl" style="left:1761px;top:189px">D-:</div>
<div class="a vb" style="left:1784px;top:186px;width:101px;height:20px;color:#1a7dff">0.151</div>
<div class="a un" style="left:1888px;top:188px">V</div>
<div class="a sep" style="left:1755px;top:213px;width:151px"></div>
<div class="a bdg" style="left:1764px;top:218px">1</div>
<div class="a pl" style="left:1784px;top:218px;font-size:12.5px;color:#e8e4d8;transform:scaleX(.93)">DCP 1.5A</div>
<div class="a bdg" style="left:1764px;top:237px">2</div>
<div class="a pl" style="left:1784px;top:236px;font-size:12.5px;color:#e8e4d8;transform:scaleX(.93)">USB2.0 HIGH</div>
<div class="a sep" style="left:1755px;top:252px;width:151px"></div>
<svg class="a" style="left:1761px;top:262px" width="20" height="20" viewBox="0 0 20 20"><g transform="translate(10.2 9.5) rotate(-45)"><rect x="-11" y="-0.6" width="22" height="1.2" rx=".6" fill="#e8c0b8"/><rect x="-4.5" y="-2.6" width="9" height="5.2" fill="#7cc8f4"/><rect x="-4.5" y="-1.6" width="9" height="1.4" fill="#b0e0fa"/><rect x="-7.3" y="-3.7" width="3.2" height="7.4" rx=".9" fill="#f07090"/><rect x="4.1" y="-3.7" width="3.2" height="7.4" rx=".9" fill="#f07090"/></g></svg>
<div class="a vb" style="left:1784px;top:262px;width:99px;height:21px;color:#fff">5.83333</div>
<div class="a un" style="left:1887px;top:263px">&#937;</div>
<svg class="a" style="left:1765px;top:298px" width="12" height="18" viewBox="0 0 12 18"><rect x="4" y="0.5" width="4" height="12" rx="2" fill="#8ec8f0"/><circle cx="6" cy="14" r="3.3" fill="#8ec8f0"/></svg>
<div class="a vb" style="left:1784px;top:297px;width:92px;height:21px;color:#fff">19.2</div>
<div class="a" style="left:1881px;top:297px;width:18px;height:19px;border:1px solid #6a6a6a;border-radius:3px;background:#505050;font-size:9px;line-height:17px;text-align:center;color:#e8e8e8">&#8451;</div>
<!--/PARAM-->
<!--ALARM-->
<div class="a abtn" style="top:338px"><svg class="a" style="left:62px;top:4px" width="26" height="22" viewBox="0 0 26 22"><g stroke="#2fbf6a" stroke-width="1.1" fill="none" stroke-linecap="round"><path d="M13 2.2a1.2 1.2 0 0 1 0 0"/><circle cx="13" cy="2.3" r="1.1"/><path d="M8 15V9.5a5 5 0 0 1 10 0V15l2.2 2.3H5.8z"/><path d="M11.2 17.8a1.8 1.8 0 0 0 3.6 0"/><path d="M4.3 5.5q-2.2 4.5 0 9M2.2 4q-3 6 0 12M21.7 5.5q2.2 4.5 0 9M23.8 4q3 6 0 12"/><path d="M15.5 6.3q1.2.7 1.5 2"/></g></svg><div class="a" style="left:0;top:29px;width:150px">VBUS ALARM: 24.00V</div></div>
<div class="a abtn" style="top:383px"><svg class="a" style="left:62px;top:4px" width="26" height="22" viewBox="0 0 26 22"><g stroke="#2fbf6a" stroke-width="1.1" fill="none" stroke-linecap="round"><path d="M13 2.2a1.2 1.2 0 0 1 0 0"/><circle cx="13" cy="2.3" r="1.1"/><path d="M8 15V9.5a5 5 0 0 1 10 0V15l2.2 2.3H5.8z"/><path d="M11.2 17.8a1.8 1.8 0 0 0 3.6 0"/><path d="M4.3 5.5q-2.2 4.5 0 9M2.2 4q-3 6 0 12M21.7 5.5q2.2 4.5 0 9M23.8 4q3 6 0 12"/><path d="M15.5 6.3q1.2.7 1.5 2"/></g></svg><div class="a" style="left:0;top:29px;width:150px">IBUS ALARM: 7.00A</div></div>
<div class="a abtn" style="top:428px"><svg class="a" style="left:62px;top:4px" width="26" height="22" viewBox="0 0 26 22"><g stroke="#2fbf6a" stroke-width="1.1" fill="none" stroke-linecap="round"><path d="M13 2.2a1.2 1.2 0 0 1 0 0"/><circle cx="13" cy="2.3" r="1.1"/><path d="M8 15V9.5a5 5 0 0 1 10 0V15l2.2 2.3H5.8z"/><path d="M11.2 17.8a1.8 1.8 0 0 0 3.6 0"/><path d="M4.3 5.5q-2.2 4.5 0 9M2.2 4q-3 6 0 12M21.7 5.5q2.2 4.5 0 9M23.8 4q3 6 0 12"/><path d="M15.5 6.3q1.2.7 1.5 2"/></g></svg><div class="a" style="left:0;top:29px;width:150px">PBUS ALARM: 168.00W</div></div>
<!--/ALARM-->
<!--BOTTOM-->
<div class="a grp" style="left:28px;top:836px;width:160px;height:180px"></div>
<div class="a gt" style="left:33px;top:831px">Recording conditions</div>
<div class="a rl" style="left:35px;top:845px">Sampling Rate:</div>
<div class="a" style="left:35px;top:865px;width:110px;height:7px;border-radius:4px;background:#c9c9c9"></div>
<div class="a" style="left:49px;top:862px;width:9px;height:12px;border-radius:2px;background:#8a8a8a"></div>
<div class="a rl" style="left:149px;top:863px;color:#d8d800">0.50sps</div>
<div class="a rsep" style="top:881px"></div>
<div class="a rl" style="left:35px;top:890px">Start CUR(mA):</div>
<div class="a sb" style="left:104px;top:889px"></div><div class="a sv" style="left:123px;top:889px">50</div><div class="a sb" style="left:162px;top:889px"></div>
<div class="a rsep" style="top:907px"></div>
<div class="a rl" style="left:35px;top:916px">Stop CUR(mA):</div>
<div class="a sb" style="left:104px;top:915px"></div><div class="a sv" style="left:123px;top:915px">0</div><div class="a sb" style="left:162px;top:915px"></div>
<div class="a rsep" style="top:933px"></div>
<div class="a rl" style="left:35px;top:942px">Stop time(s):</div>
<div class="a sb" style="left:104px;top:941px"></div><div class="a sv" style="left:123px;top:941px">5</div><div class="a sb" style="left:162px;top:941px"></div>
<div class="a rsep" style="top:960px"></div>
<div class="a rl" style="left:35px;top:971px">Control:</div>
<div class="a cb" style="left:73px;top:967px;width:22px"></div>
<div class="a cb" style="left:100px;top:967px;width:24px;border:1px solid #8a8a8a"></div>
<div class="a cb" style="left:130px;top:967px;width:21px"></div>
<div class="a cb" style="left:157px;top:967px;width:23px;border:1px solid #8a8a8a"></div>
<svg class="a" style="left:0;top:950px" width="200" height="50" viewBox="0 950 200 50">
<path d="M80 971h5l3 3v9h-8z" fill="#f4f4f4"/><circle cx="88" cy="982" r="2.2" fill="#cfcfcf"/>
<circle cx="112.3" cy="976.5" r="5.8" fill="#22b3a0"/><path d="M110.3 973.3 L115.2 976.5 L110.3 979.7Z" fill="#fff"/>
<rect x="136.5" y="972.5" width="2" height="8" fill="#bcbcbc"/><rect x="141.5" y="972.5" width="2" height="8" fill="#bcbcbc"/>
<rect x="164.7" y="973" width="7.5" height="7.5" fill="#e84a5f"/>
</svg>
<svg class="a" style="left:100px;top:885px" width="90" height="70" viewBox="100 885 90 70"><g stroke="#c8c8c8" stroke-width="1.2" fill="none"><path d="M107 895.5h10M107 921.5h10M107 947.5h10M165 895.5h11M170.5 890v11M165 921.5h11M170.5 916v11M165 947.5h11M170.5 942v11"/></g></svg>
<div class="a rsep" style="top:991px"></div>
<div class="a rl" style="left:35px;top:1000px">Status:</div><div class="a rl" style="left:69px;top:1000px;color:#d0c890">Idle</div>

<div class="a grp" style="left:193px;top:836px;width:206px;height:179px"></div>
<div class="a gt" style="left:198px;top:831px">Main record</div>
<div class="a tbl" style="left:200px;top:849px;width:192px;height:160px"></div>
<div class="a th" style="left:201px;width:48px">Item</div><div class="a th" style="left:249px;width:48px">Color</div><div class="a th" style="left:297px;width:47px">Record</div><div class="a th" style="left:344px;width:47px;border-right:none">Display</div>
<div class="a" style="left:201px;top:868px;width:190px;height:1px;background:#d8d8d8"></div>
<div class="a tc" style="left:248.5px;top:868px;height:90px"></div><div class="a tc" style="left:296.5px;top:868px;height:90px"></div><div class="a tc" style="left:343.5px;top:868px;height:90px"></div>
<div class="a tr" style="left:201px;top:890px;width:190px"></div><div class="a tr" style="left:201px;top:913px;width:190px"></div><div class="a tr" style="left:201px;top:935px;width:190px"></div><div class="a tr" style="left:201px;top:958px;width:190px"></div>
<div class="a td" style="left:201px;top:873px;width:48px">VBUS</div><div class="a td" style="left:201px;top:896px;width:48px">IBUS</div><div class="a td" style="left:201px;top:918px;width:48px">D+</div><div class="a td" style="left:201px;top:941px;width:48px">D-</div>
<div class="a sq" style="left:267px;top:874px;background:#ffff00"></div><div class="a sq" style="left:267px;top:896px;background:#00ee00"></div><div class="a sq" style="left:267px;top:919px;background:#ff0000"></div><div class="a sq" style="left:267px;top:941px;background:#0066ff"></div>
<div class="a ck" style="left:316px;top:874px;background:#a8a8a8"><svg class="a" style="left:0;top:0" width="11" height="11"><path d="M2.5 5.5l2 2 4-4" stroke="#444" stroke-width="1.2" fill="none"/></svg></div><div class="a ck" style="left:363px;top:874px;background:#5ad29a"><svg class="a" style="left:0;top:0" width="11" height="11"><path d="M2.5 5.5l2 2 4-4" stroke="#444" stroke-width="1.2" fill="none"/></svg></div><div class="a ck" style="left:316px;top:896px;background:#a8a8a8"><svg class="a" style="left:0;top:0" width="11" height="11"><path d="M2.5 5.5l2 2 4-4" stroke="#444" stroke-width="1.2" fill="none"/></svg></div><div class="a ck" style="left:363px;top:896px;background:#5ad29a"><svg class="a" style="left:0;top:0" width="11" height="11"><path d="M2.5 5.5l2 2 4-4" stroke="#444" stroke-width="1.2" fill="none"/></svg></div><div class="a ck" style="left:316px;top:919px"></div><div class="a ck" style="left:363px;top:919px"></div><div class="a ck" style="left:316px;top:941px"></div><div class="a ck" style="left:363px;top:941px"></div>

<div class="a grp" style="left:404px;top:836px;width:207px;height:180px"></div>
<div class="a gt" style="left:409px;top:831px">Auxiliary record</div>
<div class="a tbl" style="left:412px;top:849px;width:192px;height:160px"></div>
<div class="a th" style="left:413px;width:47px">Item</div><div class="a th" style="left:460px;width:48px">Color</div><div class="a th" style="left:508px;width:47px">Record</div><div class="a th" style="left:555px;width:48px;border-right:none">Display</div>
<div class="a" style="left:413px;top:868px;width:190px;height:1px;background:#d8d8d8"></div>
<div class="a tc" style="left:459.5px;top:868px;height:67px"></div><div class="a tc" style="left:507.5px;top:868px;height:67px"></div><div class="a tc" style="left:554.5px;top:868px;height:67px"></div>
<div class="a tr" style="left:413px;top:890px;width:190px"></div><div class="a tr" style="left:413px;top:912px;width:190px"></div><div class="a tr" style="left:413px;top:935px;width:190px"></div>
<div class="a td" style="left:413px;top:873px;width:47px">PBUS</div><div class="a td" style="left:413px;top:896px;width:47px">CAP</div><div class="a td" style="left:413px;top:918px;width:47px">NRG</div>
<div class="a sq" style="left:478px;top:874px;background:#ff55ff"></div><div class="a sq" style="left:478px;top:896px;background:#ff5500"></div><div class="a sq" style="left:478px;top:918px;background:#ffaa00"></div>
<div class="a ck" style="left:527px;top:874px;background:#a8a8a8"><svg class="a" style="left:0;top:0" width="11" height="11"><path d="M2.5 5.5l2 2 4-4" stroke="#444" stroke-width="1.2" fill="none"/></svg></div><div class="a ck" style="left:574px;top:874px;background:#5ad29a"><svg class="a" style="left:0;top:0" width="11" height="11"><path d="M2.5 5.5l2 2 4-4" stroke="#444" stroke-width="1.2" fill="none"/></svg></div><div class="a ck" style="left:527px;top:896px"></div><div class="a ck" style="left:574px;top:896px"></div><div class="a ck" style="left:527px;top:918px"></div><div class="a ck" style="left:574px;top:918px"></div>

<div class="a grp" style="left:616px;top:836px;width:165px;height:82px"></div>
<div class="a gt" style="left:621px;top:831px">Image Processing</div>
<div class="a" style="left:625px;top:852px;width:9.5px;height:9.5px;border-radius:3px;background:#fff"></div>
<div class="a rl" style="left:639px;top:851px">Zoom freely</div>
<div class="a grp" style="left:616px;top:928px;width:165px;height:88px"></div>
<div class="a gt" style="left:621px;top:923px">File operations</div>
<div class="a fb" style="top:942px"><span style="padding-left:14px">Open</span></div><svg class="a" style="left:678px;top:945px" width="12" height="11" viewBox="0 0 12 11"><path d="M1 2h4l1 1h5v7H1z" fill="#e8a820"/><path d="M1 4.5h10.5L11 10H1z" fill="#ffd54a"/></svg>
<div class="a fb" style="top:966px"><span style="padding-left:14px">Save</span></div><svg class="a" style="left:680px;top:969px" width="11" height="11" viewBox="0 0 11 11"><rect x="0.5" y="0.5" width="10" height="10" rx="1" fill="#c8b8e8"/><rect x="2.5" y="0.5" width="6" height="3.5" fill="#f0f0ff"/><rect x="2" y="6" width="7" height="4.5" fill="#e86a8a"/></svg>
<div class="a fb" style="top:990px"><span style="padding-left:14px">Import</span></div><svg class="a" style="left:675px;top:992px" width="12" height="13" viewBox="0 0 12 13"><ellipse cx="5.5" cy="2.5" rx="5" ry="2" fill="#c8c8f0"/><path d="M0.5 2.5v8a5 2 0 0 0 10 0v-8a5 2 0 0 1-10 0z" fill="#a8a8d8"/><circle cx="9.5" cy="10.5" r="2" fill="#4ab0a0"/></svg>
<div class="a" style="left:1753px;top:470px;width:1px;height:564px;background:#454545"></div>
<!--/BOTTOM-->




<div id="taskbar" class="a"></div>
<!--TASKBAR-->
<svg class="a" style="left:1822px;top:0" width="98" height="17" viewBox="1822 0 98 17"><g stroke="#333" stroke-width="1" fill="none"><path d="M1828 8.5h9"/><rect x="1862.5" y="5.5" width="6" height="6"/><path d="M1864.5 5.5v-2h6v6h-2"/><path d="M1897 4l8 8M1905 4l-8 8"/></g></svg>
<svg class="a" style="left:780px;top:1044px" width="360" height="36" viewBox="780 1044 360 36">
 <g fill="#1a8ae8"><rect x="813" y="1054" width="8" height="8" fill="#3aa0f0"/><rect x="822" y="1054" width="8" height="8" fill="#2b95ec"/><rect x="813" y="1063" width="8" height="8" fill="#1e86e2"/><rect x="822" y="1063" width="8" height="8" fill="#1a7edc"/></g>
 <rect x="842" y="1051" width="73" height="22" rx="11" fill="#f6f9fd"/>
 <circle cx="866" cy="1061" r="3.5" stroke="#222" stroke-width="1.2" fill="none"/><path d="M863.5 1063.5l-3 3" stroke="#222" stroke-width="1.3"/>
 <text x="874" y="1065.5" font-size="9.4" font-family="Liberation Sans" fill="#222" textLength="24">Suche</text>
 <rect x="925" y="1057" width="13" height="13" fill="#1c1c1c"/><rect x="930" y="1054" width="12" height="12" fill="#d8d8d8"/>
 <path d="M958 1054h6l2 2h9v14h-17z" fill="#e8b020"/><rect x="958" y="1058" width="17" height="12" fill="#ffd24a"/><rect x="961" y="1065" width="11" height="5" fill="#1a7ed8"/>
 <rect x="964" y="1075" width="5" height="1.5" rx="0.7" fill="#777"/>
 <circle cx="1000" cy="1062" r="9" fill="#dd4433"/><path d="M1000 1062 L991.5 1058 A9 9 0 0 1 1008.5 1058z" fill="#ea4335"/><path d="M1000 1062 L1008.7 1059 A9 9 0 0 1 996 1070.2z" fill="#fbbc05"/><path d="M1000 1062 L996 1070.2 A9 9 0 0 1 991.3 1058z" fill="#34a853"/><circle cx="1000" cy="1062" r="4.2" fill="#fff"/><circle cx="1000" cy="1062" r="3.3" fill="#4285f4"/>
 <rect x="1024" y="1054" width="18" height="14" rx="1" fill="#2a8ee8"/><rect x="1026" y="1056" width="14" height="10" fill="#9ed0f8"/><circle cx="1030" cy="1060" r="2.5" fill="#f09030"/>
 <rect x="1052" y="1049" width="28" height="28" rx="4" fill="#f4f8fc"/><path d="M1066 1052l8 3-1 8q-2 5-7 7q-5-2-7-7l-1-8z" fill="#1a7ed8"/><path d="M1066 1055l5 2-.6 5q-1.3 3-4.4 4.4q-3.1-1.4-4.4-4.4l-.6-5z" fill="#b8dcf8"/><rect x="1061" y="1074.5" width="10" height="2.5" rx="1" fill="#1a7ed8"/>
 <rect x="1091" y="1054" width="17" height="17" rx="2" fill="#3a7ee0"/><path d="M1091 1071l6-8 4 4 3-3 4 7z" fill="#a8d8ff"/><circle cx="1104" cy="1057.5" r="1.8" fill="#fff"/><path d="M1091 1067 L1108 1060 V1071 H1091z" fill="#7a4ad8" opacity=".6"/>
 <rect x="1097" y="1075" width="5" height="1.5" rx="0.7" fill="#777"/>
</svg>
<svg class="a" style="left:1750px;top:1044px" width="170" height="36" viewBox="1750 1044 170 36">
 <path d="M1766 1065l4-4 4 4" stroke="#222" stroke-width="1.1" fill="none"/>
 <path d="M1784 1062a5 5 0 0 1 9-3M1793 1056v3h-3M1793 1063a5 5 0 0 1-8 3M1784 1068v-3h2.5" stroke="#222" stroke-width="1" fill="none"/><circle cx="1791.5" cy="1065" r="2.8" fill="#1a73e8"/>
 <rect x="1804.5" y="1056.5" width="9" height="8" stroke="#222" stroke-width="1" fill="none"/><path d="M1807 1068h6M1814.5 1062v6" stroke="#222" stroke-width="1"/><rect x="1813" y="1054.5" width="3" height="5" rx="1" stroke="#222" stroke-width=".9" fill="none"/>
 <path d="M1822 1059h2l3-3v12l-3-3h-2z" stroke="#222" stroke-width="1" fill="none"/><path d="M1829 1059.5q1.5 2.5 0 5M1831 1058q2.5 4 0 8M1833 1056.5q3.5 5.5 0 11" stroke="#222" stroke-width=".9" fill="none"/>
 <text x="1887" y="1059" font-size="8.6" font-family="Liberation Sans" fill="#222" text-anchor="end">00:39</text>
 <text x="1887" y="1071" font-size="8.6" font-family="Liberation Sans" fill="#222" text-anchor="end" textLength="41">29.12.2022</text>
 <circle cx="1898.5" cy="1062" r="5.8" fill="#1a73d8"/><text x="1898.5" y="1065" font-size="8" font-family="Liberation Sans" fill="#fff" text-anchor="middle">2</text>
</svg>
<!--/TASKBAR-->

</body></html>
